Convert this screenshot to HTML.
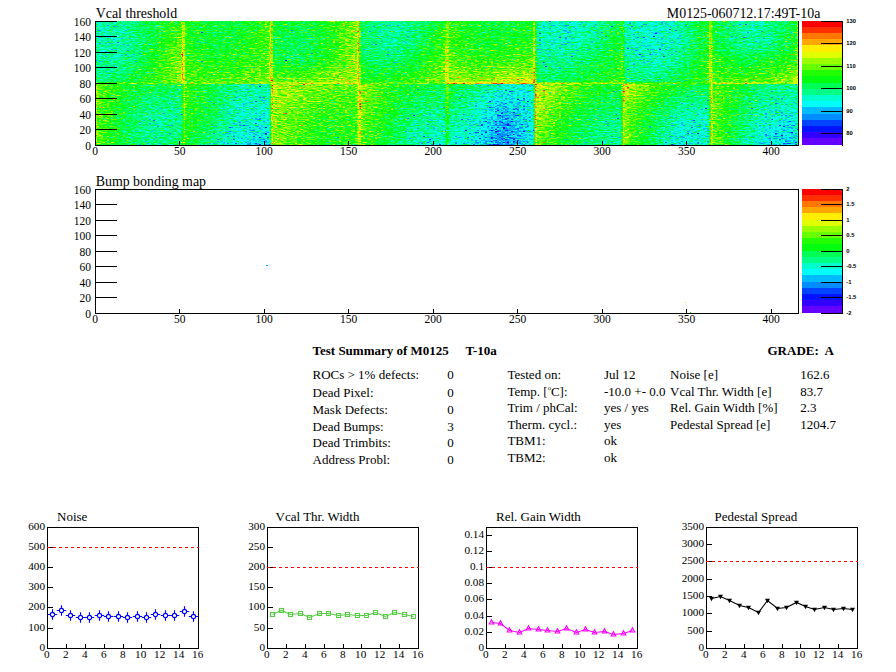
<!DOCTYPE html>
<html lang="en"><head><meta charset="utf-8"><title>M0125 Test Summary</title>
<style>html,body{margin:0;padding:0;background:#fff;overflow:hidden}svg{display:block}text{white-space:pre;font-family:"Liberation Serif","Times New Roman",serif;fill:#000}.t{font-size:13.9px}.u{font-size:13px}.l{font-size:11.5px}.m{font-size:11.2px}.z{font-family:"Liberation Sans",Arial,sans-serif;font-weight:bold;font-size:5.8px}.s{font-size:13px}.b{font-weight:bold}.ax{stroke:#000;stroke-width:1;fill:none;shape-rendering:crispEdges}</style></head><body>
<svg width="896" height="672" viewBox="0 0 896 672">
<defs><filter id="pal" x="95" y="21" width="704" height="125" filterUnits="userSpaceOnUse" primitiveUnits="userSpaceOnUse" color-interpolation-filters="sRGB">
<feTurbulence type="fractalNoise" baseFrequency="0.31 0.83" numOctaves="3" seed="5" result="n"/>
<feComponentTransfer in="n" result="n2"><feFuncR type="table" tableValues="0.0000 0.0493 0.0969 0.1407 0.1808 0.2175 0.2509 0.2813 0.3089 0.3339 0.3566 0.3771 0.3956 0.4124 0.4277 0.4418 0.4547 0.4668 0.4782 0.4892 0.5000 0.5108 0.5218 0.5332 0.5453 0.5582 0.5723 0.5876 0.6044 0.6229 0.6434 0.6661 0.6911 0.7187 0.7491 0.7825 0.8192 0.8593 0.9031 0.9507 1.0000"/></feComponentTransfer>
<feColorMatrix in="n2" type="matrix" values="1 0 0 0 0  1 0 0 0 0  1 0 0 0 0  0 0 0 0 1" result="ng"/>
<feFlood x="95" y="21" width="1" height="1" flood-color="#000" flood-opacity="1" result="dot"/>
<feComposite in="dot" in2="dot" operator="over" x="95" y="21" width="2" height="1" result="cell"/>
<feTile in="cell" result="grid"/>
<feComposite in="ng" in2="grid" operator="in" result="samp"/>
<feOffset in="samp" dx="1" dy="0" result="samp2"/>
<feMerge result="pix"><feMergeNode in="samp"/><feMergeNode in="samp2"/></feMerge>
<feComposite in="SourceGraphic" in2="pix" operator="arithmetic" k1="0" k2="1" k3="1" k4="-0.5"/>
<feComponentTransfer><feFuncR type="discrete" tableValues="0.387 0.200 0.000 0.000 0.000 0.000 0.000 0.000 0.000 0.000 0.000 0.133 0.413 0.600 0.880 1.000 1.000 1.000 1.000 1.000"/><feFuncG type="discrete" tableValues="0.000 0.000 0.080 0.267 0.547 0.733 1.000 1.000 1.000 1.000 1.000 1.000 1.000 1.000 1.000 0.933 0.653 0.467 0.187 0.000"/><feFuncB type="discrete" tableValues="1.000 1.000 1.000 1.000 1.000 1.000 0.987 0.800 0.520 0.333 0.053 0.000 0.000 0.000 0.000 0.000 0.000 0.000 0.000 0.000"/></feComponentTransfer>
</filter><clipPath id="hc"><rect x="96" y="21" width="702" height="124"/></clipPath></defs>
<rect width="896" height="672" fill="#fff"/>
<g clip-path="url(#hc)"><g filter="url(#pal)">
<rect x="90" y="16" width="714" height="134" fill="#868686"/>
<rect x="95.60" y="21.20" width="7.06" height="6.50" fill="#636363"/>
<rect x="102.36" y="21.20" width="7.06" height="6.50" fill="#656565"/>
<rect x="109.12" y="21.20" width="7.06" height="6.50" fill="#676767"/>
<rect x="115.88" y="21.20" width="7.06" height="6.50" fill="#696969"/>
<rect x="122.64" y="21.20" width="7.06" height="6.50" fill="#6b6b6b"/>
<rect x="129.40" y="21.20" width="7.06" height="6.50" fill="#6f6f6f"/>
<rect x="136.16" y="21.20" width="7.06" height="6.50" fill="#747474"/>
<rect x="142.92" y="21.20" width="7.06" height="6.50" fill="#787878"/>
<rect x="149.68" y="21.20" width="7.06" height="6.50" fill="#7d7d7d"/>
<rect x="156.44" y="21.20" width="7.06" height="6.50" fill="#828282"/>
<rect x="163.20" y="21.20" width="7.06" height="6.50" fill="#878787"/>
<rect x="169.96" y="21.20" width="7.06" height="6.50" fill="#8c8c8c"/>
<rect x="176.72" y="21.20" width="7.06" height="6.50" fill="#919191"/>
<rect x="95.60" y="27.40" width="7.06" height="6.50" fill="#626262"/>
<rect x="102.36" y="27.40" width="7.06" height="6.50" fill="#646464"/>
<rect x="109.12" y="27.40" width="7.06" height="6.50" fill="#666666"/>
<rect x="115.88" y="27.40" width="7.06" height="6.50" fill="#686868"/>
<rect x="122.64" y="27.40" width="7.06" height="6.50" fill="#6a6a6a"/>
<rect x="129.40" y="27.40" width="7.06" height="6.50" fill="#6e6e6e"/>
<rect x="136.16" y="27.40" width="7.06" height="6.50" fill="#737373"/>
<rect x="142.92" y="27.40" width="7.06" height="6.50" fill="#797979"/>
<rect x="149.68" y="27.40" width="7.06" height="6.50" fill="#7e7e7e"/>
<rect x="156.44" y="27.40" width="7.06" height="6.50" fill="#848484"/>
<rect x="163.20" y="27.40" width="7.06" height="6.50" fill="#898989"/>
<rect x="169.96" y="27.40" width="7.06" height="6.50" fill="#8f8f8f"/>
<rect x="176.72" y="27.40" width="7.06" height="6.50" fill="#959595"/>
<rect x="95.60" y="33.60" width="7.06" height="6.50" fill="#626262"/>
<rect x="102.36" y="33.60" width="7.06" height="6.50" fill="#646464"/>
<rect x="109.12" y="33.60" width="7.06" height="6.50" fill="#656565"/>
<rect x="115.88" y="33.60" width="7.06" height="6.50" fill="#676767"/>
<rect x="122.64" y="33.60" width="7.06" height="6.50" fill="#696969"/>
<rect x="129.40" y="33.60" width="7.06" height="6.50" fill="#6d6d6d"/>
<rect x="136.16" y="33.60" width="7.06" height="6.50" fill="#737373"/>
<rect x="142.92" y="33.60" width="7.06" height="6.50" fill="#797979"/>
<rect x="149.68" y="33.60" width="7.06" height="6.50" fill="#7f7f7f"/>
<rect x="156.44" y="33.60" width="7.06" height="6.50" fill="#858585"/>
<rect x="163.20" y="33.60" width="7.06" height="6.50" fill="#8b8b8b"/>
<rect x="169.96" y="33.60" width="7.06" height="6.50" fill="#919191"/>
<rect x="176.72" y="33.60" width="7.06" height="6.50" fill="#989898"/>
<rect x="95.60" y="39.80" width="7.06" height="6.50" fill="#626262"/>
<rect x="102.36" y="39.80" width="7.06" height="6.50" fill="#636363"/>
<rect x="109.12" y="39.80" width="7.06" height="6.50" fill="#656565"/>
<rect x="115.88" y="39.80" width="7.06" height="6.50" fill="#666666"/>
<rect x="122.64" y="39.80" width="7.06" height="6.50" fill="#676767"/>
<rect x="129.40" y="39.80" width="7.06" height="6.50" fill="#6c6c6c"/>
<rect x="136.16" y="39.80" width="7.06" height="6.50" fill="#727272"/>
<rect x="142.92" y="39.80" width="7.06" height="6.50" fill="#797979"/>
<rect x="149.68" y="39.80" width="7.06" height="6.50" fill="#7f7f7f"/>
<rect x="156.44" y="39.80" width="7.06" height="6.50" fill="#868686"/>
<rect x="163.20" y="39.80" width="7.06" height="6.50" fill="#8d8d8d"/>
<rect x="169.96" y="39.80" width="7.06" height="6.50" fill="#949494"/>
<rect x="176.72" y="39.80" width="7.06" height="6.50" fill="#9b9b9b"/>
<rect x="95.60" y="46.00" width="7.06" height="6.50" fill="#636363"/>
<rect x="102.36" y="46.00" width="7.06" height="6.50" fill="#646464"/>
<rect x="109.12" y="46.00" width="7.06" height="6.50" fill="#666666"/>
<rect x="115.88" y="46.00" width="7.06" height="6.50" fill="#676767"/>
<rect x="122.64" y="46.00" width="7.06" height="6.50" fill="#686868"/>
<rect x="129.40" y="46.00" width="7.06" height="6.50" fill="#6d6d6d"/>
<rect x="136.16" y="46.00" width="7.06" height="6.50" fill="#747474"/>
<rect x="142.92" y="46.00" width="7.06" height="6.50" fill="#7a7a7a"/>
<rect x="149.68" y="46.00" width="7.06" height="6.50" fill="#818181"/>
<rect x="156.44" y="46.00" width="7.06" height="6.50" fill="#898989"/>
<rect x="163.20" y="46.00" width="7.06" height="6.50" fill="#909090"/>
<rect x="169.96" y="46.00" width="7.06" height="6.50" fill="#979797"/>
<rect x="176.72" y="46.00" width="7.06" height="6.50" fill="#9e9e9e"/>
<rect x="95.60" y="52.20" width="7.06" height="6.50" fill="#646464"/>
<rect x="102.36" y="52.20" width="7.06" height="6.50" fill="#666666"/>
<rect x="109.12" y="52.20" width="7.06" height="6.50" fill="#676767"/>
<rect x="115.88" y="52.20" width="7.06" height="6.50" fill="#696969"/>
<rect x="122.64" y="52.20" width="7.06" height="6.50" fill="#6a6a6a"/>
<rect x="129.40" y="52.20" width="7.06" height="6.50" fill="#6f6f6f"/>
<rect x="136.16" y="52.20" width="7.06" height="6.50" fill="#767676"/>
<rect x="142.92" y="52.20" width="7.06" height="6.50" fill="#7c7c7c"/>
<rect x="149.68" y="52.20" width="7.06" height="6.50" fill="#838383"/>
<rect x="156.44" y="52.20" width="7.06" height="6.50" fill="#8b8b8b"/>
<rect x="163.20" y="52.20" width="7.06" height="6.50" fill="#939393"/>
<rect x="169.96" y="52.20" width="7.06" height="6.50" fill="#9a9a9a"/>
<rect x="176.72" y="52.20" width="7.06" height="6.50" fill="#a2a2a2"/>
<rect x="95.60" y="58.40" width="7.06" height="6.50" fill="#666666"/>
<rect x="102.36" y="58.40" width="7.06" height="6.50" fill="#686868"/>
<rect x="109.12" y="58.40" width="7.06" height="6.50" fill="#696969"/>
<rect x="115.88" y="58.40" width="7.06" height="6.50" fill="#6b6b6b"/>
<rect x="122.64" y="58.40" width="7.06" height="6.50" fill="#6d6d6d"/>
<rect x="129.40" y="58.40" width="7.06" height="6.50" fill="#727272"/>
<rect x="136.16" y="58.40" width="7.06" height="6.50" fill="#787878"/>
<rect x="142.92" y="58.40" width="7.06" height="6.50" fill="#7f7f7f"/>
<rect x="149.68" y="58.40" width="7.06" height="6.50" fill="#868686"/>
<rect x="156.44" y="58.40" width="7.06" height="6.50" fill="#8e8e8e"/>
<rect x="163.20" y="58.40" width="7.06" height="6.50" fill="#959595"/>
<rect x="169.96" y="58.40" width="7.06" height="6.50" fill="#9d9d9d"/>
<rect x="176.72" y="58.40" width="7.06" height="6.50" fill="#a5a5a5"/>
<rect x="95.60" y="64.60" width="7.06" height="6.50" fill="#696969"/>
<rect x="102.36" y="64.60" width="7.06" height="6.50" fill="#6b6b6b"/>
<rect x="109.12" y="64.60" width="7.06" height="6.50" fill="#6d6d6d"/>
<rect x="115.88" y="64.60" width="7.06" height="6.50" fill="#6f6f6f"/>
<rect x="122.64" y="64.60" width="7.06" height="6.50" fill="#717171"/>
<rect x="129.40" y="64.60" width="7.06" height="6.50" fill="#767676"/>
<rect x="136.16" y="64.60" width="7.06" height="6.50" fill="#7c7c7c"/>
<rect x="142.92" y="64.60" width="7.06" height="6.50" fill="#828282"/>
<rect x="149.68" y="64.60" width="7.06" height="6.50" fill="#898989"/>
<rect x="156.44" y="64.60" width="7.06" height="6.50" fill="#909090"/>
<rect x="163.20" y="64.60" width="7.06" height="6.50" fill="#979797"/>
<rect x="169.96" y="64.60" width="7.06" height="6.50" fill="#9e9e9e"/>
<rect x="176.72" y="64.60" width="7.06" height="6.50" fill="#a5a5a5"/>
<rect x="95.60" y="70.80" width="7.06" height="6.50" fill="#6c6c6c"/>
<rect x="102.36" y="70.80" width="7.06" height="6.50" fill="#6e6e6e"/>
<rect x="109.12" y="70.80" width="7.06" height="6.50" fill="#707070"/>
<rect x="115.88" y="70.80" width="7.06" height="6.50" fill="#727272"/>
<rect x="122.64" y="70.80" width="7.06" height="6.50" fill="#757575"/>
<rect x="129.40" y="70.80" width="7.06" height="6.50" fill="#7a7a7a"/>
<rect x="136.16" y="70.80" width="7.06" height="6.50" fill="#808080"/>
<rect x="142.92" y="70.80" width="7.06" height="6.50" fill="#868686"/>
<rect x="149.68" y="70.80" width="7.06" height="6.50" fill="#8c8c8c"/>
<rect x="156.44" y="70.80" width="7.06" height="6.50" fill="#939393"/>
<rect x="163.20" y="70.80" width="7.06" height="6.50" fill="#999999"/>
<rect x="169.96" y="70.80" width="7.06" height="6.50" fill="#a0a0a0"/>
<rect x="176.72" y="70.80" width="7.06" height="6.50" fill="#a6a6a6"/>
<rect x="95.60" y="77.00" width="7.06" height="6.50" fill="#6e6e6e"/>
<rect x="102.36" y="77.00" width="7.06" height="6.50" fill="#717171"/>
<rect x="109.12" y="77.00" width="7.06" height="6.50" fill="#737373"/>
<rect x="115.88" y="77.00" width="7.06" height="6.50" fill="#767676"/>
<rect x="122.64" y="77.00" width="7.06" height="6.50" fill="#797979"/>
<rect x="129.40" y="77.00" width="7.06" height="6.50" fill="#7d7d7d"/>
<rect x="136.16" y="77.00" width="7.06" height="6.50" fill="#848484"/>
<rect x="142.92" y="77.00" width="7.06" height="6.50" fill="#8a8a8a"/>
<rect x="149.68" y="77.00" width="7.06" height="6.50" fill="#909090"/>
<rect x="156.44" y="77.00" width="7.06" height="6.50" fill="#969696"/>
<rect x="163.20" y="77.00" width="7.06" height="6.50" fill="#9b9b9b"/>
<rect x="169.96" y="77.00" width="7.06" height="6.50" fill="#a1a1a1"/>
<rect x="176.72" y="77.00" width="7.06" height="6.50" fill="#a7a7a7"/>
<rect x="95.60" y="83.20" width="7.06" height="6.50" fill="#9d9d9d"/>
<rect x="102.36" y="83.20" width="7.06" height="6.50" fill="#979797"/>
<rect x="109.12" y="83.20" width="7.06" height="6.50" fill="#919191"/>
<rect x="115.88" y="83.20" width="7.06" height="6.50" fill="#8c8c8c"/>
<rect x="122.64" y="83.20" width="7.06" height="6.50" fill="#868686"/>
<rect x="129.40" y="83.20" width="7.06" height="6.50" fill="#838383"/>
<rect x="136.16" y="83.20" width="7.06" height="6.50" fill="#808080"/>
<rect x="142.92" y="83.20" width="7.06" height="6.50" fill="#7d7d7d"/>
<rect x="149.68" y="83.20" width="7.06" height="6.50" fill="#7b7b7b"/>
<rect x="156.44" y="83.20" width="7.06" height="6.50" fill="#7b7b7b"/>
<rect x="163.20" y="83.20" width="7.06" height="6.50" fill="#7b7b7b"/>
<rect x="169.96" y="83.20" width="7.06" height="6.50" fill="#7b7b7b"/>
<rect x="176.72" y="83.20" width="7.06" height="6.50" fill="#7b7b7b"/>
<rect x="95.60" y="89.40" width="7.06" height="6.50" fill="#9c9c9c"/>
<rect x="102.36" y="89.40" width="7.06" height="6.50" fill="#969696"/>
<rect x="109.12" y="89.40" width="7.06" height="6.50" fill="#909090"/>
<rect x="115.88" y="89.40" width="7.06" height="6.50" fill="#8a8a8a"/>
<rect x="122.64" y="89.40" width="7.06" height="6.50" fill="#848484"/>
<rect x="129.40" y="89.40" width="7.06" height="6.50" fill="#7f7f7f"/>
<rect x="136.16" y="89.40" width="7.06" height="6.50" fill="#7c7c7c"/>
<rect x="142.92" y="89.40" width="7.06" height="6.50" fill="#797979"/>
<rect x="149.68" y="89.40" width="7.06" height="6.50" fill="#777777"/>
<rect x="156.44" y="89.40" width="7.06" height="6.50" fill="#777777"/>
<rect x="163.20" y="89.40" width="7.06" height="6.50" fill="#777777"/>
<rect x="169.96" y="89.40" width="7.06" height="6.50" fill="#777777"/>
<rect x="176.72" y="89.40" width="7.06" height="6.50" fill="#777777"/>
<rect x="95.60" y="95.60" width="7.06" height="6.50" fill="#9b9b9b"/>
<rect x="102.36" y="95.60" width="7.06" height="6.50" fill="#949494"/>
<rect x="109.12" y="95.60" width="7.06" height="6.50" fill="#8e8e8e"/>
<rect x="115.88" y="95.60" width="7.06" height="6.50" fill="#878787"/>
<rect x="122.64" y="95.60" width="7.06" height="6.50" fill="#818181"/>
<rect x="129.40" y="95.60" width="7.06" height="6.50" fill="#7c7c7c"/>
<rect x="136.16" y="95.60" width="7.06" height="6.50" fill="#787878"/>
<rect x="142.92" y="95.60" width="7.06" height="6.50" fill="#747474"/>
<rect x="149.68" y="95.60" width="7.06" height="6.50" fill="#727272"/>
<rect x="156.44" y="95.60" width="7.06" height="6.50" fill="#727272"/>
<rect x="163.20" y="95.60" width="7.06" height="6.50" fill="#737373"/>
<rect x="169.96" y="95.60" width="7.06" height="6.50" fill="#737373"/>
<rect x="176.72" y="95.60" width="7.06" height="6.50" fill="#737373"/>
<rect x="95.60" y="101.80" width="7.06" height="6.50" fill="#9a9a9a"/>
<rect x="102.36" y="101.80" width="7.06" height="6.50" fill="#939393"/>
<rect x="109.12" y="101.80" width="7.06" height="6.50" fill="#8c8c8c"/>
<rect x="115.88" y="101.80" width="7.06" height="6.50" fill="#858585"/>
<rect x="122.64" y="101.80" width="7.06" height="6.50" fill="#7e7e7e"/>
<rect x="129.40" y="101.80" width="7.06" height="6.50" fill="#797979"/>
<rect x="136.16" y="101.80" width="7.06" height="6.50" fill="#747474"/>
<rect x="142.92" y="101.80" width="7.06" height="6.50" fill="#707070"/>
<rect x="149.68" y="101.80" width="7.06" height="6.50" fill="#6e6e6e"/>
<rect x="156.44" y="101.80" width="7.06" height="6.50" fill="#6e6e6e"/>
<rect x="163.20" y="101.80" width="7.06" height="6.50" fill="#6e6e6e"/>
<rect x="169.96" y="101.80" width="7.06" height="6.50" fill="#6f6f6f"/>
<rect x="176.72" y="101.80" width="7.06" height="6.50" fill="#6f6f6f"/>
<rect x="95.60" y="108.00" width="7.06" height="6.50" fill="#999999"/>
<rect x="102.36" y="108.00" width="7.06" height="6.50" fill="#929292"/>
<rect x="109.12" y="108.00" width="7.06" height="6.50" fill="#8b8b8b"/>
<rect x="115.88" y="108.00" width="7.06" height="6.50" fill="#848484"/>
<rect x="122.64" y="108.00" width="7.06" height="6.50" fill="#7c7c7c"/>
<rect x="129.40" y="108.00" width="7.06" height="6.50" fill="#777777"/>
<rect x="136.16" y="108.00" width="7.06" height="6.50" fill="#727272"/>
<rect x="142.92" y="108.00" width="7.06" height="6.50" fill="#6e6e6e"/>
<rect x="149.68" y="108.00" width="7.06" height="6.50" fill="#6b6b6b"/>
<rect x="156.44" y="108.00" width="7.06" height="6.50" fill="#6b6b6b"/>
<rect x="163.20" y="108.00" width="7.06" height="6.50" fill="#6b6b6b"/>
<rect x="169.96" y="108.00" width="7.06" height="6.50" fill="#6c6c6c"/>
<rect x="176.72" y="108.00" width="7.06" height="6.50" fill="#6c6c6c"/>
<rect x="95.60" y="114.20" width="7.06" height="6.50" fill="#999999"/>
<rect x="102.36" y="114.20" width="7.06" height="6.50" fill="#919191"/>
<rect x="109.12" y="114.20" width="7.06" height="6.50" fill="#8a8a8a"/>
<rect x="115.88" y="114.20" width="7.06" height="6.50" fill="#838383"/>
<rect x="122.64" y="114.20" width="7.06" height="6.50" fill="#7b7b7b"/>
<rect x="129.40" y="114.20" width="7.06" height="6.50" fill="#767676"/>
<rect x="136.16" y="114.20" width="7.06" height="6.50" fill="#717171"/>
<rect x="142.92" y="114.20" width="7.06" height="6.50" fill="#6c6c6c"/>
<rect x="149.68" y="114.20" width="7.06" height="6.50" fill="#696969"/>
<rect x="156.44" y="114.20" width="7.06" height="6.50" fill="#696969"/>
<rect x="163.20" y="114.20" width="7.06" height="6.50" fill="#696969"/>
<rect x="169.96" y="114.20" width="7.06" height="6.50" fill="#696969"/>
<rect x="176.72" y="114.20" width="7.06" height="6.50" fill="#696969"/>
<rect x="95.60" y="120.40" width="7.06" height="6.50" fill="#989898"/>
<rect x="102.36" y="120.40" width="7.06" height="6.50" fill="#919191"/>
<rect x="109.12" y="120.40" width="7.06" height="6.50" fill="#8a8a8a"/>
<rect x="115.88" y="120.40" width="7.06" height="6.50" fill="#828282"/>
<rect x="122.64" y="120.40" width="7.06" height="6.50" fill="#7b7b7b"/>
<rect x="129.40" y="120.40" width="7.06" height="6.50" fill="#757575"/>
<rect x="136.16" y="120.40" width="7.06" height="6.50" fill="#707070"/>
<rect x="142.92" y="120.40" width="7.06" height="6.50" fill="#6b6b6b"/>
<rect x="149.68" y="120.40" width="7.06" height="6.50" fill="#686868"/>
<rect x="156.44" y="120.40" width="7.06" height="6.50" fill="#686868"/>
<rect x="163.20" y="120.40" width="7.06" height="6.50" fill="#686868"/>
<rect x="169.96" y="120.40" width="7.06" height="6.50" fill="#686868"/>
<rect x="176.72" y="120.40" width="7.06" height="6.50" fill="#686868"/>
<rect x="95.60" y="126.60" width="7.06" height="6.50" fill="#989898"/>
<rect x="102.36" y="126.60" width="7.06" height="6.50" fill="#919191"/>
<rect x="109.12" y="126.60" width="7.06" height="6.50" fill="#8a8a8a"/>
<rect x="115.88" y="126.60" width="7.06" height="6.50" fill="#828282"/>
<rect x="122.64" y="126.60" width="7.06" height="6.50" fill="#7b7b7b"/>
<rect x="129.40" y="126.60" width="7.06" height="6.50" fill="#757575"/>
<rect x="136.16" y="126.60" width="7.06" height="6.50" fill="#717171"/>
<rect x="142.92" y="126.60" width="7.06" height="6.50" fill="#6c6c6c"/>
<rect x="149.68" y="126.60" width="7.06" height="6.50" fill="#696969"/>
<rect x="156.44" y="126.60" width="7.06" height="6.50" fill="#6a6a6a"/>
<rect x="163.20" y="126.60" width="7.06" height="6.50" fill="#6b6b6b"/>
<rect x="169.96" y="126.60" width="7.06" height="6.50" fill="#6c6c6c"/>
<rect x="176.72" y="126.60" width="7.06" height="6.50" fill="#6d6d6d"/>
<rect x="95.60" y="132.80" width="7.06" height="6.50" fill="#989898"/>
<rect x="102.36" y="132.80" width="7.06" height="6.50" fill="#919191"/>
<rect x="109.12" y="132.80" width="7.06" height="6.50" fill="#8a8a8a"/>
<rect x="115.88" y="132.80" width="7.06" height="6.50" fill="#828282"/>
<rect x="122.64" y="132.80" width="7.06" height="6.50" fill="#7b7b7b"/>
<rect x="129.40" y="132.80" width="7.06" height="6.50" fill="#757575"/>
<rect x="136.16" y="132.80" width="7.06" height="6.50" fill="#717171"/>
<rect x="142.92" y="132.80" width="7.06" height="6.50" fill="#6d6d6d"/>
<rect x="149.68" y="132.80" width="7.06" height="6.50" fill="#6b6b6b"/>
<rect x="156.44" y="132.80" width="7.06" height="6.50" fill="#6d6d6d"/>
<rect x="163.20" y="132.80" width="7.06" height="6.50" fill="#6e6e6e"/>
<rect x="169.96" y="132.80" width="7.06" height="6.50" fill="#6f6f6f"/>
<rect x="176.72" y="132.80" width="7.06" height="6.50" fill="#717171"/>
<rect x="95.60" y="139.00" width="7.06" height="6.50" fill="#989898"/>
<rect x="102.36" y="139.00" width="7.06" height="6.50" fill="#919191"/>
<rect x="109.12" y="139.00" width="7.06" height="6.50" fill="#8a8a8a"/>
<rect x="115.88" y="139.00" width="7.06" height="6.50" fill="#828282"/>
<rect x="122.64" y="139.00" width="7.06" height="6.50" fill="#7b7b7b"/>
<rect x="129.40" y="139.00" width="7.06" height="6.50" fill="#767676"/>
<rect x="136.16" y="139.00" width="7.06" height="6.50" fill="#727272"/>
<rect x="142.92" y="139.00" width="7.06" height="6.50" fill="#6e6e6e"/>
<rect x="149.68" y="139.00" width="7.06" height="6.50" fill="#6d6d6d"/>
<rect x="156.44" y="139.00" width="7.06" height="6.50" fill="#6f6f6f"/>
<rect x="163.20" y="139.00" width="7.06" height="6.50" fill="#717171"/>
<rect x="169.96" y="139.00" width="7.06" height="6.50" fill="#737373"/>
<rect x="176.72" y="139.00" width="7.06" height="6.50" fill="#757575"/>
<rect x="183.47" y="21.20" width="7.06" height="6.50" fill="#898989"/>
<rect x="190.23" y="21.20" width="7.06" height="6.50" fill="#868686"/>
<rect x="196.99" y="21.20" width="7.06" height="6.50" fill="#838383"/>
<rect x="203.75" y="21.20" width="7.06" height="6.50" fill="#808080"/>
<rect x="210.51" y="21.20" width="7.06" height="6.50" fill="#7e7e7e"/>
<rect x="217.27" y="21.20" width="7.06" height="6.50" fill="#7d7d7d"/>
<rect x="224.03" y="21.20" width="7.06" height="6.50" fill="#7e7e7e"/>
<rect x="230.79" y="21.20" width="7.06" height="6.50" fill="#7f7f7f"/>
<rect x="237.55" y="21.20" width="7.06" height="6.50" fill="#818181"/>
<rect x="244.31" y="21.20" width="7.06" height="6.50" fill="#868686"/>
<rect x="251.07" y="21.20" width="7.06" height="6.50" fill="#8b8b8b"/>
<rect x="257.83" y="21.20" width="7.06" height="6.50" fill="#909090"/>
<rect x="264.59" y="21.20" width="7.06" height="6.50" fill="#959595"/>
<rect x="183.47" y="27.40" width="7.06" height="6.50" fill="#898989"/>
<rect x="190.23" y="27.40" width="7.06" height="6.50" fill="#868686"/>
<rect x="196.99" y="27.40" width="7.06" height="6.50" fill="#848484"/>
<rect x="203.75" y="27.40" width="7.06" height="6.50" fill="#818181"/>
<rect x="210.51" y="27.40" width="7.06" height="6.50" fill="#7e7e7e"/>
<rect x="217.27" y="27.40" width="7.06" height="6.50" fill="#7e7e7e"/>
<rect x="224.03" y="27.40" width="7.06" height="6.50" fill="#7f7f7f"/>
<rect x="230.79" y="27.40" width="7.06" height="6.50" fill="#808080"/>
<rect x="237.55" y="27.40" width="7.06" height="6.50" fill="#838383"/>
<rect x="244.31" y="27.40" width="7.06" height="6.50" fill="#888888"/>
<rect x="251.07" y="27.40" width="7.06" height="6.50" fill="#8c8c8c"/>
<rect x="257.83" y="27.40" width="7.06" height="6.50" fill="#919191"/>
<rect x="264.59" y="27.40" width="7.06" height="6.50" fill="#959595"/>
<rect x="183.47" y="33.60" width="7.06" height="6.50" fill="#8a8a8a"/>
<rect x="190.23" y="33.60" width="7.06" height="6.50" fill="#878787"/>
<rect x="196.99" y="33.60" width="7.06" height="6.50" fill="#848484"/>
<rect x="203.75" y="33.60" width="7.06" height="6.50" fill="#818181"/>
<rect x="210.51" y="33.60" width="7.06" height="6.50" fill="#7f7f7f"/>
<rect x="217.27" y="33.60" width="7.06" height="6.50" fill="#7f7f7f"/>
<rect x="224.03" y="33.60" width="7.06" height="6.50" fill="#808080"/>
<rect x="230.79" y="33.60" width="7.06" height="6.50" fill="#828282"/>
<rect x="237.55" y="33.60" width="7.06" height="6.50" fill="#858585"/>
<rect x="244.31" y="33.60" width="7.06" height="6.50" fill="#898989"/>
<rect x="251.07" y="33.60" width="7.06" height="6.50" fill="#8d8d8d"/>
<rect x="257.83" y="33.60" width="7.06" height="6.50" fill="#919191"/>
<rect x="264.59" y="33.60" width="7.06" height="6.50" fill="#959595"/>
<rect x="183.47" y="39.80" width="7.06" height="6.50" fill="#8a8a8a"/>
<rect x="190.23" y="39.80" width="7.06" height="6.50" fill="#878787"/>
<rect x="196.99" y="39.80" width="7.06" height="6.50" fill="#858585"/>
<rect x="203.75" y="39.80" width="7.06" height="6.50" fill="#828282"/>
<rect x="210.51" y="39.80" width="7.06" height="6.50" fill="#7f7f7f"/>
<rect x="217.27" y="39.80" width="7.06" height="6.50" fill="#7f7f7f"/>
<rect x="224.03" y="39.80" width="7.06" height="6.50" fill="#828282"/>
<rect x="230.79" y="39.80" width="7.06" height="6.50" fill="#848484"/>
<rect x="237.55" y="39.80" width="7.06" height="6.50" fill="#878787"/>
<rect x="244.31" y="39.80" width="7.06" height="6.50" fill="#8a8a8a"/>
<rect x="251.07" y="39.80" width="7.06" height="6.50" fill="#8e8e8e"/>
<rect x="257.83" y="39.80" width="7.06" height="6.50" fill="#929292"/>
<rect x="264.59" y="39.80" width="7.06" height="6.50" fill="#959595"/>
<rect x="183.47" y="46.00" width="7.06" height="6.50" fill="#8d8d8d"/>
<rect x="190.23" y="46.00" width="7.06" height="6.50" fill="#8a8a8a"/>
<rect x="196.99" y="46.00" width="7.06" height="6.50" fill="#878787"/>
<rect x="203.75" y="46.00" width="7.06" height="6.50" fill="#858585"/>
<rect x="210.51" y="46.00" width="7.06" height="6.50" fill="#828282"/>
<rect x="217.27" y="46.00" width="7.06" height="6.50" fill="#828282"/>
<rect x="224.03" y="46.00" width="7.06" height="6.50" fill="#848484"/>
<rect x="230.79" y="46.00" width="7.06" height="6.50" fill="#868686"/>
<rect x="237.55" y="46.00" width="7.06" height="6.50" fill="#898989"/>
<rect x="244.31" y="46.00" width="7.06" height="6.50" fill="#8c8c8c"/>
<rect x="251.07" y="46.00" width="7.06" height="6.50" fill="#909090"/>
<rect x="257.83" y="46.00" width="7.06" height="6.50" fill="#939393"/>
<rect x="264.59" y="46.00" width="7.06" height="6.50" fill="#979797"/>
<rect x="183.47" y="52.20" width="7.06" height="6.50" fill="#909090"/>
<rect x="190.23" y="52.20" width="7.06" height="6.50" fill="#8e8e8e"/>
<rect x="196.99" y="52.20" width="7.06" height="6.50" fill="#8b8b8b"/>
<rect x="203.75" y="52.20" width="7.06" height="6.50" fill="#888888"/>
<rect x="210.51" y="52.20" width="7.06" height="6.50" fill="#868686"/>
<rect x="217.27" y="52.20" width="7.06" height="6.50" fill="#868686"/>
<rect x="224.03" y="52.20" width="7.06" height="6.50" fill="#878787"/>
<rect x="230.79" y="52.20" width="7.06" height="6.50" fill="#898989"/>
<rect x="237.55" y="52.20" width="7.06" height="6.50" fill="#8c8c8c"/>
<rect x="244.31" y="52.20" width="7.06" height="6.50" fill="#8f8f8f"/>
<rect x="251.07" y="52.20" width="7.06" height="6.50" fill="#929292"/>
<rect x="257.83" y="52.20" width="7.06" height="6.50" fill="#959595"/>
<rect x="264.59" y="52.20" width="7.06" height="6.50" fill="#999999"/>
<rect x="183.47" y="58.40" width="7.06" height="6.50" fill="#939393"/>
<rect x="190.23" y="58.40" width="7.06" height="6.50" fill="#919191"/>
<rect x="196.99" y="58.40" width="7.06" height="6.50" fill="#8e8e8e"/>
<rect x="203.75" y="58.40" width="7.06" height="6.50" fill="#8c8c8c"/>
<rect x="210.51" y="58.40" width="7.06" height="6.50" fill="#898989"/>
<rect x="217.27" y="58.40" width="7.06" height="6.50" fill="#898989"/>
<rect x="224.03" y="58.40" width="7.06" height="6.50" fill="#8b8b8b"/>
<rect x="230.79" y="58.40" width="7.06" height="6.50" fill="#8c8c8c"/>
<rect x="237.55" y="58.40" width="7.06" height="6.50" fill="#8e8e8e"/>
<rect x="244.31" y="58.40" width="7.06" height="6.50" fill="#919191"/>
<rect x="251.07" y="58.40" width="7.06" height="6.50" fill="#949494"/>
<rect x="257.83" y="58.40" width="7.06" height="6.50" fill="#979797"/>
<rect x="264.59" y="58.40" width="7.06" height="6.50" fill="#9a9a9a"/>
<rect x="183.47" y="64.60" width="7.06" height="6.50" fill="#959595"/>
<rect x="190.23" y="64.60" width="7.06" height="6.50" fill="#939393"/>
<rect x="196.99" y="64.60" width="7.06" height="6.50" fill="#919191"/>
<rect x="203.75" y="64.60" width="7.06" height="6.50" fill="#8f8f8f"/>
<rect x="210.51" y="64.60" width="7.06" height="6.50" fill="#8d8d8d"/>
<rect x="217.27" y="64.60" width="7.06" height="6.50" fill="#8d8d8d"/>
<rect x="224.03" y="64.60" width="7.06" height="6.50" fill="#8f8f8f"/>
<rect x="230.79" y="64.60" width="7.06" height="6.50" fill="#909090"/>
<rect x="237.55" y="64.60" width="7.06" height="6.50" fill="#929292"/>
<rect x="244.31" y="64.60" width="7.06" height="6.50" fill="#959595"/>
<rect x="251.07" y="64.60" width="7.06" height="6.50" fill="#979797"/>
<rect x="257.83" y="64.60" width="7.06" height="6.50" fill="#9a9a9a"/>
<rect x="264.59" y="64.60" width="7.06" height="6.50" fill="#9d9d9d"/>
<rect x="183.47" y="70.80" width="7.06" height="6.50" fill="#969696"/>
<rect x="190.23" y="70.80" width="7.06" height="6.50" fill="#959595"/>
<rect x="196.99" y="70.80" width="7.06" height="6.50" fill="#939393"/>
<rect x="203.75" y="70.80" width="7.06" height="6.50" fill="#929292"/>
<rect x="210.51" y="70.80" width="7.06" height="6.50" fill="#919191"/>
<rect x="217.27" y="70.80" width="7.06" height="6.50" fill="#919191"/>
<rect x="224.03" y="70.80" width="7.06" height="6.50" fill="#939393"/>
<rect x="230.79" y="70.80" width="7.06" height="6.50" fill="#949494"/>
<rect x="237.55" y="70.80" width="7.06" height="6.50" fill="#969696"/>
<rect x="244.31" y="70.80" width="7.06" height="6.50" fill="#989898"/>
<rect x="251.07" y="70.80" width="7.06" height="6.50" fill="#9a9a9a"/>
<rect x="257.83" y="70.80" width="7.06" height="6.50" fill="#9c9c9c"/>
<rect x="264.59" y="70.80" width="7.06" height="6.50" fill="#9f9f9f"/>
<rect x="183.47" y="77.00" width="7.06" height="6.50" fill="#979797"/>
<rect x="190.23" y="77.00" width="7.06" height="6.50" fill="#979797"/>
<rect x="196.99" y="77.00" width="7.06" height="6.50" fill="#969696"/>
<rect x="203.75" y="77.00" width="7.06" height="6.50" fill="#959595"/>
<rect x="210.51" y="77.00" width="7.06" height="6.50" fill="#959595"/>
<rect x="217.27" y="77.00" width="7.06" height="6.50" fill="#959595"/>
<rect x="224.03" y="77.00" width="7.06" height="6.50" fill="#979797"/>
<rect x="230.79" y="77.00" width="7.06" height="6.50" fill="#999999"/>
<rect x="237.55" y="77.00" width="7.06" height="6.50" fill="#9a9a9a"/>
<rect x="244.31" y="77.00" width="7.06" height="6.50" fill="#9c9c9c"/>
<rect x="251.07" y="77.00" width="7.06" height="6.50" fill="#9d9d9d"/>
<rect x="257.83" y="77.00" width="7.06" height="6.50" fill="#9f9f9f"/>
<rect x="264.59" y="77.00" width="7.06" height="6.50" fill="#a1a1a1"/>
<rect x="183.47" y="83.20" width="7.06" height="6.50" fill="#919191"/>
<rect x="190.23" y="83.20" width="7.06" height="6.50" fill="#8c8c8c"/>
<rect x="196.99" y="83.20" width="7.06" height="6.50" fill="#868686"/>
<rect x="203.75" y="83.20" width="7.06" height="6.50" fill="#818181"/>
<rect x="210.51" y="83.20" width="7.06" height="6.50" fill="#7c7c7c"/>
<rect x="217.27" y="83.20" width="7.06" height="6.50" fill="#767676"/>
<rect x="224.03" y="83.20" width="7.06" height="6.50" fill="#717171"/>
<rect x="230.79" y="83.20" width="7.06" height="6.50" fill="#6b6b6b"/>
<rect x="237.55" y="83.20" width="7.06" height="6.50" fill="#676767"/>
<rect x="244.31" y="83.20" width="7.06" height="6.50" fill="#676767"/>
<rect x="251.07" y="83.20" width="7.06" height="6.50" fill="#676767"/>
<rect x="257.83" y="83.20" width="7.06" height="6.50" fill="#666666"/>
<rect x="264.59" y="83.20" width="7.06" height="6.50" fill="#666666"/>
<rect x="183.47" y="89.40" width="7.06" height="6.50" fill="#919191"/>
<rect x="190.23" y="89.40" width="7.06" height="6.50" fill="#8c8c8c"/>
<rect x="196.99" y="89.40" width="7.06" height="6.50" fill="#868686"/>
<rect x="203.75" y="89.40" width="7.06" height="6.50" fill="#818181"/>
<rect x="210.51" y="89.40" width="7.06" height="6.50" fill="#7b7b7b"/>
<rect x="217.27" y="89.40" width="7.06" height="6.50" fill="#757575"/>
<rect x="224.03" y="89.40" width="7.06" height="6.50" fill="#6f6f6f"/>
<rect x="230.79" y="89.40" width="7.06" height="6.50" fill="#696969"/>
<rect x="237.55" y="89.40" width="7.06" height="6.50" fill="#656565"/>
<rect x="244.31" y="89.40" width="7.06" height="6.50" fill="#656565"/>
<rect x="251.07" y="89.40" width="7.06" height="6.50" fill="#656565"/>
<rect x="257.83" y="89.40" width="7.06" height="6.50" fill="#646464"/>
<rect x="264.59" y="89.40" width="7.06" height="6.50" fill="#646464"/>
<rect x="183.47" y="95.60" width="7.06" height="6.50" fill="#919191"/>
<rect x="190.23" y="95.60" width="7.06" height="6.50" fill="#8c8c8c"/>
<rect x="196.99" y="95.60" width="7.06" height="6.50" fill="#868686"/>
<rect x="203.75" y="95.60" width="7.06" height="6.50" fill="#808080"/>
<rect x="210.51" y="95.60" width="7.06" height="6.50" fill="#7b7b7b"/>
<rect x="217.27" y="95.60" width="7.06" height="6.50" fill="#747474"/>
<rect x="224.03" y="95.60" width="7.06" height="6.50" fill="#6e6e6e"/>
<rect x="230.79" y="95.60" width="7.06" height="6.50" fill="#676767"/>
<rect x="237.55" y="95.60" width="7.06" height="6.50" fill="#636363"/>
<rect x="244.31" y="95.60" width="7.06" height="6.50" fill="#636363"/>
<rect x="251.07" y="95.60" width="7.06" height="6.50" fill="#636363"/>
<rect x="257.83" y="95.60" width="7.06" height="6.50" fill="#626262"/>
<rect x="264.59" y="95.60" width="7.06" height="6.50" fill="#626262"/>
<rect x="183.47" y="101.80" width="7.06" height="6.50" fill="#929292"/>
<rect x="190.23" y="101.80" width="7.06" height="6.50" fill="#8c8c8c"/>
<rect x="196.99" y="101.80" width="7.06" height="6.50" fill="#868686"/>
<rect x="203.75" y="101.80" width="7.06" height="6.50" fill="#808080"/>
<rect x="210.51" y="101.80" width="7.06" height="6.50" fill="#7a7a7a"/>
<rect x="217.27" y="101.80" width="7.06" height="6.50" fill="#747474"/>
<rect x="224.03" y="101.80" width="7.06" height="6.50" fill="#6d6d6d"/>
<rect x="230.79" y="101.80" width="7.06" height="6.50" fill="#666666"/>
<rect x="237.55" y="101.80" width="7.06" height="6.50" fill="#616161"/>
<rect x="244.31" y="101.80" width="7.06" height="6.50" fill="#616161"/>
<rect x="251.07" y="101.80" width="7.06" height="6.50" fill="#606060"/>
<rect x="257.83" y="101.80" width="7.06" height="6.50" fill="#606060"/>
<rect x="264.59" y="101.80" width="7.06" height="6.50" fill="#606060"/>
<rect x="183.47" y="108.00" width="7.06" height="6.50" fill="#909090"/>
<rect x="190.23" y="108.00" width="7.06" height="6.50" fill="#8a8a8a"/>
<rect x="196.99" y="108.00" width="7.06" height="6.50" fill="#848484"/>
<rect x="203.75" y="108.00" width="7.06" height="6.50" fill="#7e7e7e"/>
<rect x="210.51" y="108.00" width="7.06" height="6.50" fill="#787878"/>
<rect x="217.27" y="108.00" width="7.06" height="6.50" fill="#727272"/>
<rect x="224.03" y="108.00" width="7.06" height="6.50" fill="#6b6b6b"/>
<rect x="230.79" y="108.00" width="7.06" height="6.50" fill="#646464"/>
<rect x="237.55" y="108.00" width="7.06" height="6.50" fill="#5f5f5f"/>
<rect x="244.31" y="108.00" width="7.06" height="6.50" fill="#5f5f5f"/>
<rect x="251.07" y="108.00" width="7.06" height="6.50" fill="#5e5e5e"/>
<rect x="257.83" y="108.00" width="7.06" height="6.50" fill="#5d5d5d"/>
<rect x="264.59" y="108.00" width="7.06" height="6.50" fill="#5c5c5c"/>
<rect x="183.47" y="114.20" width="7.06" height="6.50" fill="#8d8d8d"/>
<rect x="190.23" y="114.20" width="7.06" height="6.50" fill="#878787"/>
<rect x="196.99" y="114.20" width="7.06" height="6.50" fill="#828282"/>
<rect x="203.75" y="114.20" width="7.06" height="6.50" fill="#7c7c7c"/>
<rect x="210.51" y="114.20" width="7.06" height="6.50" fill="#767676"/>
<rect x="217.27" y="114.20" width="7.06" height="6.50" fill="#707070"/>
<rect x="224.03" y="114.20" width="7.06" height="6.50" fill="#696969"/>
<rect x="230.79" y="114.20" width="7.06" height="6.50" fill="#626262"/>
<rect x="237.55" y="114.20" width="7.06" height="6.50" fill="#5e5e5e"/>
<rect x="244.31" y="114.20" width="7.06" height="6.50" fill="#5d5d5d"/>
<rect x="251.07" y="114.20" width="7.06" height="6.50" fill="#5b5b5b"/>
<rect x="257.83" y="114.20" width="7.06" height="6.50" fill="#5a5a5a"/>
<rect x="264.59" y="114.20" width="7.06" height="6.50" fill="#595959"/>
<rect x="183.47" y="120.40" width="7.06" height="6.50" fill="#8a8a8a"/>
<rect x="190.23" y="120.40" width="7.06" height="6.50" fill="#858585"/>
<rect x="196.99" y="120.40" width="7.06" height="6.50" fill="#7f7f7f"/>
<rect x="203.75" y="120.40" width="7.06" height="6.50" fill="#7a7a7a"/>
<rect x="210.51" y="120.40" width="7.06" height="6.50" fill="#747474"/>
<rect x="217.27" y="120.40" width="7.06" height="6.50" fill="#6e6e6e"/>
<rect x="224.03" y="120.40" width="7.06" height="6.50" fill="#676767"/>
<rect x="230.79" y="120.40" width="7.06" height="6.50" fill="#616161"/>
<rect x="237.55" y="120.40" width="7.06" height="6.50" fill="#5c5c5c"/>
<rect x="244.31" y="120.40" width="7.06" height="6.50" fill="#5a5a5a"/>
<rect x="251.07" y="120.40" width="7.06" height="6.50" fill="#595959"/>
<rect x="257.83" y="120.40" width="7.06" height="6.50" fill="#575757"/>
<rect x="264.59" y="120.40" width="7.06" height="6.50" fill="#565656"/>
<rect x="183.47" y="126.60" width="7.06" height="6.50" fill="#898989"/>
<rect x="190.23" y="126.60" width="7.06" height="6.50" fill="#838383"/>
<rect x="196.99" y="126.60" width="7.06" height="6.50" fill="#7d7d7d"/>
<rect x="203.75" y="126.60" width="7.06" height="6.50" fill="#777777"/>
<rect x="210.51" y="126.60" width="7.06" height="6.50" fill="#717171"/>
<rect x="217.27" y="126.60" width="7.06" height="6.50" fill="#6a6a6a"/>
<rect x="224.03" y="126.60" width="7.06" height="6.50" fill="#646464"/>
<rect x="230.79" y="126.60" width="7.06" height="6.50" fill="#5e5e5e"/>
<rect x="237.55" y="126.60" width="7.06" height="6.50" fill="#5a5a5a"/>
<rect x="244.31" y="126.60" width="7.06" height="6.50" fill="#585858"/>
<rect x="251.07" y="126.60" width="7.06" height="6.50" fill="#575757"/>
<rect x="257.83" y="126.60" width="7.06" height="6.50" fill="#555555"/>
<rect x="264.59" y="126.60" width="7.06" height="6.50" fill="#545454"/>
<rect x="183.47" y="132.80" width="7.06" height="6.50" fill="#878787"/>
<rect x="190.23" y="132.80" width="7.06" height="6.50" fill="#818181"/>
<rect x="196.99" y="132.80" width="7.06" height="6.50" fill="#7a7a7a"/>
<rect x="203.75" y="132.80" width="7.06" height="6.50" fill="#747474"/>
<rect x="210.51" y="132.80" width="7.06" height="6.50" fill="#6d6d6d"/>
<rect x="217.27" y="132.80" width="7.06" height="6.50" fill="#676767"/>
<rect x="224.03" y="132.80" width="7.06" height="6.50" fill="#626262"/>
<rect x="230.79" y="132.80" width="7.06" height="6.50" fill="#5c5c5c"/>
<rect x="237.55" y="132.80" width="7.06" height="6.50" fill="#585858"/>
<rect x="244.31" y="132.80" width="7.06" height="6.50" fill="#565656"/>
<rect x="251.07" y="132.80" width="7.06" height="6.50" fill="#555555"/>
<rect x="257.83" y="132.80" width="7.06" height="6.50" fill="#535353"/>
<rect x="264.59" y="132.80" width="7.06" height="6.50" fill="#525252"/>
<rect x="183.47" y="139.00" width="7.06" height="6.50" fill="#868686"/>
<rect x="190.23" y="139.00" width="7.06" height="6.50" fill="#7f7f7f"/>
<rect x="196.99" y="139.00" width="7.06" height="6.50" fill="#787878"/>
<rect x="203.75" y="139.00" width="7.06" height="6.50" fill="#717171"/>
<rect x="210.51" y="139.00" width="7.06" height="6.50" fill="#6a6a6a"/>
<rect x="217.27" y="139.00" width="7.06" height="6.50" fill="#646464"/>
<rect x="224.03" y="139.00" width="7.06" height="6.50" fill="#5f5f5f"/>
<rect x="230.79" y="139.00" width="7.06" height="6.50" fill="#5a5a5a"/>
<rect x="237.55" y="139.00" width="7.06" height="6.50" fill="#565656"/>
<rect x="244.31" y="139.00" width="7.06" height="6.50" fill="#545454"/>
<rect x="251.07" y="139.00" width="7.06" height="6.50" fill="#535353"/>
<rect x="257.83" y="139.00" width="7.06" height="6.50" fill="#515151"/>
<rect x="264.59" y="139.00" width="7.06" height="6.50" fill="#505050"/>
<rect x="271.35" y="21.20" width="7.06" height="6.50" fill="#848484"/>
<rect x="278.11" y="21.20" width="7.06" height="6.50" fill="#838383"/>
<rect x="284.87" y="21.20" width="7.06" height="6.50" fill="#818181"/>
<rect x="291.63" y="21.20" width="7.06" height="6.50" fill="#7f7f7f"/>
<rect x="298.39" y="21.20" width="7.06" height="6.50" fill="#7d7d7d"/>
<rect x="305.15" y="21.20" width="7.06" height="6.50" fill="#808080"/>
<rect x="311.91" y="21.20" width="7.06" height="6.50" fill="#848484"/>
<rect x="318.67" y="21.20" width="7.06" height="6.50" fill="#888888"/>
<rect x="325.43" y="21.20" width="7.06" height="6.50" fill="#8d8d8d"/>
<rect x="332.19" y="21.20" width="7.06" height="6.50" fill="#929292"/>
<rect x="338.95" y="21.20" width="7.06" height="6.50" fill="#989898"/>
<rect x="345.71" y="21.20" width="7.06" height="6.50" fill="#9d9d9d"/>
<rect x="352.47" y="21.20" width="7.06" height="6.50" fill="#a3a3a3"/>
<rect x="271.35" y="27.40" width="7.06" height="6.50" fill="#828282"/>
<rect x="278.11" y="27.40" width="7.06" height="6.50" fill="#808080"/>
<rect x="284.87" y="27.40" width="7.06" height="6.50" fill="#7f7f7f"/>
<rect x="291.63" y="27.40" width="7.06" height="6.50" fill="#7d7d7d"/>
<rect x="298.39" y="27.40" width="7.06" height="6.50" fill="#7c7c7c"/>
<rect x="305.15" y="27.40" width="7.06" height="6.50" fill="#7e7e7e"/>
<rect x="311.91" y="27.40" width="7.06" height="6.50" fill="#828282"/>
<rect x="318.67" y="27.40" width="7.06" height="6.50" fill="#878787"/>
<rect x="325.43" y="27.40" width="7.06" height="6.50" fill="#8c8c8c"/>
<rect x="332.19" y="27.40" width="7.06" height="6.50" fill="#929292"/>
<rect x="338.95" y="27.40" width="7.06" height="6.50" fill="#989898"/>
<rect x="345.71" y="27.40" width="7.06" height="6.50" fill="#9e9e9e"/>
<rect x="352.47" y="27.40" width="7.06" height="6.50" fill="#a4a4a4"/>
<rect x="271.35" y="33.60" width="7.06" height="6.50" fill="#808080"/>
<rect x="278.11" y="33.60" width="7.06" height="6.50" fill="#7e7e7e"/>
<rect x="284.87" y="33.60" width="7.06" height="6.50" fill="#7d7d7d"/>
<rect x="291.63" y="33.60" width="7.06" height="6.50" fill="#7c7c7c"/>
<rect x="298.39" y="33.60" width="7.06" height="6.50" fill="#7a7a7a"/>
<rect x="305.15" y="33.60" width="7.06" height="6.50" fill="#7c7c7c"/>
<rect x="311.91" y="33.60" width="7.06" height="6.50" fill="#818181"/>
<rect x="318.67" y="33.60" width="7.06" height="6.50" fill="#858585"/>
<rect x="325.43" y="33.60" width="7.06" height="6.50" fill="#8a8a8a"/>
<rect x="332.19" y="33.60" width="7.06" height="6.50" fill="#919191"/>
<rect x="338.95" y="33.60" width="7.06" height="6.50" fill="#989898"/>
<rect x="345.71" y="33.60" width="7.06" height="6.50" fill="#9e9e9e"/>
<rect x="352.47" y="33.60" width="7.06" height="6.50" fill="#a5a5a5"/>
<rect x="271.35" y="39.80" width="7.06" height="6.50" fill="#7e7e7e"/>
<rect x="278.11" y="39.80" width="7.06" height="6.50" fill="#7c7c7c"/>
<rect x="284.87" y="39.80" width="7.06" height="6.50" fill="#7b7b7b"/>
<rect x="291.63" y="39.80" width="7.06" height="6.50" fill="#7a7a7a"/>
<rect x="298.39" y="39.80" width="7.06" height="6.50" fill="#797979"/>
<rect x="305.15" y="39.80" width="7.06" height="6.50" fill="#7b7b7b"/>
<rect x="311.91" y="39.80" width="7.06" height="6.50" fill="#7f7f7f"/>
<rect x="318.67" y="39.80" width="7.06" height="6.50" fill="#848484"/>
<rect x="325.43" y="39.80" width="7.06" height="6.50" fill="#898989"/>
<rect x="332.19" y="39.80" width="7.06" height="6.50" fill="#909090"/>
<rect x="338.95" y="39.80" width="7.06" height="6.50" fill="#989898"/>
<rect x="345.71" y="39.80" width="7.06" height="6.50" fill="#9f9f9f"/>
<rect x="352.47" y="39.80" width="7.06" height="6.50" fill="#a6a6a6"/>
<rect x="271.35" y="46.00" width="7.06" height="6.50" fill="#7d7d7d"/>
<rect x="278.11" y="46.00" width="7.06" height="6.50" fill="#7c7c7c"/>
<rect x="284.87" y="46.00" width="7.06" height="6.50" fill="#7b7b7b"/>
<rect x="291.63" y="46.00" width="7.06" height="6.50" fill="#7a7a7a"/>
<rect x="298.39" y="46.00" width="7.06" height="6.50" fill="#797979"/>
<rect x="305.15" y="46.00" width="7.06" height="6.50" fill="#7c7c7c"/>
<rect x="311.91" y="46.00" width="7.06" height="6.50" fill="#808080"/>
<rect x="318.67" y="46.00" width="7.06" height="6.50" fill="#858585"/>
<rect x="325.43" y="46.00" width="7.06" height="6.50" fill="#8a8a8a"/>
<rect x="332.19" y="46.00" width="7.06" height="6.50" fill="#919191"/>
<rect x="338.95" y="46.00" width="7.06" height="6.50" fill="#989898"/>
<rect x="345.71" y="46.00" width="7.06" height="6.50" fill="#9f9f9f"/>
<rect x="352.47" y="46.00" width="7.06" height="6.50" fill="#a6a6a6"/>
<rect x="271.35" y="52.20" width="7.06" height="6.50" fill="#7e7e7e"/>
<rect x="278.11" y="52.20" width="7.06" height="6.50" fill="#7d7d7d"/>
<rect x="284.87" y="52.20" width="7.06" height="6.50" fill="#7c7c7c"/>
<rect x="291.63" y="52.20" width="7.06" height="6.50" fill="#7b7b7b"/>
<rect x="298.39" y="52.20" width="7.06" height="6.50" fill="#7a7a7a"/>
<rect x="305.15" y="52.20" width="7.06" height="6.50" fill="#7d7d7d"/>
<rect x="311.91" y="52.20" width="7.06" height="6.50" fill="#828282"/>
<rect x="318.67" y="52.20" width="7.06" height="6.50" fill="#878787"/>
<rect x="325.43" y="52.20" width="7.06" height="6.50" fill="#8d8d8d"/>
<rect x="332.19" y="52.20" width="7.06" height="6.50" fill="#939393"/>
<rect x="338.95" y="52.20" width="7.06" height="6.50" fill="#999999"/>
<rect x="345.71" y="52.20" width="7.06" height="6.50" fill="#a0a0a0"/>
<rect x="352.47" y="52.20" width="7.06" height="6.50" fill="#a6a6a6"/>
<rect x="271.35" y="58.40" width="7.06" height="6.50" fill="#808080"/>
<rect x="278.11" y="58.40" width="7.06" height="6.50" fill="#7f7f7f"/>
<rect x="284.87" y="58.40" width="7.06" height="6.50" fill="#7f7f7f"/>
<rect x="291.63" y="58.40" width="7.06" height="6.50" fill="#7e7e7e"/>
<rect x="298.39" y="58.40" width="7.06" height="6.50" fill="#7d7d7d"/>
<rect x="305.15" y="58.40" width="7.06" height="6.50" fill="#808080"/>
<rect x="311.91" y="58.40" width="7.06" height="6.50" fill="#868686"/>
<rect x="318.67" y="58.40" width="7.06" height="6.50" fill="#8b8b8b"/>
<rect x="325.43" y="58.40" width="7.06" height="6.50" fill="#909090"/>
<rect x="332.19" y="58.40" width="7.06" height="6.50" fill="#969696"/>
<rect x="338.95" y="58.40" width="7.06" height="6.50" fill="#9b9b9b"/>
<rect x="345.71" y="58.40" width="7.06" height="6.50" fill="#a1a1a1"/>
<rect x="352.47" y="58.40" width="7.06" height="6.50" fill="#a7a7a7"/>
<rect x="271.35" y="64.60" width="7.06" height="6.50" fill="#898989"/>
<rect x="278.11" y="64.60" width="7.06" height="6.50" fill="#898989"/>
<rect x="284.87" y="64.60" width="7.06" height="6.50" fill="#898989"/>
<rect x="291.63" y="64.60" width="7.06" height="6.50" fill="#898989"/>
<rect x="298.39" y="64.60" width="7.06" height="6.50" fill="#888888"/>
<rect x="305.15" y="64.60" width="7.06" height="6.50" fill="#8b8b8b"/>
<rect x="311.91" y="64.60" width="7.06" height="6.50" fill="#8f8f8f"/>
<rect x="318.67" y="64.60" width="7.06" height="6.50" fill="#939393"/>
<rect x="325.43" y="64.60" width="7.06" height="6.50" fill="#989898"/>
<rect x="332.19" y="64.60" width="7.06" height="6.50" fill="#9c9c9c"/>
<rect x="338.95" y="64.60" width="7.06" height="6.50" fill="#a1a1a1"/>
<rect x="345.71" y="64.60" width="7.06" height="6.50" fill="#a5a5a5"/>
<rect x="352.47" y="64.60" width="7.06" height="6.50" fill="#aaaaaa"/>
<rect x="271.35" y="70.80" width="7.06" height="6.50" fill="#929292"/>
<rect x="278.11" y="70.80" width="7.06" height="6.50" fill="#939393"/>
<rect x="284.87" y="70.80" width="7.06" height="6.50" fill="#939393"/>
<rect x="291.63" y="70.80" width="7.06" height="6.50" fill="#939393"/>
<rect x="298.39" y="70.80" width="7.06" height="6.50" fill="#949494"/>
<rect x="305.15" y="70.80" width="7.06" height="6.50" fill="#969696"/>
<rect x="311.91" y="70.80" width="7.06" height="6.50" fill="#999999"/>
<rect x="318.67" y="70.80" width="7.06" height="6.50" fill="#9c9c9c"/>
<rect x="325.43" y="70.80" width="7.06" height="6.50" fill="#9f9f9f"/>
<rect x="332.19" y="70.80" width="7.06" height="6.50" fill="#a2a2a2"/>
<rect x="338.95" y="70.80" width="7.06" height="6.50" fill="#a6a6a6"/>
<rect x="345.71" y="70.80" width="7.06" height="6.50" fill="#a9a9a9"/>
<rect x="352.47" y="70.80" width="7.06" height="6.50" fill="#acacac"/>
<rect x="271.35" y="77.00" width="7.06" height="6.50" fill="#9c9c9c"/>
<rect x="278.11" y="77.00" width="7.06" height="6.50" fill="#9c9c9c"/>
<rect x="284.87" y="77.00" width="7.06" height="6.50" fill="#9d9d9d"/>
<rect x="291.63" y="77.00" width="7.06" height="6.50" fill="#9e9e9e"/>
<rect x="298.39" y="77.00" width="7.06" height="6.50" fill="#9f9f9f"/>
<rect x="305.15" y="77.00" width="7.06" height="6.50" fill="#a0a0a0"/>
<rect x="311.91" y="77.00" width="7.06" height="6.50" fill="#a2a2a2"/>
<rect x="318.67" y="77.00" width="7.06" height="6.50" fill="#a4a4a4"/>
<rect x="325.43" y="77.00" width="7.06" height="6.50" fill="#a6a6a6"/>
<rect x="332.19" y="77.00" width="7.06" height="6.50" fill="#a8a8a8"/>
<rect x="338.95" y="77.00" width="7.06" height="6.50" fill="#ababab"/>
<rect x="345.71" y="77.00" width="7.06" height="6.50" fill="#adadad"/>
<rect x="352.47" y="77.00" width="7.06" height="6.50" fill="#afafaf"/>
<rect x="271.35" y="83.20" width="7.06" height="6.50" fill="#aeaeae"/>
<rect x="278.11" y="83.20" width="7.06" height="6.50" fill="#acacac"/>
<rect x="284.87" y="83.20" width="7.06" height="6.50" fill="#ababab"/>
<rect x="291.63" y="83.20" width="7.06" height="6.50" fill="#a9a9a9"/>
<rect x="298.39" y="83.20" width="7.06" height="6.50" fill="#a7a7a7"/>
<rect x="305.15" y="83.20" width="7.06" height="6.50" fill="#a6a6a6"/>
<rect x="311.91" y="83.20" width="7.06" height="6.50" fill="#a4a4a4"/>
<rect x="318.67" y="83.20" width="7.06" height="6.50" fill="#a2a2a2"/>
<rect x="325.43" y="83.20" width="7.06" height="6.50" fill="#a1a1a1"/>
<rect x="332.19" y="83.20" width="7.06" height="6.50" fill="#a0a0a0"/>
<rect x="338.95" y="83.20" width="7.06" height="6.50" fill="#9e9e9e"/>
<rect x="345.71" y="83.20" width="7.06" height="6.50" fill="#9d9d9d"/>
<rect x="352.47" y="83.20" width="7.06" height="6.50" fill="#9c9c9c"/>
<rect x="271.35" y="89.40" width="7.06" height="6.50" fill="#adadad"/>
<rect x="278.11" y="89.40" width="7.06" height="6.50" fill="#ababab"/>
<rect x="284.87" y="89.40" width="7.06" height="6.50" fill="#a9a9a9"/>
<rect x="291.63" y="89.40" width="7.06" height="6.50" fill="#a7a7a7"/>
<rect x="298.39" y="89.40" width="7.06" height="6.50" fill="#a4a4a4"/>
<rect x="305.15" y="89.40" width="7.06" height="6.50" fill="#a2a2a2"/>
<rect x="311.91" y="89.40" width="7.06" height="6.50" fill="#a0a0a0"/>
<rect x="318.67" y="89.40" width="7.06" height="6.50" fill="#9e9e9e"/>
<rect x="325.43" y="89.40" width="7.06" height="6.50" fill="#9d9d9d"/>
<rect x="332.19" y="89.40" width="7.06" height="6.50" fill="#9c9c9c"/>
<rect x="338.95" y="89.40" width="7.06" height="6.50" fill="#9b9b9b"/>
<rect x="345.71" y="89.40" width="7.06" height="6.50" fill="#9b9b9b"/>
<rect x="352.47" y="89.40" width="7.06" height="6.50" fill="#9a9a9a"/>
<rect x="271.35" y="95.60" width="7.06" height="6.50" fill="#acacac"/>
<rect x="278.11" y="95.60" width="7.06" height="6.50" fill="#a9a9a9"/>
<rect x="284.87" y="95.60" width="7.06" height="6.50" fill="#a7a7a7"/>
<rect x="291.63" y="95.60" width="7.06" height="6.50" fill="#a4a4a4"/>
<rect x="298.39" y="95.60" width="7.06" height="6.50" fill="#a2a2a2"/>
<rect x="305.15" y="95.60" width="7.06" height="6.50" fill="#9f9f9f"/>
<rect x="311.91" y="95.60" width="7.06" height="6.50" fill="#9d9d9d"/>
<rect x="318.67" y="95.60" width="7.06" height="6.50" fill="#9a9a9a"/>
<rect x="325.43" y="95.60" width="7.06" height="6.50" fill="#999999"/>
<rect x="332.19" y="95.60" width="7.06" height="6.50" fill="#999999"/>
<rect x="338.95" y="95.60" width="7.06" height="6.50" fill="#999999"/>
<rect x="345.71" y="95.60" width="7.06" height="6.50" fill="#989898"/>
<rect x="352.47" y="95.60" width="7.06" height="6.50" fill="#989898"/>
<rect x="271.35" y="101.80" width="7.06" height="6.50" fill="#ababab"/>
<rect x="278.11" y="101.80" width="7.06" height="6.50" fill="#a8a8a8"/>
<rect x="284.87" y="101.80" width="7.06" height="6.50" fill="#a5a5a5"/>
<rect x="291.63" y="101.80" width="7.06" height="6.50" fill="#a2a2a2"/>
<rect x="298.39" y="101.80" width="7.06" height="6.50" fill="#9f9f9f"/>
<rect x="305.15" y="101.80" width="7.06" height="6.50" fill="#9c9c9c"/>
<rect x="311.91" y="101.80" width="7.06" height="6.50" fill="#999999"/>
<rect x="318.67" y="101.80" width="7.06" height="6.50" fill="#979797"/>
<rect x="325.43" y="101.80" width="7.06" height="6.50" fill="#959595"/>
<rect x="332.19" y="101.80" width="7.06" height="6.50" fill="#959595"/>
<rect x="338.95" y="101.80" width="7.06" height="6.50" fill="#969696"/>
<rect x="345.71" y="101.80" width="7.06" height="6.50" fill="#969696"/>
<rect x="352.47" y="101.80" width="7.06" height="6.50" fill="#969696"/>
<rect x="271.35" y="108.00" width="7.06" height="6.50" fill="#a9a9a9"/>
<rect x="278.11" y="108.00" width="7.06" height="6.50" fill="#a6a6a6"/>
<rect x="284.87" y="108.00" width="7.06" height="6.50" fill="#a3a3a3"/>
<rect x="291.63" y="108.00" width="7.06" height="6.50" fill="#9f9f9f"/>
<rect x="298.39" y="108.00" width="7.06" height="6.50" fill="#9c9c9c"/>
<rect x="305.15" y="108.00" width="7.06" height="6.50" fill="#999999"/>
<rect x="311.91" y="108.00" width="7.06" height="6.50" fill="#969696"/>
<rect x="318.67" y="108.00" width="7.06" height="6.50" fill="#939393"/>
<rect x="325.43" y="108.00" width="7.06" height="6.50" fill="#929292"/>
<rect x="332.19" y="108.00" width="7.06" height="6.50" fill="#929292"/>
<rect x="338.95" y="108.00" width="7.06" height="6.50" fill="#939393"/>
<rect x="345.71" y="108.00" width="7.06" height="6.50" fill="#949494"/>
<rect x="352.47" y="108.00" width="7.06" height="6.50" fill="#949494"/>
<rect x="271.35" y="114.20" width="7.06" height="6.50" fill="#a7a7a7"/>
<rect x="278.11" y="114.20" width="7.06" height="6.50" fill="#a4a4a4"/>
<rect x="284.87" y="114.20" width="7.06" height="6.50" fill="#a0a0a0"/>
<rect x="291.63" y="114.20" width="7.06" height="6.50" fill="#9d9d9d"/>
<rect x="298.39" y="114.20" width="7.06" height="6.50" fill="#9a9a9a"/>
<rect x="305.15" y="114.20" width="7.06" height="6.50" fill="#969696"/>
<rect x="311.91" y="114.20" width="7.06" height="6.50" fill="#939393"/>
<rect x="318.67" y="114.20" width="7.06" height="6.50" fill="#909090"/>
<rect x="325.43" y="114.20" width="7.06" height="6.50" fill="#8f8f8f"/>
<rect x="332.19" y="114.20" width="7.06" height="6.50" fill="#909090"/>
<rect x="338.95" y="114.20" width="7.06" height="6.50" fill="#919191"/>
<rect x="345.71" y="114.20" width="7.06" height="6.50" fill="#929292"/>
<rect x="352.47" y="114.20" width="7.06" height="6.50" fill="#939393"/>
<rect x="271.35" y="120.40" width="7.06" height="6.50" fill="#a6a6a6"/>
<rect x="278.11" y="120.40" width="7.06" height="6.50" fill="#a2a2a2"/>
<rect x="284.87" y="120.40" width="7.06" height="6.50" fill="#9f9f9f"/>
<rect x="291.63" y="120.40" width="7.06" height="6.50" fill="#9b9b9b"/>
<rect x="298.39" y="120.40" width="7.06" height="6.50" fill="#989898"/>
<rect x="305.15" y="120.40" width="7.06" height="6.50" fill="#949494"/>
<rect x="311.91" y="120.40" width="7.06" height="6.50" fill="#919191"/>
<rect x="318.67" y="120.40" width="7.06" height="6.50" fill="#8e8e8e"/>
<rect x="325.43" y="120.40" width="7.06" height="6.50" fill="#8c8c8c"/>
<rect x="332.19" y="120.40" width="7.06" height="6.50" fill="#8d8d8d"/>
<rect x="338.95" y="120.40" width="7.06" height="6.50" fill="#8f8f8f"/>
<rect x="345.71" y="120.40" width="7.06" height="6.50" fill="#909090"/>
<rect x="352.47" y="120.40" width="7.06" height="6.50" fill="#919191"/>
<rect x="271.35" y="126.60" width="7.06" height="6.50" fill="#a5a5a5"/>
<rect x="278.11" y="126.60" width="7.06" height="6.50" fill="#a1a1a1"/>
<rect x="284.87" y="126.60" width="7.06" height="6.50" fill="#9e9e9e"/>
<rect x="291.63" y="126.60" width="7.06" height="6.50" fill="#9a9a9a"/>
<rect x="298.39" y="126.60" width="7.06" height="6.50" fill="#969696"/>
<rect x="305.15" y="126.60" width="7.06" height="6.50" fill="#939393"/>
<rect x="311.91" y="126.60" width="7.06" height="6.50" fill="#8f8f8f"/>
<rect x="318.67" y="126.60" width="7.06" height="6.50" fill="#8c8c8c"/>
<rect x="325.43" y="126.60" width="7.06" height="6.50" fill="#8a8a8a"/>
<rect x="332.19" y="126.60" width="7.06" height="6.50" fill="#8c8c8c"/>
<rect x="338.95" y="126.60" width="7.06" height="6.50" fill="#8d8d8d"/>
<rect x="345.71" y="126.60" width="7.06" height="6.50" fill="#8f8f8f"/>
<rect x="352.47" y="126.60" width="7.06" height="6.50" fill="#919191"/>
<rect x="271.35" y="132.80" width="7.06" height="6.50" fill="#a4a4a4"/>
<rect x="278.11" y="132.80" width="7.06" height="6.50" fill="#a0a0a0"/>
<rect x="284.87" y="132.80" width="7.06" height="6.50" fill="#9d9d9d"/>
<rect x="291.63" y="132.80" width="7.06" height="6.50" fill="#999999"/>
<rect x="298.39" y="132.80" width="7.06" height="6.50" fill="#959595"/>
<rect x="305.15" y="132.80" width="7.06" height="6.50" fill="#929292"/>
<rect x="311.91" y="132.80" width="7.06" height="6.50" fill="#8e8e8e"/>
<rect x="318.67" y="132.80" width="7.06" height="6.50" fill="#8a8a8a"/>
<rect x="325.43" y="132.80" width="7.06" height="6.50" fill="#888888"/>
<rect x="332.19" y="132.80" width="7.06" height="6.50" fill="#8a8a8a"/>
<rect x="338.95" y="132.80" width="7.06" height="6.50" fill="#8c8c8c"/>
<rect x="345.71" y="132.80" width="7.06" height="6.50" fill="#8e8e8e"/>
<rect x="352.47" y="132.80" width="7.06" height="6.50" fill="#909090"/>
<rect x="271.35" y="139.00" width="7.06" height="6.50" fill="#a3a3a3"/>
<rect x="278.11" y="139.00" width="7.06" height="6.50" fill="#9f9f9f"/>
<rect x="284.87" y="139.00" width="7.06" height="6.50" fill="#9c9c9c"/>
<rect x="291.63" y="139.00" width="7.06" height="6.50" fill="#989898"/>
<rect x="298.39" y="139.00" width="7.06" height="6.50" fill="#949494"/>
<rect x="305.15" y="139.00" width="7.06" height="6.50" fill="#919191"/>
<rect x="311.91" y="139.00" width="7.06" height="6.50" fill="#8c8c8c"/>
<rect x="318.67" y="139.00" width="7.06" height="6.50" fill="#888888"/>
<rect x="325.43" y="139.00" width="7.06" height="6.50" fill="#868686"/>
<rect x="332.19" y="139.00" width="7.06" height="6.50" fill="#898989"/>
<rect x="338.95" y="139.00" width="7.06" height="6.50" fill="#8b8b8b"/>
<rect x="345.71" y="139.00" width="7.06" height="6.50" fill="#8d8d8d"/>
<rect x="352.47" y="139.00" width="7.06" height="6.50" fill="#8f8f8f"/>
<rect x="359.23" y="21.20" width="7.06" height="6.50" fill="#737373"/>
<rect x="365.98" y="21.20" width="7.06" height="6.50" fill="#717171"/>
<rect x="372.74" y="21.20" width="7.06" height="6.50" fill="#6e6e6e"/>
<rect x="379.50" y="21.20" width="7.06" height="6.50" fill="#6b6b6b"/>
<rect x="386.26" y="21.20" width="7.06" height="6.50" fill="#686868"/>
<rect x="393.02" y="21.20" width="7.06" height="6.50" fill="#686868"/>
<rect x="399.78" y="21.20" width="7.06" height="6.50" fill="#6a6a6a"/>
<rect x="406.54" y="21.20" width="7.06" height="6.50" fill="#6c6c6c"/>
<rect x="413.30" y="21.20" width="7.06" height="6.50" fill="#707070"/>
<rect x="420.06" y="21.20" width="7.06" height="6.50" fill="#767676"/>
<rect x="426.82" y="21.20" width="7.06" height="6.50" fill="#7c7c7c"/>
<rect x="433.58" y="21.20" width="7.06" height="6.50" fill="#828282"/>
<rect x="440.34" y="21.20" width="7.06" height="6.50" fill="#888888"/>
<rect x="359.23" y="27.40" width="7.06" height="6.50" fill="#737373"/>
<rect x="365.98" y="27.40" width="7.06" height="6.50" fill="#717171"/>
<rect x="372.74" y="27.40" width="7.06" height="6.50" fill="#6e6e6e"/>
<rect x="379.50" y="27.40" width="7.06" height="6.50" fill="#6b6b6b"/>
<rect x="386.26" y="27.40" width="7.06" height="6.50" fill="#686868"/>
<rect x="393.02" y="27.40" width="7.06" height="6.50" fill="#696969"/>
<rect x="399.78" y="27.40" width="7.06" height="6.50" fill="#6b6b6b"/>
<rect x="406.54" y="27.40" width="7.06" height="6.50" fill="#6e6e6e"/>
<rect x="413.30" y="27.40" width="7.06" height="6.50" fill="#727272"/>
<rect x="420.06" y="27.40" width="7.06" height="6.50" fill="#787878"/>
<rect x="426.82" y="27.40" width="7.06" height="6.50" fill="#7f7f7f"/>
<rect x="433.58" y="27.40" width="7.06" height="6.50" fill="#858585"/>
<rect x="440.34" y="27.40" width="7.06" height="6.50" fill="#8b8b8b"/>
<rect x="359.23" y="33.60" width="7.06" height="6.50" fill="#737373"/>
<rect x="365.98" y="33.60" width="7.06" height="6.50" fill="#717171"/>
<rect x="372.74" y="33.60" width="7.06" height="6.50" fill="#6e6e6e"/>
<rect x="379.50" y="33.60" width="7.06" height="6.50" fill="#6b6b6b"/>
<rect x="386.26" y="33.60" width="7.06" height="6.50" fill="#686868"/>
<rect x="393.02" y="33.60" width="7.06" height="6.50" fill="#696969"/>
<rect x="399.78" y="33.60" width="7.06" height="6.50" fill="#6c6c6c"/>
<rect x="406.54" y="33.60" width="7.06" height="6.50" fill="#707070"/>
<rect x="413.30" y="33.60" width="7.06" height="6.50" fill="#747474"/>
<rect x="420.06" y="33.60" width="7.06" height="6.50" fill="#7b7b7b"/>
<rect x="426.82" y="33.60" width="7.06" height="6.50" fill="#818181"/>
<rect x="433.58" y="33.60" width="7.06" height="6.50" fill="#888888"/>
<rect x="440.34" y="33.60" width="7.06" height="6.50" fill="#8f8f8f"/>
<rect x="359.23" y="39.80" width="7.06" height="6.50" fill="#737373"/>
<rect x="365.98" y="39.80" width="7.06" height="6.50" fill="#717171"/>
<rect x="372.74" y="39.80" width="7.06" height="6.50" fill="#6e6e6e"/>
<rect x="379.50" y="39.80" width="7.06" height="6.50" fill="#6b6b6b"/>
<rect x="386.26" y="39.80" width="7.06" height="6.50" fill="#686868"/>
<rect x="393.02" y="39.80" width="7.06" height="6.50" fill="#6a6a6a"/>
<rect x="399.78" y="39.80" width="7.06" height="6.50" fill="#6d6d6d"/>
<rect x="406.54" y="39.80" width="7.06" height="6.50" fill="#717171"/>
<rect x="413.30" y="39.80" width="7.06" height="6.50" fill="#767676"/>
<rect x="420.06" y="39.80" width="7.06" height="6.50" fill="#7d7d7d"/>
<rect x="426.82" y="39.80" width="7.06" height="6.50" fill="#848484"/>
<rect x="433.58" y="39.80" width="7.06" height="6.50" fill="#8b8b8b"/>
<rect x="440.34" y="39.80" width="7.06" height="6.50" fill="#929292"/>
<rect x="359.23" y="46.00" width="7.06" height="6.50" fill="#757575"/>
<rect x="365.98" y="46.00" width="7.06" height="6.50" fill="#727272"/>
<rect x="372.74" y="46.00" width="7.06" height="6.50" fill="#707070"/>
<rect x="379.50" y="46.00" width="7.06" height="6.50" fill="#6e6e6e"/>
<rect x="386.26" y="46.00" width="7.06" height="6.50" fill="#6b6b6b"/>
<rect x="393.02" y="46.00" width="7.06" height="6.50" fill="#6d6d6d"/>
<rect x="399.78" y="46.00" width="7.06" height="6.50" fill="#717171"/>
<rect x="406.54" y="46.00" width="7.06" height="6.50" fill="#757575"/>
<rect x="413.30" y="46.00" width="7.06" height="6.50" fill="#7a7a7a"/>
<rect x="420.06" y="46.00" width="7.06" height="6.50" fill="#818181"/>
<rect x="426.82" y="46.00" width="7.06" height="6.50" fill="#878787"/>
<rect x="433.58" y="46.00" width="7.06" height="6.50" fill="#8e8e8e"/>
<rect x="440.34" y="46.00" width="7.06" height="6.50" fill="#959595"/>
<rect x="359.23" y="52.20" width="7.06" height="6.50" fill="#777777"/>
<rect x="365.98" y="52.20" width="7.06" height="6.50" fill="#757575"/>
<rect x="372.74" y="52.20" width="7.06" height="6.50" fill="#737373"/>
<rect x="379.50" y="52.20" width="7.06" height="6.50" fill="#717171"/>
<rect x="386.26" y="52.20" width="7.06" height="6.50" fill="#6f6f6f"/>
<rect x="393.02" y="52.20" width="7.06" height="6.50" fill="#717171"/>
<rect x="399.78" y="52.20" width="7.06" height="6.50" fill="#757575"/>
<rect x="406.54" y="52.20" width="7.06" height="6.50" fill="#797979"/>
<rect x="413.30" y="52.20" width="7.06" height="6.50" fill="#7e7e7e"/>
<rect x="420.06" y="52.20" width="7.06" height="6.50" fill="#858585"/>
<rect x="426.82" y="52.20" width="7.06" height="6.50" fill="#8b8b8b"/>
<rect x="433.58" y="52.20" width="7.06" height="6.50" fill="#919191"/>
<rect x="440.34" y="52.20" width="7.06" height="6.50" fill="#979797"/>
<rect x="359.23" y="58.40" width="7.06" height="6.50" fill="#7a7a7a"/>
<rect x="365.98" y="58.40" width="7.06" height="6.50" fill="#787878"/>
<rect x="372.74" y="58.40" width="7.06" height="6.50" fill="#777777"/>
<rect x="379.50" y="58.40" width="7.06" height="6.50" fill="#757575"/>
<rect x="386.26" y="58.40" width="7.06" height="6.50" fill="#747474"/>
<rect x="393.02" y="58.40" width="7.06" height="6.50" fill="#767676"/>
<rect x="399.78" y="58.40" width="7.06" height="6.50" fill="#7a7a7a"/>
<rect x="406.54" y="58.40" width="7.06" height="6.50" fill="#7e7e7e"/>
<rect x="413.30" y="58.40" width="7.06" height="6.50" fill="#838383"/>
<rect x="420.06" y="58.40" width="7.06" height="6.50" fill="#898989"/>
<rect x="426.82" y="58.40" width="7.06" height="6.50" fill="#8f8f8f"/>
<rect x="433.58" y="58.40" width="7.06" height="6.50" fill="#949494"/>
<rect x="440.34" y="58.40" width="7.06" height="6.50" fill="#9a9a9a"/>
<rect x="359.23" y="64.60" width="7.06" height="6.50" fill="#808080"/>
<rect x="365.98" y="64.60" width="7.06" height="6.50" fill="#7e7e7e"/>
<rect x="372.74" y="64.60" width="7.06" height="6.50" fill="#7d7d7d"/>
<rect x="379.50" y="64.60" width="7.06" height="6.50" fill="#7c7c7c"/>
<rect x="386.26" y="64.60" width="7.06" height="6.50" fill="#7b7b7b"/>
<rect x="393.02" y="64.60" width="7.06" height="6.50" fill="#7d7d7d"/>
<rect x="399.78" y="64.60" width="7.06" height="6.50" fill="#808080"/>
<rect x="406.54" y="64.60" width="7.06" height="6.50" fill="#848484"/>
<rect x="413.30" y="64.60" width="7.06" height="6.50" fill="#888888"/>
<rect x="420.06" y="64.60" width="7.06" height="6.50" fill="#8e8e8e"/>
<rect x="426.82" y="64.60" width="7.06" height="6.50" fill="#939393"/>
<rect x="433.58" y="64.60" width="7.06" height="6.50" fill="#989898"/>
<rect x="440.34" y="64.60" width="7.06" height="6.50" fill="#9e9e9e"/>
<rect x="359.23" y="70.80" width="7.06" height="6.50" fill="#858585"/>
<rect x="365.98" y="70.80" width="7.06" height="6.50" fill="#848484"/>
<rect x="372.74" y="70.80" width="7.06" height="6.50" fill="#848484"/>
<rect x="379.50" y="70.80" width="7.06" height="6.50" fill="#838383"/>
<rect x="386.26" y="70.80" width="7.06" height="6.50" fill="#828282"/>
<rect x="393.02" y="70.80" width="7.06" height="6.50" fill="#848484"/>
<rect x="399.78" y="70.80" width="7.06" height="6.50" fill="#878787"/>
<rect x="406.54" y="70.80" width="7.06" height="6.50" fill="#8a8a8a"/>
<rect x="413.30" y="70.80" width="7.06" height="6.50" fill="#8e8e8e"/>
<rect x="420.06" y="70.80" width="7.06" height="6.50" fill="#939393"/>
<rect x="426.82" y="70.80" width="7.06" height="6.50" fill="#989898"/>
<rect x="433.58" y="70.80" width="7.06" height="6.50" fill="#9c9c9c"/>
<rect x="440.34" y="70.80" width="7.06" height="6.50" fill="#a1a1a1"/>
<rect x="359.23" y="77.00" width="7.06" height="6.50" fill="#8b8b8b"/>
<rect x="365.98" y="77.00" width="7.06" height="6.50" fill="#8b8b8b"/>
<rect x="372.74" y="77.00" width="7.06" height="6.50" fill="#8a8a8a"/>
<rect x="379.50" y="77.00" width="7.06" height="6.50" fill="#898989"/>
<rect x="386.26" y="77.00" width="7.06" height="6.50" fill="#898989"/>
<rect x="393.02" y="77.00" width="7.06" height="6.50" fill="#8a8a8a"/>
<rect x="399.78" y="77.00" width="7.06" height="6.50" fill="#8d8d8d"/>
<rect x="406.54" y="77.00" width="7.06" height="6.50" fill="#909090"/>
<rect x="413.30" y="77.00" width="7.06" height="6.50" fill="#939393"/>
<rect x="420.06" y="77.00" width="7.06" height="6.50" fill="#989898"/>
<rect x="426.82" y="77.00" width="7.06" height="6.50" fill="#9c9c9c"/>
<rect x="433.58" y="77.00" width="7.06" height="6.50" fill="#a0a0a0"/>
<rect x="440.34" y="77.00" width="7.06" height="6.50" fill="#a5a5a5"/>
<rect x="359.23" y="83.20" width="7.06" height="6.50" fill="#aaaaaa"/>
<rect x="365.98" y="83.20" width="7.06" height="6.50" fill="#a3a3a3"/>
<rect x="372.74" y="83.20" width="7.06" height="6.50" fill="#9d9d9d"/>
<rect x="379.50" y="83.20" width="7.06" height="6.50" fill="#969696"/>
<rect x="386.26" y="83.20" width="7.06" height="6.50" fill="#8f8f8f"/>
<rect x="393.02" y="83.20" width="7.06" height="6.50" fill="#8a8a8a"/>
<rect x="399.78" y="83.20" width="7.06" height="6.50" fill="#868686"/>
<rect x="406.54" y="83.20" width="7.06" height="6.50" fill="#828282"/>
<rect x="413.30" y="83.20" width="7.06" height="6.50" fill="#7f7f7f"/>
<rect x="420.06" y="83.20" width="7.06" height="6.50" fill="#7d7d7d"/>
<rect x="426.82" y="83.20" width="7.06" height="6.50" fill="#7c7c7c"/>
<rect x="433.58" y="83.20" width="7.06" height="6.50" fill="#7a7a7a"/>
<rect x="440.34" y="83.20" width="7.06" height="6.50" fill="#787878"/>
<rect x="359.23" y="89.40" width="7.06" height="6.50" fill="#a7a7a7"/>
<rect x="365.98" y="89.40" width="7.06" height="6.50" fill="#a1a1a1"/>
<rect x="372.74" y="89.40" width="7.06" height="6.50" fill="#9a9a9a"/>
<rect x="379.50" y="89.40" width="7.06" height="6.50" fill="#949494"/>
<rect x="386.26" y="89.40" width="7.06" height="6.50" fill="#8d8d8d"/>
<rect x="393.02" y="89.40" width="7.06" height="6.50" fill="#888888"/>
<rect x="399.78" y="89.40" width="7.06" height="6.50" fill="#838383"/>
<rect x="406.54" y="89.40" width="7.06" height="6.50" fill="#7f7f7f"/>
<rect x="413.30" y="89.40" width="7.06" height="6.50" fill="#7c7c7c"/>
<rect x="420.06" y="89.40" width="7.06" height="6.50" fill="#7a7a7a"/>
<rect x="426.82" y="89.40" width="7.06" height="6.50" fill="#787878"/>
<rect x="433.58" y="89.40" width="7.06" height="6.50" fill="#777777"/>
<rect x="440.34" y="89.40" width="7.06" height="6.50" fill="#757575"/>
<rect x="359.23" y="95.60" width="7.06" height="6.50" fill="#a5a5a5"/>
<rect x="365.98" y="95.60" width="7.06" height="6.50" fill="#9e9e9e"/>
<rect x="372.74" y="95.60" width="7.06" height="6.50" fill="#989898"/>
<rect x="379.50" y="95.60" width="7.06" height="6.50" fill="#919191"/>
<rect x="386.26" y="95.60" width="7.06" height="6.50" fill="#8b8b8b"/>
<rect x="393.02" y="95.60" width="7.06" height="6.50" fill="#858585"/>
<rect x="399.78" y="95.60" width="7.06" height="6.50" fill="#818181"/>
<rect x="406.54" y="95.60" width="7.06" height="6.50" fill="#7c7c7c"/>
<rect x="413.30" y="95.60" width="7.06" height="6.50" fill="#797979"/>
<rect x="420.06" y="95.60" width="7.06" height="6.50" fill="#777777"/>
<rect x="426.82" y="95.60" width="7.06" height="6.50" fill="#757575"/>
<rect x="433.58" y="95.60" width="7.06" height="6.50" fill="#747474"/>
<rect x="440.34" y="95.60" width="7.06" height="6.50" fill="#727272"/>
<rect x="359.23" y="101.80" width="7.06" height="6.50" fill="#a2a2a2"/>
<rect x="365.98" y="101.80" width="7.06" height="6.50" fill="#9c9c9c"/>
<rect x="372.74" y="101.80" width="7.06" height="6.50" fill="#959595"/>
<rect x="379.50" y="101.80" width="7.06" height="6.50" fill="#8f8f8f"/>
<rect x="386.26" y="101.80" width="7.06" height="6.50" fill="#898989"/>
<rect x="393.02" y="101.80" width="7.06" height="6.50" fill="#838383"/>
<rect x="399.78" y="101.80" width="7.06" height="6.50" fill="#7e7e7e"/>
<rect x="406.54" y="101.80" width="7.06" height="6.50" fill="#797979"/>
<rect x="413.30" y="101.80" width="7.06" height="6.50" fill="#757575"/>
<rect x="420.06" y="101.80" width="7.06" height="6.50" fill="#747474"/>
<rect x="426.82" y="101.80" width="7.06" height="6.50" fill="#727272"/>
<rect x="433.58" y="101.80" width="7.06" height="6.50" fill="#717171"/>
<rect x="440.34" y="101.80" width="7.06" height="6.50" fill="#6f6f6f"/>
<rect x="359.23" y="108.00" width="7.06" height="6.50" fill="#a0a0a0"/>
<rect x="365.98" y="108.00" width="7.06" height="6.50" fill="#9a9a9a"/>
<rect x="372.74" y="108.00" width="7.06" height="6.50" fill="#939393"/>
<rect x="379.50" y="108.00" width="7.06" height="6.50" fill="#8d8d8d"/>
<rect x="386.26" y="108.00" width="7.06" height="6.50" fill="#878787"/>
<rect x="393.02" y="108.00" width="7.06" height="6.50" fill="#818181"/>
<rect x="399.78" y="108.00" width="7.06" height="6.50" fill="#7b7b7b"/>
<rect x="406.54" y="108.00" width="7.06" height="6.50" fill="#767676"/>
<rect x="413.30" y="108.00" width="7.06" height="6.50" fill="#727272"/>
<rect x="420.06" y="108.00" width="7.06" height="6.50" fill="#707070"/>
<rect x="426.82" y="108.00" width="7.06" height="6.50" fill="#6f6f6f"/>
<rect x="433.58" y="108.00" width="7.06" height="6.50" fill="#6d6d6d"/>
<rect x="440.34" y="108.00" width="7.06" height="6.50" fill="#6c6c6c"/>
<rect x="359.23" y="114.20" width="7.06" height="6.50" fill="#9e9e9e"/>
<rect x="365.98" y="114.20" width="7.06" height="6.50" fill="#979797"/>
<rect x="372.74" y="114.20" width="7.06" height="6.50" fill="#919191"/>
<rect x="379.50" y="114.20" width="7.06" height="6.50" fill="#8b8b8b"/>
<rect x="386.26" y="114.20" width="7.06" height="6.50" fill="#858585"/>
<rect x="393.02" y="114.20" width="7.06" height="6.50" fill="#7f7f7f"/>
<rect x="399.78" y="114.20" width="7.06" height="6.50" fill="#797979"/>
<rect x="406.54" y="114.20" width="7.06" height="6.50" fill="#737373"/>
<rect x="413.30" y="114.20" width="7.06" height="6.50" fill="#6e6e6e"/>
<rect x="420.06" y="114.20" width="7.06" height="6.50" fill="#6d6d6d"/>
<rect x="426.82" y="114.20" width="7.06" height="6.50" fill="#6b6b6b"/>
<rect x="433.58" y="114.20" width="7.06" height="6.50" fill="#6a6a6a"/>
<rect x="440.34" y="114.20" width="7.06" height="6.50" fill="#686868"/>
<rect x="359.23" y="120.40" width="7.06" height="6.50" fill="#9c9c9c"/>
<rect x="365.98" y="120.40" width="7.06" height="6.50" fill="#959595"/>
<rect x="372.74" y="120.40" width="7.06" height="6.50" fill="#8f8f8f"/>
<rect x="379.50" y="120.40" width="7.06" height="6.50" fill="#898989"/>
<rect x="386.26" y="120.40" width="7.06" height="6.50" fill="#838383"/>
<rect x="393.02" y="120.40" width="7.06" height="6.50" fill="#7c7c7c"/>
<rect x="399.78" y="120.40" width="7.06" height="6.50" fill="#767676"/>
<rect x="406.54" y="120.40" width="7.06" height="6.50" fill="#707070"/>
<rect x="413.30" y="120.40" width="7.06" height="6.50" fill="#6b6b6b"/>
<rect x="420.06" y="120.40" width="7.06" height="6.50" fill="#6a6a6a"/>
<rect x="426.82" y="120.40" width="7.06" height="6.50" fill="#686868"/>
<rect x="433.58" y="120.40" width="7.06" height="6.50" fill="#666666"/>
<rect x="440.34" y="120.40" width="7.06" height="6.50" fill="#656565"/>
<rect x="359.23" y="126.60" width="7.06" height="6.50" fill="#9a9a9a"/>
<rect x="365.98" y="126.60" width="7.06" height="6.50" fill="#939393"/>
<rect x="372.74" y="126.60" width="7.06" height="6.50" fill="#8d8d8d"/>
<rect x="379.50" y="126.60" width="7.06" height="6.50" fill="#878787"/>
<rect x="386.26" y="126.60" width="7.06" height="6.50" fill="#818181"/>
<rect x="393.02" y="126.60" width="7.06" height="6.50" fill="#7a7a7a"/>
<rect x="399.78" y="126.60" width="7.06" height="6.50" fill="#747474"/>
<rect x="406.54" y="126.60" width="7.06" height="6.50" fill="#6d6d6d"/>
<rect x="413.30" y="126.60" width="7.06" height="6.50" fill="#696969"/>
<rect x="420.06" y="126.60" width="7.06" height="6.50" fill="#676767"/>
<rect x="426.82" y="126.60" width="7.06" height="6.50" fill="#656565"/>
<rect x="433.58" y="126.60" width="7.06" height="6.50" fill="#646464"/>
<rect x="440.34" y="126.60" width="7.06" height="6.50" fill="#626262"/>
<rect x="359.23" y="132.80" width="7.06" height="6.50" fill="#989898"/>
<rect x="365.98" y="132.80" width="7.06" height="6.50" fill="#919191"/>
<rect x="372.74" y="132.80" width="7.06" height="6.50" fill="#8b8b8b"/>
<rect x="379.50" y="132.80" width="7.06" height="6.50" fill="#858585"/>
<rect x="386.26" y="132.80" width="7.06" height="6.50" fill="#7f7f7f"/>
<rect x="393.02" y="132.80" width="7.06" height="6.50" fill="#787878"/>
<rect x="399.78" y="132.80" width="7.06" height="6.50" fill="#717171"/>
<rect x="406.54" y="132.80" width="7.06" height="6.50" fill="#6b6b6b"/>
<rect x="413.30" y="132.80" width="7.06" height="6.50" fill="#666666"/>
<rect x="420.06" y="132.80" width="7.06" height="6.50" fill="#646464"/>
<rect x="426.82" y="132.80" width="7.06" height="6.50" fill="#636363"/>
<rect x="433.58" y="132.80" width="7.06" height="6.50" fill="#616161"/>
<rect x="440.34" y="132.80" width="7.06" height="6.50" fill="#606060"/>
<rect x="359.23" y="139.00" width="7.06" height="6.50" fill="#969696"/>
<rect x="365.98" y="139.00" width="7.06" height="6.50" fill="#8f8f8f"/>
<rect x="372.74" y="139.00" width="7.06" height="6.50" fill="#898989"/>
<rect x="379.50" y="139.00" width="7.06" height="6.50" fill="#838383"/>
<rect x="386.26" y="139.00" width="7.06" height="6.50" fill="#7c7c7c"/>
<rect x="393.02" y="139.00" width="7.06" height="6.50" fill="#767676"/>
<rect x="399.78" y="139.00" width="7.06" height="6.50" fill="#6f6f6f"/>
<rect x="406.54" y="139.00" width="7.06" height="6.50" fill="#686868"/>
<rect x="413.30" y="139.00" width="7.06" height="6.50" fill="#636363"/>
<rect x="420.06" y="139.00" width="7.06" height="6.50" fill="#626262"/>
<rect x="426.82" y="139.00" width="7.06" height="6.50" fill="#606060"/>
<rect x="433.58" y="139.00" width="7.06" height="6.50" fill="#5f5f5f"/>
<rect x="440.34" y="139.00" width="7.06" height="6.50" fill="#5d5d5d"/>
<rect x="447.10" y="21.20" width="7.06" height="6.50" fill="#939393"/>
<rect x="453.86" y="21.20" width="7.06" height="6.50" fill="#8f8f8f"/>
<rect x="460.62" y="21.20" width="7.06" height="6.50" fill="#8b8b8b"/>
<rect x="467.38" y="21.20" width="7.06" height="6.50" fill="#878787"/>
<rect x="474.14" y="21.20" width="7.06" height="6.50" fill="#838383"/>
<rect x="480.90" y="21.20" width="7.06" height="6.50" fill="#828282"/>
<rect x="487.66" y="21.20" width="7.06" height="6.50" fill="#818181"/>
<rect x="494.42" y="21.20" width="7.06" height="6.50" fill="#818181"/>
<rect x="501.18" y="21.20" width="7.06" height="6.50" fill="#818181"/>
<rect x="507.94" y="21.20" width="7.06" height="6.50" fill="#838383"/>
<rect x="514.70" y="21.20" width="7.06" height="6.50" fill="#848484"/>
<rect x="521.46" y="21.20" width="7.06" height="6.50" fill="#868686"/>
<rect x="528.22" y="21.20" width="7.06" height="6.50" fill="#878787"/>
<rect x="447.10" y="27.40" width="7.06" height="6.50" fill="#939393"/>
<rect x="453.86" y="27.40" width="7.06" height="6.50" fill="#8f8f8f"/>
<rect x="460.62" y="27.40" width="7.06" height="6.50" fill="#8b8b8b"/>
<rect x="467.38" y="27.40" width="7.06" height="6.50" fill="#888888"/>
<rect x="474.14" y="27.40" width="7.06" height="6.50" fill="#848484"/>
<rect x="480.90" y="27.40" width="7.06" height="6.50" fill="#828282"/>
<rect x="487.66" y="27.40" width="7.06" height="6.50" fill="#828282"/>
<rect x="494.42" y="27.40" width="7.06" height="6.50" fill="#828282"/>
<rect x="501.18" y="27.40" width="7.06" height="6.50" fill="#838383"/>
<rect x="507.94" y="27.40" width="7.06" height="6.50" fill="#858585"/>
<rect x="514.70" y="27.40" width="7.06" height="6.50" fill="#868686"/>
<rect x="521.46" y="27.40" width="7.06" height="6.50" fill="#888888"/>
<rect x="528.22" y="27.40" width="7.06" height="6.50" fill="#898989"/>
<rect x="447.10" y="33.60" width="7.06" height="6.50" fill="#949494"/>
<rect x="453.86" y="33.60" width="7.06" height="6.50" fill="#909090"/>
<rect x="460.62" y="33.60" width="7.06" height="6.50" fill="#8c8c8c"/>
<rect x="467.38" y="33.60" width="7.06" height="6.50" fill="#888888"/>
<rect x="474.14" y="33.60" width="7.06" height="6.50" fill="#848484"/>
<rect x="480.90" y="33.60" width="7.06" height="6.50" fill="#838383"/>
<rect x="487.66" y="33.60" width="7.06" height="6.50" fill="#838383"/>
<rect x="494.42" y="33.60" width="7.06" height="6.50" fill="#848484"/>
<rect x="501.18" y="33.60" width="7.06" height="6.50" fill="#858585"/>
<rect x="507.94" y="33.60" width="7.06" height="6.50" fill="#868686"/>
<rect x="514.70" y="33.60" width="7.06" height="6.50" fill="#888888"/>
<rect x="521.46" y="33.60" width="7.06" height="6.50" fill="#8a8a8a"/>
<rect x="528.22" y="33.60" width="7.06" height="6.50" fill="#8c8c8c"/>
<rect x="447.10" y="39.80" width="7.06" height="6.50" fill="#949494"/>
<rect x="453.86" y="39.80" width="7.06" height="6.50" fill="#909090"/>
<rect x="460.62" y="39.80" width="7.06" height="6.50" fill="#8d8d8d"/>
<rect x="467.38" y="39.80" width="7.06" height="6.50" fill="#898989"/>
<rect x="474.14" y="39.80" width="7.06" height="6.50" fill="#858585"/>
<rect x="480.90" y="39.80" width="7.06" height="6.50" fill="#848484"/>
<rect x="487.66" y="39.80" width="7.06" height="6.50" fill="#848484"/>
<rect x="494.42" y="39.80" width="7.06" height="6.50" fill="#858585"/>
<rect x="501.18" y="39.80" width="7.06" height="6.50" fill="#868686"/>
<rect x="507.94" y="39.80" width="7.06" height="6.50" fill="#888888"/>
<rect x="514.70" y="39.80" width="7.06" height="6.50" fill="#8a8a8a"/>
<rect x="521.46" y="39.80" width="7.06" height="6.50" fill="#8c8c8c"/>
<rect x="528.22" y="39.80" width="7.06" height="6.50" fill="#8e8e8e"/>
<rect x="447.10" y="46.00" width="7.06" height="6.50" fill="#969696"/>
<rect x="453.86" y="46.00" width="7.06" height="6.50" fill="#929292"/>
<rect x="460.62" y="46.00" width="7.06" height="6.50" fill="#8f8f8f"/>
<rect x="467.38" y="46.00" width="7.06" height="6.50" fill="#8b8b8b"/>
<rect x="474.14" y="46.00" width="7.06" height="6.50" fill="#888888"/>
<rect x="480.90" y="46.00" width="7.06" height="6.50" fill="#878787"/>
<rect x="487.66" y="46.00" width="7.06" height="6.50" fill="#888888"/>
<rect x="494.42" y="46.00" width="7.06" height="6.50" fill="#898989"/>
<rect x="501.18" y="46.00" width="7.06" height="6.50" fill="#8a8a8a"/>
<rect x="507.94" y="46.00" width="7.06" height="6.50" fill="#8c8c8c"/>
<rect x="514.70" y="46.00" width="7.06" height="6.50" fill="#8e8e8e"/>
<rect x="521.46" y="46.00" width="7.06" height="6.50" fill="#909090"/>
<rect x="528.22" y="46.00" width="7.06" height="6.50" fill="#919191"/>
<rect x="447.10" y="52.20" width="7.06" height="6.50" fill="#989898"/>
<rect x="453.86" y="52.20" width="7.06" height="6.50" fill="#959595"/>
<rect x="460.62" y="52.20" width="7.06" height="6.50" fill="#929292"/>
<rect x="467.38" y="52.20" width="7.06" height="6.50" fill="#8f8f8f"/>
<rect x="474.14" y="52.20" width="7.06" height="6.50" fill="#8c8c8c"/>
<rect x="480.90" y="52.20" width="7.06" height="6.50" fill="#8b8b8b"/>
<rect x="487.66" y="52.20" width="7.06" height="6.50" fill="#8c8c8c"/>
<rect x="494.42" y="52.20" width="7.06" height="6.50" fill="#8d8d8d"/>
<rect x="501.18" y="52.20" width="7.06" height="6.50" fill="#8f8f8f"/>
<rect x="507.94" y="52.20" width="7.06" height="6.50" fill="#909090"/>
<rect x="514.70" y="52.20" width="7.06" height="6.50" fill="#929292"/>
<rect x="521.46" y="52.20" width="7.06" height="6.50" fill="#949494"/>
<rect x="528.22" y="52.20" width="7.06" height="6.50" fill="#959595"/>
<rect x="447.10" y="58.40" width="7.06" height="6.50" fill="#9b9b9b"/>
<rect x="453.86" y="58.40" width="7.06" height="6.50" fill="#989898"/>
<rect x="460.62" y="58.40" width="7.06" height="6.50" fill="#969696"/>
<rect x="467.38" y="58.40" width="7.06" height="6.50" fill="#939393"/>
<rect x="474.14" y="58.40" width="7.06" height="6.50" fill="#909090"/>
<rect x="480.90" y="58.40" width="7.06" height="6.50" fill="#909090"/>
<rect x="487.66" y="58.40" width="7.06" height="6.50" fill="#929292"/>
<rect x="494.42" y="58.40" width="7.06" height="6.50" fill="#939393"/>
<rect x="501.18" y="58.40" width="7.06" height="6.50" fill="#949494"/>
<rect x="507.94" y="58.40" width="7.06" height="6.50" fill="#969696"/>
<rect x="514.70" y="58.40" width="7.06" height="6.50" fill="#979797"/>
<rect x="521.46" y="58.40" width="7.06" height="6.50" fill="#999999"/>
<rect x="528.22" y="58.40" width="7.06" height="6.50" fill="#9b9b9b"/>
<rect x="447.10" y="64.60" width="7.06" height="6.50" fill="#a1a1a1"/>
<rect x="453.86" y="64.60" width="7.06" height="6.50" fill="#9e9e9e"/>
<rect x="460.62" y="64.60" width="7.06" height="6.50" fill="#9c9c9c"/>
<rect x="467.38" y="64.60" width="7.06" height="6.50" fill="#9a9a9a"/>
<rect x="474.14" y="64.60" width="7.06" height="6.50" fill="#989898"/>
<rect x="480.90" y="64.60" width="7.06" height="6.50" fill="#989898"/>
<rect x="487.66" y="64.60" width="7.06" height="6.50" fill="#9a9a9a"/>
<rect x="494.42" y="64.60" width="7.06" height="6.50" fill="#9c9c9c"/>
<rect x="501.18" y="64.60" width="7.06" height="6.50" fill="#9e9e9e"/>
<rect x="507.94" y="64.60" width="7.06" height="6.50" fill="#a0a0a0"/>
<rect x="514.70" y="64.60" width="7.06" height="6.50" fill="#a1a1a1"/>
<rect x="521.46" y="64.60" width="7.06" height="6.50" fill="#a3a3a3"/>
<rect x="528.22" y="64.60" width="7.06" height="6.50" fill="#a4a4a4"/>
<rect x="447.10" y="70.80" width="7.06" height="6.50" fill="#a6a6a6"/>
<rect x="453.86" y="70.80" width="7.06" height="6.50" fill="#a4a4a4"/>
<rect x="460.62" y="70.80" width="7.06" height="6.50" fill="#a3a3a3"/>
<rect x="467.38" y="70.80" width="7.06" height="6.50" fill="#a1a1a1"/>
<rect x="474.14" y="70.80" width="7.06" height="6.50" fill="#9f9f9f"/>
<rect x="480.90" y="70.80" width="7.06" height="6.50" fill="#a0a0a0"/>
<rect x="487.66" y="70.80" width="7.06" height="6.50" fill="#a3a3a3"/>
<rect x="494.42" y="70.80" width="7.06" height="6.50" fill="#a6a6a6"/>
<rect x="501.18" y="70.80" width="7.06" height="6.50" fill="#a8a8a8"/>
<rect x="507.94" y="70.80" width="7.06" height="6.50" fill="#a9a9a9"/>
<rect x="514.70" y="70.80" width="7.06" height="6.50" fill="#ababab"/>
<rect x="521.46" y="70.80" width="7.06" height="6.50" fill="#acacac"/>
<rect x="528.22" y="70.80" width="7.06" height="6.50" fill="#aeaeae"/>
<rect x="447.10" y="77.00" width="7.06" height="6.50" fill="#acacac"/>
<rect x="453.86" y="77.00" width="7.06" height="6.50" fill="#aaaaaa"/>
<rect x="460.62" y="77.00" width="7.06" height="6.50" fill="#a9a9a9"/>
<rect x="467.38" y="77.00" width="7.06" height="6.50" fill="#a8a8a8"/>
<rect x="474.14" y="77.00" width="7.06" height="6.50" fill="#a7a7a7"/>
<rect x="480.90" y="77.00" width="7.06" height="6.50" fill="#a8a8a8"/>
<rect x="487.66" y="77.00" width="7.06" height="6.50" fill="#acacac"/>
<rect x="494.42" y="77.00" width="7.06" height="6.50" fill="#afafaf"/>
<rect x="501.18" y="77.00" width="7.06" height="6.50" fill="#b1b1b1"/>
<rect x="507.94" y="77.00" width="7.06" height="6.50" fill="#b3b3b3"/>
<rect x="514.70" y="77.00" width="7.06" height="6.50" fill="#b5b5b5"/>
<rect x="521.46" y="77.00" width="7.06" height="6.50" fill="#b6b6b6"/>
<rect x="528.22" y="77.00" width="7.06" height="6.50" fill="#b8b8b8"/>
<rect x="447.10" y="83.20" width="7.06" height="6.50" fill="#818181"/>
<rect x="453.86" y="83.20" width="7.06" height="6.50" fill="#7d7d7d"/>
<rect x="460.62" y="83.20" width="7.06" height="6.50" fill="#787878"/>
<rect x="467.38" y="83.20" width="7.06" height="6.50" fill="#747474"/>
<rect x="474.14" y="83.20" width="7.06" height="6.50" fill="#6f6f6f"/>
<rect x="480.90" y="83.20" width="7.06" height="6.50" fill="#6a6a6a"/>
<rect x="487.66" y="83.20" width="7.06" height="6.50" fill="#656565"/>
<rect x="494.42" y="83.20" width="7.06" height="6.50" fill="#606060"/>
<rect x="501.18" y="83.20" width="7.06" height="6.50" fill="#5c5c5c"/>
<rect x="507.94" y="83.20" width="7.06" height="6.50" fill="#5b5b5b"/>
<rect x="514.70" y="83.20" width="7.06" height="6.50" fill="#5a5a5a"/>
<rect x="521.46" y="83.20" width="7.06" height="6.50" fill="#595959"/>
<rect x="528.22" y="83.20" width="7.06" height="6.50" fill="#585858"/>
<rect x="447.10" y="89.40" width="7.06" height="6.50" fill="#7d7d7d"/>
<rect x="453.86" y="89.40" width="7.06" height="6.50" fill="#797979"/>
<rect x="460.62" y="89.40" width="7.06" height="6.50" fill="#747474"/>
<rect x="467.38" y="89.40" width="7.06" height="6.50" fill="#6f6f6f"/>
<rect x="474.14" y="89.40" width="7.06" height="6.50" fill="#6a6a6a"/>
<rect x="480.90" y="89.40" width="7.06" height="6.50" fill="#656565"/>
<rect x="487.66" y="89.40" width="7.06" height="6.50" fill="#606060"/>
<rect x="494.42" y="89.40" width="7.06" height="6.50" fill="#5a5a5a"/>
<rect x="501.18" y="89.40" width="7.06" height="6.50" fill="#575757"/>
<rect x="507.94" y="89.40" width="7.06" height="6.50" fill="#575757"/>
<rect x="514.70" y="89.40" width="7.06" height="6.50" fill="#575757"/>
<rect x="521.46" y="89.40" width="7.06" height="6.50" fill="#585858"/>
<rect x="528.22" y="89.40" width="7.06" height="6.50" fill="#585858"/>
<rect x="447.10" y="95.60" width="7.06" height="6.50" fill="#7a7a7a"/>
<rect x="453.86" y="95.60" width="7.06" height="6.50" fill="#757575"/>
<rect x="460.62" y="95.60" width="7.06" height="6.50" fill="#707070"/>
<rect x="467.38" y="95.60" width="7.06" height="6.50" fill="#6b6b6b"/>
<rect x="474.14" y="95.60" width="7.06" height="6.50" fill="#666666"/>
<rect x="480.90" y="95.60" width="7.06" height="6.50" fill="#606060"/>
<rect x="487.66" y="95.60" width="7.06" height="6.50" fill="#5a5a5a"/>
<rect x="494.42" y="95.60" width="7.06" height="6.50" fill="#545454"/>
<rect x="501.18" y="95.60" width="7.06" height="6.50" fill="#515151"/>
<rect x="507.94" y="95.60" width="7.06" height="6.50" fill="#525252"/>
<rect x="514.70" y="95.60" width="7.06" height="6.50" fill="#545454"/>
<rect x="521.46" y="95.60" width="7.06" height="6.50" fill="#565656"/>
<rect x="528.22" y="95.60" width="7.06" height="6.50" fill="#575757"/>
<rect x="447.10" y="101.80" width="7.06" height="6.50" fill="#767676"/>
<rect x="453.86" y="101.80" width="7.06" height="6.50" fill="#717171"/>
<rect x="460.62" y="101.80" width="7.06" height="6.50" fill="#6c6c6c"/>
<rect x="467.38" y="101.80" width="7.06" height="6.50" fill="#666666"/>
<rect x="474.14" y="101.80" width="7.06" height="6.50" fill="#616161"/>
<rect x="480.90" y="101.80" width="7.06" height="6.50" fill="#5b5b5b"/>
<rect x="487.66" y="101.80" width="7.06" height="6.50" fill="#555555"/>
<rect x="494.42" y="101.80" width="7.06" height="6.50" fill="#4e4e4e"/>
<rect x="501.18" y="101.80" width="7.06" height="6.50" fill="#4b4b4b"/>
<rect x="507.94" y="101.80" width="7.06" height="6.50" fill="#4e4e4e"/>
<rect x="514.70" y="101.80" width="7.06" height="6.50" fill="#515151"/>
<rect x="521.46" y="101.80" width="7.06" height="6.50" fill="#545454"/>
<rect x="528.22" y="101.80" width="7.06" height="6.50" fill="#575757"/>
<rect x="447.10" y="108.00" width="7.06" height="6.50" fill="#717171"/>
<rect x="453.86" y="108.00" width="7.06" height="6.50" fill="#6c6c6c"/>
<rect x="460.62" y="108.00" width="7.06" height="6.50" fill="#686868"/>
<rect x="467.38" y="108.00" width="7.06" height="6.50" fill="#636363"/>
<rect x="474.14" y="108.00" width="7.06" height="6.50" fill="#5e5e5e"/>
<rect x="480.90" y="108.00" width="7.06" height="6.50" fill="#585858"/>
<rect x="487.66" y="108.00" width="7.06" height="6.50" fill="#515151"/>
<rect x="494.42" y="108.00" width="7.06" height="6.50" fill="#4a4a4a"/>
<rect x="501.18" y="108.00" width="7.06" height="6.50" fill="#474747"/>
<rect x="507.94" y="108.00" width="7.06" height="6.50" fill="#4b4b4b"/>
<rect x="514.70" y="108.00" width="7.06" height="6.50" fill="#4e4e4e"/>
<rect x="521.46" y="108.00" width="7.06" height="6.50" fill="#525252"/>
<rect x="528.22" y="108.00" width="7.06" height="6.50" fill="#555555"/>
<rect x="447.10" y="114.20" width="7.06" height="6.50" fill="#6d6d6d"/>
<rect x="453.86" y="114.20" width="7.06" height="6.50" fill="#686868"/>
<rect x="460.62" y="114.20" width="7.06" height="6.50" fill="#646464"/>
<rect x="467.38" y="114.20" width="7.06" height="6.50" fill="#5f5f5f"/>
<rect x="474.14" y="114.20" width="7.06" height="6.50" fill="#5b5b5b"/>
<rect x="480.90" y="114.20" width="7.06" height="6.50" fill="#545454"/>
<rect x="487.66" y="114.20" width="7.06" height="6.50" fill="#4d4d4d"/>
<rect x="494.42" y="114.20" width="7.06" height="6.50" fill="#464646"/>
<rect x="501.18" y="114.20" width="7.06" height="6.50" fill="#434343"/>
<rect x="507.94" y="114.20" width="7.06" height="6.50" fill="#474747"/>
<rect x="514.70" y="114.20" width="7.06" height="6.50" fill="#4c4c4c"/>
<rect x="521.46" y="114.20" width="7.06" height="6.50" fill="#505050"/>
<rect x="528.22" y="114.20" width="7.06" height="6.50" fill="#545454"/>
<rect x="447.10" y="120.40" width="7.06" height="6.50" fill="#696969"/>
<rect x="453.86" y="120.40" width="7.06" height="6.50" fill="#656565"/>
<rect x="460.62" y="120.40" width="7.06" height="6.50" fill="#606060"/>
<rect x="467.38" y="120.40" width="7.06" height="6.50" fill="#5c5c5c"/>
<rect x="474.14" y="120.40" width="7.06" height="6.50" fill="#585858"/>
<rect x="480.90" y="120.40" width="7.06" height="6.50" fill="#525252"/>
<rect x="487.66" y="120.40" width="7.06" height="6.50" fill="#4a4a4a"/>
<rect x="494.42" y="120.40" width="7.06" height="6.50" fill="#434343"/>
<rect x="501.18" y="120.40" width="7.06" height="6.50" fill="#404040"/>
<rect x="507.94" y="120.40" width="7.06" height="6.50" fill="#454545"/>
<rect x="514.70" y="120.40" width="7.06" height="6.50" fill="#494949"/>
<rect x="521.46" y="120.40" width="7.06" height="6.50" fill="#4e4e4e"/>
<rect x="528.22" y="120.40" width="7.06" height="6.50" fill="#535353"/>
<rect x="447.10" y="126.60" width="7.06" height="6.50" fill="#666666"/>
<rect x="453.86" y="126.60" width="7.06" height="6.50" fill="#626262"/>
<rect x="460.62" y="126.60" width="7.06" height="6.50" fill="#5e5e5e"/>
<rect x="467.38" y="126.60" width="7.06" height="6.50" fill="#5a5a5a"/>
<rect x="474.14" y="126.60" width="7.06" height="6.50" fill="#565656"/>
<rect x="480.90" y="126.60" width="7.06" height="6.50" fill="#4f4f4f"/>
<rect x="487.66" y="126.60" width="7.06" height="6.50" fill="#484848"/>
<rect x="494.42" y="126.60" width="7.06" height="6.50" fill="#414141"/>
<rect x="501.18" y="126.60" width="7.06" height="6.50" fill="#3e3e3e"/>
<rect x="507.94" y="126.60" width="7.06" height="6.50" fill="#434343"/>
<rect x="514.70" y="126.60" width="7.06" height="6.50" fill="#484848"/>
<rect x="521.46" y="126.60" width="7.06" height="6.50" fill="#4d4d4d"/>
<rect x="528.22" y="126.60" width="7.06" height="6.50" fill="#525252"/>
<rect x="447.10" y="132.80" width="7.06" height="6.50" fill="#636363"/>
<rect x="453.86" y="132.80" width="7.06" height="6.50" fill="#5f5f5f"/>
<rect x="460.62" y="132.80" width="7.06" height="6.50" fill="#5c5c5c"/>
<rect x="467.38" y="132.80" width="7.06" height="6.50" fill="#585858"/>
<rect x="474.14" y="132.80" width="7.06" height="6.50" fill="#545454"/>
<rect x="480.90" y="132.80" width="7.06" height="6.50" fill="#4d4d4d"/>
<rect x="487.66" y="132.80" width="7.06" height="6.50" fill="#464646"/>
<rect x="494.42" y="132.80" width="7.06" height="6.50" fill="#3f3f3f"/>
<rect x="501.18" y="132.80" width="7.06" height="6.50" fill="#3c3c3c"/>
<rect x="507.94" y="132.80" width="7.06" height="6.50" fill="#414141"/>
<rect x="514.70" y="132.80" width="7.06" height="6.50" fill="#474747"/>
<rect x="521.46" y="132.80" width="7.06" height="6.50" fill="#4c4c4c"/>
<rect x="528.22" y="132.80" width="7.06" height="6.50" fill="#525252"/>
<rect x="447.10" y="139.00" width="7.06" height="6.50" fill="#616161"/>
<rect x="453.86" y="139.00" width="7.06" height="6.50" fill="#5d5d5d"/>
<rect x="460.62" y="139.00" width="7.06" height="6.50" fill="#595959"/>
<rect x="467.38" y="139.00" width="7.06" height="6.50" fill="#555555"/>
<rect x="474.14" y="139.00" width="7.06" height="6.50" fill="#515151"/>
<rect x="480.90" y="139.00" width="7.06" height="6.50" fill="#4b4b4b"/>
<rect x="487.66" y="139.00" width="7.06" height="6.50" fill="#444444"/>
<rect x="494.42" y="139.00" width="7.06" height="6.50" fill="#3d3d3d"/>
<rect x="501.18" y="139.00" width="7.06" height="6.50" fill="#3a3a3a"/>
<rect x="507.94" y="139.00" width="7.06" height="6.50" fill="#404040"/>
<rect x="514.70" y="139.00" width="7.06" height="6.50" fill="#454545"/>
<rect x="521.46" y="139.00" width="7.06" height="6.50" fill="#4b4b4b"/>
<rect x="528.22" y="139.00" width="7.06" height="6.50" fill="#515151"/>
<rect x="534.98" y="21.20" width="7.06" height="6.50" fill="#646464"/>
<rect x="541.73" y="21.20" width="7.06" height="6.50" fill="#626262"/>
<rect x="548.49" y="21.20" width="7.06" height="6.50" fill="#606060"/>
<rect x="555.25" y="21.20" width="7.06" height="6.50" fill="#5f5f5f"/>
<rect x="562.01" y="21.20" width="7.06" height="6.50" fill="#5d5d5d"/>
<rect x="568.77" y="21.20" width="7.06" height="6.50" fill="#5d5d5d"/>
<rect x="575.53" y="21.20" width="7.06" height="6.50" fill="#5e5e5e"/>
<rect x="582.29" y="21.20" width="7.06" height="6.50" fill="#5f5f5f"/>
<rect x="589.05" y="21.20" width="7.06" height="6.50" fill="#626262"/>
<rect x="595.81" y="21.20" width="7.06" height="6.50" fill="#696969"/>
<rect x="602.57" y="21.20" width="7.06" height="6.50" fill="#6f6f6f"/>
<rect x="609.33" y="21.20" width="7.06" height="6.50" fill="#757575"/>
<rect x="616.09" y="21.20" width="7.06" height="6.50" fill="#7c7c7c"/>
<rect x="534.98" y="27.40" width="7.06" height="6.50" fill="#646464"/>
<rect x="541.73" y="27.40" width="7.06" height="6.50" fill="#626262"/>
<rect x="548.49" y="27.40" width="7.06" height="6.50" fill="#616161"/>
<rect x="555.25" y="27.40" width="7.06" height="6.50" fill="#5f5f5f"/>
<rect x="562.01" y="27.40" width="7.06" height="6.50" fill="#5e5e5e"/>
<rect x="568.77" y="27.40" width="7.06" height="6.50" fill="#5e5e5e"/>
<rect x="575.53" y="27.40" width="7.06" height="6.50" fill="#606060"/>
<rect x="582.29" y="27.40" width="7.06" height="6.50" fill="#626262"/>
<rect x="589.05" y="27.40" width="7.06" height="6.50" fill="#656565"/>
<rect x="595.81" y="27.40" width="7.06" height="6.50" fill="#6c6c6c"/>
<rect x="602.57" y="27.40" width="7.06" height="6.50" fill="#727272"/>
<rect x="609.33" y="27.40" width="7.06" height="6.50" fill="#787878"/>
<rect x="616.09" y="27.40" width="7.06" height="6.50" fill="#7e7e7e"/>
<rect x="534.98" y="33.60" width="7.06" height="6.50" fill="#646464"/>
<rect x="541.73" y="33.60" width="7.06" height="6.50" fill="#636363"/>
<rect x="548.49" y="33.60" width="7.06" height="6.50" fill="#626262"/>
<rect x="555.25" y="33.60" width="7.06" height="6.50" fill="#606060"/>
<rect x="562.01" y="33.60" width="7.06" height="6.50" fill="#5f5f5f"/>
<rect x="568.77" y="33.60" width="7.06" height="6.50" fill="#606060"/>
<rect x="575.53" y="33.60" width="7.06" height="6.50" fill="#626262"/>
<rect x="582.29" y="33.60" width="7.06" height="6.50" fill="#656565"/>
<rect x="589.05" y="33.60" width="7.06" height="6.50" fill="#686868"/>
<rect x="595.81" y="33.60" width="7.06" height="6.50" fill="#6e6e6e"/>
<rect x="602.57" y="33.60" width="7.06" height="6.50" fill="#747474"/>
<rect x="609.33" y="33.60" width="7.06" height="6.50" fill="#7b7b7b"/>
<rect x="616.09" y="33.60" width="7.06" height="6.50" fill="#818181"/>
<rect x="534.98" y="39.80" width="7.06" height="6.50" fill="#656565"/>
<rect x="541.73" y="39.80" width="7.06" height="6.50" fill="#636363"/>
<rect x="548.49" y="39.80" width="7.06" height="6.50" fill="#626262"/>
<rect x="555.25" y="39.80" width="7.06" height="6.50" fill="#616161"/>
<rect x="562.01" y="39.80" width="7.06" height="6.50" fill="#606060"/>
<rect x="568.77" y="39.80" width="7.06" height="6.50" fill="#616161"/>
<rect x="575.53" y="39.80" width="7.06" height="6.50" fill="#646464"/>
<rect x="582.29" y="39.80" width="7.06" height="6.50" fill="#676767"/>
<rect x="589.05" y="39.80" width="7.06" height="6.50" fill="#6b6b6b"/>
<rect x="595.81" y="39.80" width="7.06" height="6.50" fill="#717171"/>
<rect x="602.57" y="39.80" width="7.06" height="6.50" fill="#777777"/>
<rect x="609.33" y="39.80" width="7.06" height="6.50" fill="#7d7d7d"/>
<rect x="616.09" y="39.80" width="7.06" height="6.50" fill="#838383"/>
<rect x="534.98" y="46.00" width="7.06" height="6.50" fill="#666666"/>
<rect x="541.73" y="46.00" width="7.06" height="6.50" fill="#656565"/>
<rect x="548.49" y="46.00" width="7.06" height="6.50" fill="#656565"/>
<rect x="555.25" y="46.00" width="7.06" height="6.50" fill="#646464"/>
<rect x="562.01" y="46.00" width="7.06" height="6.50" fill="#636363"/>
<rect x="568.77" y="46.00" width="7.06" height="6.50" fill="#656565"/>
<rect x="575.53" y="46.00" width="7.06" height="6.50" fill="#686868"/>
<rect x="582.29" y="46.00" width="7.06" height="6.50" fill="#6c6c6c"/>
<rect x="589.05" y="46.00" width="7.06" height="6.50" fill="#707070"/>
<rect x="595.81" y="46.00" width="7.06" height="6.50" fill="#757575"/>
<rect x="602.57" y="46.00" width="7.06" height="6.50" fill="#7a7a7a"/>
<rect x="609.33" y="46.00" width="7.06" height="6.50" fill="#808080"/>
<rect x="616.09" y="46.00" width="7.06" height="6.50" fill="#858585"/>
<rect x="534.98" y="52.20" width="7.06" height="6.50" fill="#686868"/>
<rect x="541.73" y="52.20" width="7.06" height="6.50" fill="#686868"/>
<rect x="548.49" y="52.20" width="7.06" height="6.50" fill="#686868"/>
<rect x="555.25" y="52.20" width="7.06" height="6.50" fill="#676767"/>
<rect x="562.01" y="52.20" width="7.06" height="6.50" fill="#676767"/>
<rect x="568.77" y="52.20" width="7.06" height="6.50" fill="#696969"/>
<rect x="575.53" y="52.20" width="7.06" height="6.50" fill="#6d6d6d"/>
<rect x="582.29" y="52.20" width="7.06" height="6.50" fill="#707070"/>
<rect x="589.05" y="52.20" width="7.06" height="6.50" fill="#747474"/>
<rect x="595.81" y="52.20" width="7.06" height="6.50" fill="#797979"/>
<rect x="602.57" y="52.20" width="7.06" height="6.50" fill="#7d7d7d"/>
<rect x="609.33" y="52.20" width="7.06" height="6.50" fill="#828282"/>
<rect x="616.09" y="52.20" width="7.06" height="6.50" fill="#868686"/>
<rect x="534.98" y="58.40" width="7.06" height="6.50" fill="#6b6b6b"/>
<rect x="541.73" y="58.40" width="7.06" height="6.50" fill="#6b6b6b"/>
<rect x="548.49" y="58.40" width="7.06" height="6.50" fill="#6b6b6b"/>
<rect x="555.25" y="58.40" width="7.06" height="6.50" fill="#6b6b6b"/>
<rect x="562.01" y="58.40" width="7.06" height="6.50" fill="#6b6b6b"/>
<rect x="568.77" y="58.40" width="7.06" height="6.50" fill="#6e6e6e"/>
<rect x="575.53" y="58.40" width="7.06" height="6.50" fill="#717171"/>
<rect x="582.29" y="58.40" width="7.06" height="6.50" fill="#757575"/>
<rect x="589.05" y="58.40" width="7.06" height="6.50" fill="#797979"/>
<rect x="595.81" y="58.40" width="7.06" height="6.50" fill="#7d7d7d"/>
<rect x="602.57" y="58.40" width="7.06" height="6.50" fill="#818181"/>
<rect x="609.33" y="58.40" width="7.06" height="6.50" fill="#848484"/>
<rect x="616.09" y="58.40" width="7.06" height="6.50" fill="#888888"/>
<rect x="534.98" y="64.60" width="7.06" height="6.50" fill="#6e6e6e"/>
<rect x="541.73" y="64.60" width="7.06" height="6.50" fill="#6e6e6e"/>
<rect x="548.49" y="64.60" width="7.06" height="6.50" fill="#6f6f6f"/>
<rect x="555.25" y="64.60" width="7.06" height="6.50" fill="#6f6f6f"/>
<rect x="562.01" y="64.60" width="7.06" height="6.50" fill="#707070"/>
<rect x="568.77" y="64.60" width="7.06" height="6.50" fill="#727272"/>
<rect x="575.53" y="64.60" width="7.06" height="6.50" fill="#767676"/>
<rect x="582.29" y="64.60" width="7.06" height="6.50" fill="#797979"/>
<rect x="589.05" y="64.60" width="7.06" height="6.50" fill="#7d7d7d"/>
<rect x="595.81" y="64.60" width="7.06" height="6.50" fill="#808080"/>
<rect x="602.57" y="64.60" width="7.06" height="6.50" fill="#838383"/>
<rect x="609.33" y="64.60" width="7.06" height="6.50" fill="#868686"/>
<rect x="616.09" y="64.60" width="7.06" height="6.50" fill="#898989"/>
<rect x="534.98" y="70.80" width="7.06" height="6.50" fill="#717171"/>
<rect x="541.73" y="70.80" width="7.06" height="6.50" fill="#727272"/>
<rect x="548.49" y="70.80" width="7.06" height="6.50" fill="#737373"/>
<rect x="555.25" y="70.80" width="7.06" height="6.50" fill="#747474"/>
<rect x="562.01" y="70.80" width="7.06" height="6.50" fill="#757575"/>
<rect x="568.77" y="70.80" width="7.06" height="6.50" fill="#777777"/>
<rect x="575.53" y="70.80" width="7.06" height="6.50" fill="#7b7b7b"/>
<rect x="582.29" y="70.80" width="7.06" height="6.50" fill="#7e7e7e"/>
<rect x="589.05" y="70.80" width="7.06" height="6.50" fill="#818181"/>
<rect x="595.81" y="70.80" width="7.06" height="6.50" fill="#838383"/>
<rect x="602.57" y="70.80" width="7.06" height="6.50" fill="#868686"/>
<rect x="609.33" y="70.80" width="7.06" height="6.50" fill="#888888"/>
<rect x="616.09" y="70.80" width="7.06" height="6.50" fill="#8b8b8b"/>
<rect x="534.98" y="77.00" width="7.06" height="6.50" fill="#747474"/>
<rect x="541.73" y="77.00" width="7.06" height="6.50" fill="#757575"/>
<rect x="548.49" y="77.00" width="7.06" height="6.50" fill="#777777"/>
<rect x="555.25" y="77.00" width="7.06" height="6.50" fill="#787878"/>
<rect x="562.01" y="77.00" width="7.06" height="6.50" fill="#7a7a7a"/>
<rect x="568.77" y="77.00" width="7.06" height="6.50" fill="#7c7c7c"/>
<rect x="575.53" y="77.00" width="7.06" height="6.50" fill="#7f7f7f"/>
<rect x="582.29" y="77.00" width="7.06" height="6.50" fill="#828282"/>
<rect x="589.05" y="77.00" width="7.06" height="6.50" fill="#858585"/>
<rect x="595.81" y="77.00" width="7.06" height="6.50" fill="#868686"/>
<rect x="602.57" y="77.00" width="7.06" height="6.50" fill="#888888"/>
<rect x="609.33" y="77.00" width="7.06" height="6.50" fill="#8a8a8a"/>
<rect x="616.09" y="77.00" width="7.06" height="6.50" fill="#8c8c8c"/>
<rect x="534.98" y="83.20" width="7.06" height="6.50" fill="#b5b5b5"/>
<rect x="541.73" y="83.20" width="7.06" height="6.50" fill="#b0b0b0"/>
<rect x="548.49" y="83.20" width="7.06" height="6.50" fill="#ababab"/>
<rect x="555.25" y="83.20" width="7.06" height="6.50" fill="#a6a6a6"/>
<rect x="562.01" y="83.20" width="7.06" height="6.50" fill="#a1a1a1"/>
<rect x="568.77" y="83.20" width="7.06" height="6.50" fill="#9c9c9c"/>
<rect x="575.53" y="83.20" width="7.06" height="6.50" fill="#979797"/>
<rect x="582.29" y="83.20" width="7.06" height="6.50" fill="#929292"/>
<rect x="589.05" y="83.20" width="7.06" height="6.50" fill="#8d8d8d"/>
<rect x="595.81" y="83.20" width="7.06" height="6.50" fill="#8a8a8a"/>
<rect x="602.57" y="83.20" width="7.06" height="6.50" fill="#868686"/>
<rect x="609.33" y="83.20" width="7.06" height="6.50" fill="#828282"/>
<rect x="616.09" y="83.20" width="7.06" height="6.50" fill="#7e7e7e"/>
<rect x="534.98" y="89.40" width="7.06" height="6.50" fill="#b3b3b3"/>
<rect x="541.73" y="89.40" width="7.06" height="6.50" fill="#adadad"/>
<rect x="548.49" y="89.40" width="7.06" height="6.50" fill="#a8a8a8"/>
<rect x="555.25" y="89.40" width="7.06" height="6.50" fill="#a2a2a2"/>
<rect x="562.01" y="89.40" width="7.06" height="6.50" fill="#9d9d9d"/>
<rect x="568.77" y="89.40" width="7.06" height="6.50" fill="#979797"/>
<rect x="575.53" y="89.40" width="7.06" height="6.50" fill="#929292"/>
<rect x="582.29" y="89.40" width="7.06" height="6.50" fill="#8d8d8d"/>
<rect x="589.05" y="89.40" width="7.06" height="6.50" fill="#888888"/>
<rect x="595.81" y="89.40" width="7.06" height="6.50" fill="#858585"/>
<rect x="602.57" y="89.40" width="7.06" height="6.50" fill="#828282"/>
<rect x="609.33" y="89.40" width="7.06" height="6.50" fill="#7e7e7e"/>
<rect x="616.09" y="89.40" width="7.06" height="6.50" fill="#7b7b7b"/>
<rect x="534.98" y="95.60" width="7.06" height="6.50" fill="#b1b1b1"/>
<rect x="541.73" y="95.60" width="7.06" height="6.50" fill="#ababab"/>
<rect x="548.49" y="95.60" width="7.06" height="6.50" fill="#a5a5a5"/>
<rect x="555.25" y="95.60" width="7.06" height="6.50" fill="#9e9e9e"/>
<rect x="562.01" y="95.60" width="7.06" height="6.50" fill="#989898"/>
<rect x="568.77" y="95.60" width="7.06" height="6.50" fill="#939393"/>
<rect x="575.53" y="95.60" width="7.06" height="6.50" fill="#8d8d8d"/>
<rect x="582.29" y="95.60" width="7.06" height="6.50" fill="#888888"/>
<rect x="589.05" y="95.60" width="7.06" height="6.50" fill="#838383"/>
<rect x="595.81" y="95.60" width="7.06" height="6.50" fill="#808080"/>
<rect x="602.57" y="95.60" width="7.06" height="6.50" fill="#7d7d7d"/>
<rect x="609.33" y="95.60" width="7.06" height="6.50" fill="#7a7a7a"/>
<rect x="616.09" y="95.60" width="7.06" height="6.50" fill="#777777"/>
<rect x="534.98" y="101.80" width="7.06" height="6.50" fill="#afafaf"/>
<rect x="541.73" y="101.80" width="7.06" height="6.50" fill="#a9a9a9"/>
<rect x="548.49" y="101.80" width="7.06" height="6.50" fill="#a2a2a2"/>
<rect x="555.25" y="101.80" width="7.06" height="6.50" fill="#9b9b9b"/>
<rect x="562.01" y="101.80" width="7.06" height="6.50" fill="#949494"/>
<rect x="568.77" y="101.80" width="7.06" height="6.50" fill="#8e8e8e"/>
<rect x="575.53" y="101.80" width="7.06" height="6.50" fill="#888888"/>
<rect x="582.29" y="101.80" width="7.06" height="6.50" fill="#838383"/>
<rect x="589.05" y="101.80" width="7.06" height="6.50" fill="#7e7e7e"/>
<rect x="595.81" y="101.80" width="7.06" height="6.50" fill="#7c7c7c"/>
<rect x="602.57" y="101.80" width="7.06" height="6.50" fill="#797979"/>
<rect x="609.33" y="101.80" width="7.06" height="6.50" fill="#767676"/>
<rect x="616.09" y="101.80" width="7.06" height="6.50" fill="#737373"/>
<rect x="534.98" y="108.00" width="7.06" height="6.50" fill="#adadad"/>
<rect x="541.73" y="108.00" width="7.06" height="6.50" fill="#a6a6a6"/>
<rect x="548.49" y="108.00" width="7.06" height="6.50" fill="#9e9e9e"/>
<rect x="555.25" y="108.00" width="7.06" height="6.50" fill="#979797"/>
<rect x="562.01" y="108.00" width="7.06" height="6.50" fill="#909090"/>
<rect x="568.77" y="108.00" width="7.06" height="6.50" fill="#8a8a8a"/>
<rect x="575.53" y="108.00" width="7.06" height="6.50" fill="#848484"/>
<rect x="582.29" y="108.00" width="7.06" height="6.50" fill="#7f7f7f"/>
<rect x="589.05" y="108.00" width="7.06" height="6.50" fill="#7a7a7a"/>
<rect x="595.81" y="108.00" width="7.06" height="6.50" fill="#787878"/>
<rect x="602.57" y="108.00" width="7.06" height="6.50" fill="#757575"/>
<rect x="609.33" y="108.00" width="7.06" height="6.50" fill="#727272"/>
<rect x="616.09" y="108.00" width="7.06" height="6.50" fill="#707070"/>
<rect x="534.98" y="114.20" width="7.06" height="6.50" fill="#aaaaaa"/>
<rect x="541.73" y="114.20" width="7.06" height="6.50" fill="#a3a3a3"/>
<rect x="548.49" y="114.20" width="7.06" height="6.50" fill="#9b9b9b"/>
<rect x="555.25" y="114.20" width="7.06" height="6.50" fill="#939393"/>
<rect x="562.01" y="114.20" width="7.06" height="6.50" fill="#8c8c8c"/>
<rect x="568.77" y="114.20" width="7.06" height="6.50" fill="#868686"/>
<rect x="575.53" y="114.20" width="7.06" height="6.50" fill="#808080"/>
<rect x="582.29" y="114.20" width="7.06" height="6.50" fill="#7b7b7b"/>
<rect x="589.05" y="114.20" width="7.06" height="6.50" fill="#767676"/>
<rect x="595.81" y="114.20" width="7.06" height="6.50" fill="#747474"/>
<rect x="602.57" y="114.20" width="7.06" height="6.50" fill="#717171"/>
<rect x="609.33" y="114.20" width="7.06" height="6.50" fill="#6f6f6f"/>
<rect x="616.09" y="114.20" width="7.06" height="6.50" fill="#6c6c6c"/>
<rect x="534.98" y="120.40" width="7.06" height="6.50" fill="#a7a7a7"/>
<rect x="541.73" y="120.40" width="7.06" height="6.50" fill="#a0a0a0"/>
<rect x="548.49" y="120.40" width="7.06" height="6.50" fill="#989898"/>
<rect x="555.25" y="120.40" width="7.06" height="6.50" fill="#909090"/>
<rect x="562.01" y="120.40" width="7.06" height="6.50" fill="#898989"/>
<rect x="568.77" y="120.40" width="7.06" height="6.50" fill="#828282"/>
<rect x="575.53" y="120.40" width="7.06" height="6.50" fill="#7d7d7d"/>
<rect x="582.29" y="120.40" width="7.06" height="6.50" fill="#777777"/>
<rect x="589.05" y="120.40" width="7.06" height="6.50" fill="#737373"/>
<rect x="595.81" y="120.40" width="7.06" height="6.50" fill="#717171"/>
<rect x="602.57" y="120.40" width="7.06" height="6.50" fill="#6e6e6e"/>
<rect x="609.33" y="120.40" width="7.06" height="6.50" fill="#6c6c6c"/>
<rect x="616.09" y="120.40" width="7.06" height="6.50" fill="#6a6a6a"/>
<rect x="534.98" y="126.60" width="7.06" height="6.50" fill="#a4a4a4"/>
<rect x="541.73" y="126.60" width="7.06" height="6.50" fill="#9d9d9d"/>
<rect x="548.49" y="126.60" width="7.06" height="6.50" fill="#969696"/>
<rect x="555.25" y="126.60" width="7.06" height="6.50" fill="#8f8f8f"/>
<rect x="562.01" y="126.60" width="7.06" height="6.50" fill="#878787"/>
<rect x="568.77" y="126.60" width="7.06" height="6.50" fill="#818181"/>
<rect x="575.53" y="126.60" width="7.06" height="6.50" fill="#7c7c7c"/>
<rect x="582.29" y="126.60" width="7.06" height="6.50" fill="#767676"/>
<rect x="589.05" y="126.60" width="7.06" height="6.50" fill="#727272"/>
<rect x="595.81" y="126.60" width="7.06" height="6.50" fill="#707070"/>
<rect x="602.57" y="126.60" width="7.06" height="6.50" fill="#6e6e6e"/>
<rect x="609.33" y="126.60" width="7.06" height="6.50" fill="#6c6c6c"/>
<rect x="616.09" y="126.60" width="7.06" height="6.50" fill="#6a6a6a"/>
<rect x="534.98" y="132.80" width="7.06" height="6.50" fill="#a1a1a1"/>
<rect x="541.73" y="132.80" width="7.06" height="6.50" fill="#9a9a9a"/>
<rect x="548.49" y="132.80" width="7.06" height="6.50" fill="#949494"/>
<rect x="555.25" y="132.80" width="7.06" height="6.50" fill="#8d8d8d"/>
<rect x="562.01" y="132.80" width="7.06" height="6.50" fill="#868686"/>
<rect x="568.77" y="132.80" width="7.06" height="6.50" fill="#808080"/>
<rect x="575.53" y="132.80" width="7.06" height="6.50" fill="#7b7b7b"/>
<rect x="582.29" y="132.80" width="7.06" height="6.50" fill="#757575"/>
<rect x="589.05" y="132.80" width="7.06" height="6.50" fill="#717171"/>
<rect x="595.81" y="132.80" width="7.06" height="6.50" fill="#6f6f6f"/>
<rect x="602.57" y="132.80" width="7.06" height="6.50" fill="#6e6e6e"/>
<rect x="609.33" y="132.80" width="7.06" height="6.50" fill="#6c6c6c"/>
<rect x="616.09" y="132.80" width="7.06" height="6.50" fill="#6b6b6b"/>
<rect x="534.98" y="139.00" width="7.06" height="6.50" fill="#9e9e9e"/>
<rect x="541.73" y="139.00" width="7.06" height="6.50" fill="#989898"/>
<rect x="548.49" y="139.00" width="7.06" height="6.50" fill="#929292"/>
<rect x="555.25" y="139.00" width="7.06" height="6.50" fill="#8b8b8b"/>
<rect x="562.01" y="139.00" width="7.06" height="6.50" fill="#858585"/>
<rect x="568.77" y="139.00" width="7.06" height="6.50" fill="#7f7f7f"/>
<rect x="575.53" y="139.00" width="7.06" height="6.50" fill="#7a7a7a"/>
<rect x="582.29" y="139.00" width="7.06" height="6.50" fill="#747474"/>
<rect x="589.05" y="139.00" width="7.06" height="6.50" fill="#707070"/>
<rect x="595.81" y="139.00" width="7.06" height="6.50" fill="#6f6f6f"/>
<rect x="602.57" y="139.00" width="7.06" height="6.50" fill="#6e6e6e"/>
<rect x="609.33" y="139.00" width="7.06" height="6.50" fill="#6c6c6c"/>
<rect x="616.09" y="139.00" width="7.06" height="6.50" fill="#6b6b6b"/>
<rect x="622.85" y="21.20" width="7.06" height="6.50" fill="#636363"/>
<rect x="629.61" y="21.20" width="7.06" height="6.50" fill="#616161"/>
<rect x="636.37" y="21.20" width="7.06" height="6.50" fill="#5f5f5f"/>
<rect x="643.13" y="21.20" width="7.06" height="6.50" fill="#5d5d5d"/>
<rect x="649.89" y="21.20" width="7.06" height="6.50" fill="#5c5c5c"/>
<rect x="656.65" y="21.20" width="7.06" height="6.50" fill="#5c5c5c"/>
<rect x="663.41" y="21.20" width="7.06" height="6.50" fill="#5e5e5e"/>
<rect x="670.17" y="21.20" width="7.06" height="6.50" fill="#606060"/>
<rect x="676.93" y="21.20" width="7.06" height="6.50" fill="#656565"/>
<rect x="683.69" y="21.20" width="7.06" height="6.50" fill="#6d6d6d"/>
<rect x="690.45" y="21.20" width="7.06" height="6.50" fill="#747474"/>
<rect x="697.21" y="21.20" width="7.06" height="6.50" fill="#7c7c7c"/>
<rect x="703.97" y="21.20" width="7.06" height="6.50" fill="#848484"/>
<rect x="622.85" y="27.40" width="7.06" height="6.50" fill="#636363"/>
<rect x="629.61" y="27.40" width="7.06" height="6.50" fill="#616161"/>
<rect x="636.37" y="27.40" width="7.06" height="6.50" fill="#5f5f5f"/>
<rect x="643.13" y="27.40" width="7.06" height="6.50" fill="#5d5d5d"/>
<rect x="649.89" y="27.40" width="7.06" height="6.50" fill="#5b5b5b"/>
<rect x="656.65" y="27.40" width="7.06" height="6.50" fill="#5c5c5c"/>
<rect x="663.41" y="27.40" width="7.06" height="6.50" fill="#5e5e5e"/>
<rect x="670.17" y="27.40" width="7.06" height="6.50" fill="#616161"/>
<rect x="676.93" y="27.40" width="7.06" height="6.50" fill="#656565"/>
<rect x="683.69" y="27.40" width="7.06" height="6.50" fill="#6d6d6d"/>
<rect x="690.45" y="27.40" width="7.06" height="6.50" fill="#757575"/>
<rect x="697.21" y="27.40" width="7.06" height="6.50" fill="#7d7d7d"/>
<rect x="703.97" y="27.40" width="7.06" height="6.50" fill="#858585"/>
<rect x="622.85" y="33.60" width="7.06" height="6.50" fill="#636363"/>
<rect x="629.61" y="33.60" width="7.06" height="6.50" fill="#616161"/>
<rect x="636.37" y="33.60" width="7.06" height="6.50" fill="#5f5f5f"/>
<rect x="643.13" y="33.60" width="7.06" height="6.50" fill="#5d5d5d"/>
<rect x="649.89" y="33.60" width="7.06" height="6.50" fill="#5b5b5b"/>
<rect x="656.65" y="33.60" width="7.06" height="6.50" fill="#5c5c5c"/>
<rect x="663.41" y="33.60" width="7.06" height="6.50" fill="#5e5e5e"/>
<rect x="670.17" y="33.60" width="7.06" height="6.50" fill="#616161"/>
<rect x="676.93" y="33.60" width="7.06" height="6.50" fill="#666666"/>
<rect x="683.69" y="33.60" width="7.06" height="6.50" fill="#6e6e6e"/>
<rect x="690.45" y="33.60" width="7.06" height="6.50" fill="#757575"/>
<rect x="697.21" y="33.60" width="7.06" height="6.50" fill="#7d7d7d"/>
<rect x="703.97" y="33.60" width="7.06" height="6.50" fill="#858585"/>
<rect x="622.85" y="39.80" width="7.06" height="6.50" fill="#646464"/>
<rect x="629.61" y="39.80" width="7.06" height="6.50" fill="#616161"/>
<rect x="636.37" y="39.80" width="7.06" height="6.50" fill="#5f5f5f"/>
<rect x="643.13" y="39.80" width="7.06" height="6.50" fill="#5d5d5d"/>
<rect x="649.89" y="39.80" width="7.06" height="6.50" fill="#5a5a5a"/>
<rect x="656.65" y="39.80" width="7.06" height="6.50" fill="#5b5b5b"/>
<rect x="663.41" y="39.80" width="7.06" height="6.50" fill="#5e5e5e"/>
<rect x="670.17" y="39.80" width="7.06" height="6.50" fill="#616161"/>
<rect x="676.93" y="39.80" width="7.06" height="6.50" fill="#666666"/>
<rect x="683.69" y="39.80" width="7.06" height="6.50" fill="#6e6e6e"/>
<rect x="690.45" y="39.80" width="7.06" height="6.50" fill="#767676"/>
<rect x="697.21" y="39.80" width="7.06" height="6.50" fill="#7e7e7e"/>
<rect x="703.97" y="39.80" width="7.06" height="6.50" fill="#868686"/>
<rect x="622.85" y="46.00" width="7.06" height="6.50" fill="#646464"/>
<rect x="629.61" y="46.00" width="7.06" height="6.50" fill="#626262"/>
<rect x="636.37" y="46.00" width="7.06" height="6.50" fill="#606060"/>
<rect x="643.13" y="46.00" width="7.06" height="6.50" fill="#5e5e5e"/>
<rect x="649.89" y="46.00" width="7.06" height="6.50" fill="#5c5c5c"/>
<rect x="656.65" y="46.00" width="7.06" height="6.50" fill="#5d5d5d"/>
<rect x="663.41" y="46.00" width="7.06" height="6.50" fill="#606060"/>
<rect x="670.17" y="46.00" width="7.06" height="6.50" fill="#646464"/>
<rect x="676.93" y="46.00" width="7.06" height="6.50" fill="#696969"/>
<rect x="683.69" y="46.00" width="7.06" height="6.50" fill="#707070"/>
<rect x="690.45" y="46.00" width="7.06" height="6.50" fill="#787878"/>
<rect x="697.21" y="46.00" width="7.06" height="6.50" fill="#7f7f7f"/>
<rect x="703.97" y="46.00" width="7.06" height="6.50" fill="#878787"/>
<rect x="622.85" y="52.20" width="7.06" height="6.50" fill="#656565"/>
<rect x="629.61" y="52.20" width="7.06" height="6.50" fill="#636363"/>
<rect x="636.37" y="52.20" width="7.06" height="6.50" fill="#616161"/>
<rect x="643.13" y="52.20" width="7.06" height="6.50" fill="#5f5f5f"/>
<rect x="649.89" y="52.20" width="7.06" height="6.50" fill="#5d5d5d"/>
<rect x="656.65" y="52.20" width="7.06" height="6.50" fill="#5f5f5f"/>
<rect x="663.41" y="52.20" width="7.06" height="6.50" fill="#636363"/>
<rect x="670.17" y="52.20" width="7.06" height="6.50" fill="#676767"/>
<rect x="676.93" y="52.20" width="7.06" height="6.50" fill="#6c6c6c"/>
<rect x="683.69" y="52.20" width="7.06" height="6.50" fill="#737373"/>
<rect x="690.45" y="52.20" width="7.06" height="6.50" fill="#7a7a7a"/>
<rect x="697.21" y="52.20" width="7.06" height="6.50" fill="#818181"/>
<rect x="703.97" y="52.20" width="7.06" height="6.50" fill="#898989"/>
<rect x="622.85" y="58.40" width="7.06" height="6.50" fill="#666666"/>
<rect x="629.61" y="58.40" width="7.06" height="6.50" fill="#656565"/>
<rect x="636.37" y="58.40" width="7.06" height="6.50" fill="#636363"/>
<rect x="643.13" y="58.40" width="7.06" height="6.50" fill="#626262"/>
<rect x="649.89" y="58.40" width="7.06" height="6.50" fill="#606060"/>
<rect x="656.65" y="58.40" width="7.06" height="6.50" fill="#626262"/>
<rect x="663.41" y="58.40" width="7.06" height="6.50" fill="#666666"/>
<rect x="670.17" y="58.40" width="7.06" height="6.50" fill="#6a6a6a"/>
<rect x="676.93" y="58.40" width="7.06" height="6.50" fill="#6f6f6f"/>
<rect x="683.69" y="58.40" width="7.06" height="6.50" fill="#767676"/>
<rect x="690.45" y="58.40" width="7.06" height="6.50" fill="#7d7d7d"/>
<rect x="697.21" y="58.40" width="7.06" height="6.50" fill="#848484"/>
<rect x="703.97" y="58.40" width="7.06" height="6.50" fill="#8b8b8b"/>
<rect x="622.85" y="64.60" width="7.06" height="6.50" fill="#6b6b6b"/>
<rect x="629.61" y="64.60" width="7.06" height="6.50" fill="#696969"/>
<rect x="636.37" y="64.60" width="7.06" height="6.50" fill="#686868"/>
<rect x="643.13" y="64.60" width="7.06" height="6.50" fill="#666666"/>
<rect x="649.89" y="64.60" width="7.06" height="6.50" fill="#656565"/>
<rect x="656.65" y="64.60" width="7.06" height="6.50" fill="#676767"/>
<rect x="663.41" y="64.60" width="7.06" height="6.50" fill="#6b6b6b"/>
<rect x="670.17" y="64.60" width="7.06" height="6.50" fill="#6f6f6f"/>
<rect x="676.93" y="64.60" width="7.06" height="6.50" fill="#747474"/>
<rect x="683.69" y="64.60" width="7.06" height="6.50" fill="#7a7a7a"/>
<rect x="690.45" y="64.60" width="7.06" height="6.50" fill="#808080"/>
<rect x="697.21" y="64.60" width="7.06" height="6.50" fill="#878787"/>
<rect x="703.97" y="64.60" width="7.06" height="6.50" fill="#8d8d8d"/>
<rect x="622.85" y="70.80" width="7.06" height="6.50" fill="#707070"/>
<rect x="629.61" y="70.80" width="7.06" height="6.50" fill="#6e6e6e"/>
<rect x="636.37" y="70.80" width="7.06" height="6.50" fill="#6c6c6c"/>
<rect x="643.13" y="70.80" width="7.06" height="6.50" fill="#6b6b6b"/>
<rect x="649.89" y="70.80" width="7.06" height="6.50" fill="#696969"/>
<rect x="656.65" y="70.80" width="7.06" height="6.50" fill="#6b6b6b"/>
<rect x="663.41" y="70.80" width="7.06" height="6.50" fill="#707070"/>
<rect x="670.17" y="70.80" width="7.06" height="6.50" fill="#747474"/>
<rect x="676.93" y="70.80" width="7.06" height="6.50" fill="#797979"/>
<rect x="683.69" y="70.80" width="7.06" height="6.50" fill="#7e7e7e"/>
<rect x="690.45" y="70.80" width="7.06" height="6.50" fill="#848484"/>
<rect x="697.21" y="70.80" width="7.06" height="6.50" fill="#8a8a8a"/>
<rect x="703.97" y="70.80" width="7.06" height="6.50" fill="#8f8f8f"/>
<rect x="622.85" y="77.00" width="7.06" height="6.50" fill="#747474"/>
<rect x="629.61" y="77.00" width="7.06" height="6.50" fill="#737373"/>
<rect x="636.37" y="77.00" width="7.06" height="6.50" fill="#717171"/>
<rect x="643.13" y="77.00" width="7.06" height="6.50" fill="#6f6f6f"/>
<rect x="649.89" y="77.00" width="7.06" height="6.50" fill="#6e6e6e"/>
<rect x="656.65" y="77.00" width="7.06" height="6.50" fill="#707070"/>
<rect x="663.41" y="77.00" width="7.06" height="6.50" fill="#747474"/>
<rect x="670.17" y="77.00" width="7.06" height="6.50" fill="#797979"/>
<rect x="676.93" y="77.00" width="7.06" height="6.50" fill="#7e7e7e"/>
<rect x="683.69" y="77.00" width="7.06" height="6.50" fill="#838383"/>
<rect x="690.45" y="77.00" width="7.06" height="6.50" fill="#888888"/>
<rect x="697.21" y="77.00" width="7.06" height="6.50" fill="#8d8d8d"/>
<rect x="703.97" y="77.00" width="7.06" height="6.50" fill="#929292"/>
<rect x="622.85" y="83.20" width="7.06" height="6.50" fill="#b9b9b9"/>
<rect x="629.61" y="83.20" width="7.06" height="6.50" fill="#b0b0b0"/>
<rect x="636.37" y="83.20" width="7.06" height="6.50" fill="#a8a8a8"/>
<rect x="643.13" y="83.20" width="7.06" height="6.50" fill="#a0a0a0"/>
<rect x="649.89" y="83.20" width="7.06" height="6.50" fill="#979797"/>
<rect x="656.65" y="83.20" width="7.06" height="6.50" fill="#909090"/>
<rect x="663.41" y="83.20" width="7.06" height="6.50" fill="#8a8a8a"/>
<rect x="670.17" y="83.20" width="7.06" height="6.50" fill="#848484"/>
<rect x="676.93" y="83.20" width="7.06" height="6.50" fill="#808080"/>
<rect x="683.69" y="83.20" width="7.06" height="6.50" fill="#7e7e7e"/>
<rect x="690.45" y="83.20" width="7.06" height="6.50" fill="#7d7d7d"/>
<rect x="697.21" y="83.20" width="7.06" height="6.50" fill="#7b7b7b"/>
<rect x="703.97" y="83.20" width="7.06" height="6.50" fill="#797979"/>
<rect x="622.85" y="89.40" width="7.06" height="6.50" fill="#b3b3b3"/>
<rect x="629.61" y="89.40" width="7.06" height="6.50" fill="#aaaaaa"/>
<rect x="636.37" y="89.40" width="7.06" height="6.50" fill="#a2a2a2"/>
<rect x="643.13" y="89.40" width="7.06" height="6.50" fill="#9a9a9a"/>
<rect x="649.89" y="89.40" width="7.06" height="6.50" fill="#929292"/>
<rect x="656.65" y="89.40" width="7.06" height="6.50" fill="#8b8b8b"/>
<rect x="663.41" y="89.40" width="7.06" height="6.50" fill="#848484"/>
<rect x="670.17" y="89.40" width="7.06" height="6.50" fill="#7e7e7e"/>
<rect x="676.93" y="89.40" width="7.06" height="6.50" fill="#7a7a7a"/>
<rect x="683.69" y="89.40" width="7.06" height="6.50" fill="#787878"/>
<rect x="690.45" y="89.40" width="7.06" height="6.50" fill="#767676"/>
<rect x="697.21" y="89.40" width="7.06" height="6.50" fill="#757575"/>
<rect x="703.97" y="89.40" width="7.06" height="6.50" fill="#737373"/>
<rect x="622.85" y="95.60" width="7.06" height="6.50" fill="#acacac"/>
<rect x="629.61" y="95.60" width="7.06" height="6.50" fill="#a4a4a4"/>
<rect x="636.37" y="95.60" width="7.06" height="6.50" fill="#9c9c9c"/>
<rect x="643.13" y="95.60" width="7.06" height="6.50" fill="#949494"/>
<rect x="649.89" y="95.60" width="7.06" height="6.50" fill="#8c8c8c"/>
<rect x="656.65" y="95.60" width="7.06" height="6.50" fill="#858585"/>
<rect x="663.41" y="95.60" width="7.06" height="6.50" fill="#7f7f7f"/>
<rect x="670.17" y="95.60" width="7.06" height="6.50" fill="#787878"/>
<rect x="676.93" y="95.60" width="7.06" height="6.50" fill="#737373"/>
<rect x="683.69" y="95.60" width="7.06" height="6.50" fill="#727272"/>
<rect x="690.45" y="95.60" width="7.06" height="6.50" fill="#707070"/>
<rect x="697.21" y="95.60" width="7.06" height="6.50" fill="#6f6f6f"/>
<rect x="703.97" y="95.60" width="7.06" height="6.50" fill="#6d6d6d"/>
<rect x="622.85" y="101.80" width="7.06" height="6.50" fill="#a6a6a6"/>
<rect x="629.61" y="101.80" width="7.06" height="6.50" fill="#9e9e9e"/>
<rect x="636.37" y="101.80" width="7.06" height="6.50" fill="#969696"/>
<rect x="643.13" y="101.80" width="7.06" height="6.50" fill="#8e8e8e"/>
<rect x="649.89" y="101.80" width="7.06" height="6.50" fill="#868686"/>
<rect x="656.65" y="101.80" width="7.06" height="6.50" fill="#7f7f7f"/>
<rect x="663.41" y="101.80" width="7.06" height="6.50" fill="#797979"/>
<rect x="670.17" y="101.80" width="7.06" height="6.50" fill="#727272"/>
<rect x="676.93" y="101.80" width="7.06" height="6.50" fill="#6d6d6d"/>
<rect x="683.69" y="101.80" width="7.06" height="6.50" fill="#6c6c6c"/>
<rect x="690.45" y="101.80" width="7.06" height="6.50" fill="#6a6a6a"/>
<rect x="697.21" y="101.80" width="7.06" height="6.50" fill="#696969"/>
<rect x="703.97" y="101.80" width="7.06" height="6.50" fill="#676767"/>
<rect x="622.85" y="108.00" width="7.06" height="6.50" fill="#a2a2a2"/>
<rect x="629.61" y="108.00" width="7.06" height="6.50" fill="#9a9a9a"/>
<rect x="636.37" y="108.00" width="7.06" height="6.50" fill="#929292"/>
<rect x="643.13" y="108.00" width="7.06" height="6.50" fill="#8a8a8a"/>
<rect x="649.89" y="108.00" width="7.06" height="6.50" fill="#828282"/>
<rect x="656.65" y="108.00" width="7.06" height="6.50" fill="#7a7a7a"/>
<rect x="663.41" y="108.00" width="7.06" height="6.50" fill="#737373"/>
<rect x="670.17" y="108.00" width="7.06" height="6.50" fill="#6c6c6c"/>
<rect x="676.93" y="108.00" width="7.06" height="6.50" fill="#686868"/>
<rect x="683.69" y="108.00" width="7.06" height="6.50" fill="#676767"/>
<rect x="690.45" y="108.00" width="7.06" height="6.50" fill="#666666"/>
<rect x="697.21" y="108.00" width="7.06" height="6.50" fill="#646464"/>
<rect x="703.97" y="108.00" width="7.06" height="6.50" fill="#636363"/>
<rect x="622.85" y="114.20" width="7.06" height="6.50" fill="#a0a0a0"/>
<rect x="629.61" y="114.20" width="7.06" height="6.50" fill="#979797"/>
<rect x="636.37" y="114.20" width="7.06" height="6.50" fill="#8f8f8f"/>
<rect x="643.13" y="114.20" width="7.06" height="6.50" fill="#868686"/>
<rect x="649.89" y="114.20" width="7.06" height="6.50" fill="#7d7d7d"/>
<rect x="656.65" y="114.20" width="7.06" height="6.50" fill="#767676"/>
<rect x="663.41" y="114.20" width="7.06" height="6.50" fill="#6e6e6e"/>
<rect x="670.17" y="114.20" width="7.06" height="6.50" fill="#676767"/>
<rect x="676.93" y="114.20" width="7.06" height="6.50" fill="#626262"/>
<rect x="683.69" y="114.20" width="7.06" height="6.50" fill="#626262"/>
<rect x="690.45" y="114.20" width="7.06" height="6.50" fill="#616161"/>
<rect x="697.21" y="114.20" width="7.06" height="6.50" fill="#616161"/>
<rect x="703.97" y="114.20" width="7.06" height="6.50" fill="#606060"/>
<rect x="622.85" y="120.40" width="7.06" height="6.50" fill="#9e9e9e"/>
<rect x="629.61" y="120.40" width="7.06" height="6.50" fill="#959595"/>
<rect x="636.37" y="120.40" width="7.06" height="6.50" fill="#8c8c8c"/>
<rect x="643.13" y="120.40" width="7.06" height="6.50" fill="#838383"/>
<rect x="649.89" y="120.40" width="7.06" height="6.50" fill="#7a7a7a"/>
<rect x="656.65" y="120.40" width="7.06" height="6.50" fill="#727272"/>
<rect x="663.41" y="120.40" width="7.06" height="6.50" fill="#6a6a6a"/>
<rect x="670.17" y="120.40" width="7.06" height="6.50" fill="#636363"/>
<rect x="676.93" y="120.40" width="7.06" height="6.50" fill="#5e5e5e"/>
<rect x="683.69" y="120.40" width="7.06" height="6.50" fill="#5e5e5e"/>
<rect x="690.45" y="120.40" width="7.06" height="6.50" fill="#5e5e5e"/>
<rect x="697.21" y="120.40" width="7.06" height="6.50" fill="#5e5e5e"/>
<rect x="703.97" y="120.40" width="7.06" height="6.50" fill="#5e5e5e"/>
<rect x="622.85" y="126.60" width="7.06" height="6.50" fill="#9e9e9e"/>
<rect x="629.61" y="126.60" width="7.06" height="6.50" fill="#949494"/>
<rect x="636.37" y="126.60" width="7.06" height="6.50" fill="#8b8b8b"/>
<rect x="643.13" y="126.60" width="7.06" height="6.50" fill="#828282"/>
<rect x="649.89" y="126.60" width="7.06" height="6.50" fill="#787878"/>
<rect x="656.65" y="126.60" width="7.06" height="6.50" fill="#707070"/>
<rect x="663.41" y="126.60" width="7.06" height="6.50" fill="#686868"/>
<rect x="670.17" y="126.60" width="7.06" height="6.50" fill="#616161"/>
<rect x="676.93" y="126.60" width="7.06" height="6.50" fill="#5c5c5c"/>
<rect x="683.69" y="126.60" width="7.06" height="6.50" fill="#5d5d5d"/>
<rect x="690.45" y="126.60" width="7.06" height="6.50" fill="#5d5d5d"/>
<rect x="697.21" y="126.60" width="7.06" height="6.50" fill="#5e5e5e"/>
<rect x="703.97" y="126.60" width="7.06" height="6.50" fill="#5e5e5e"/>
<rect x="622.85" y="132.80" width="7.06" height="6.50" fill="#9e9e9e"/>
<rect x="629.61" y="132.80" width="7.06" height="6.50" fill="#949494"/>
<rect x="636.37" y="132.80" width="7.06" height="6.50" fill="#8a8a8a"/>
<rect x="643.13" y="132.80" width="7.06" height="6.50" fill="#818181"/>
<rect x="649.89" y="132.80" width="7.06" height="6.50" fill="#777777"/>
<rect x="656.65" y="132.80" width="7.06" height="6.50" fill="#6e6e6e"/>
<rect x="663.41" y="132.80" width="7.06" height="6.50" fill="#666666"/>
<rect x="670.17" y="132.80" width="7.06" height="6.50" fill="#5f5f5f"/>
<rect x="676.93" y="132.80" width="7.06" height="6.50" fill="#5a5a5a"/>
<rect x="683.69" y="132.80" width="7.06" height="6.50" fill="#5b5b5b"/>
<rect x="690.45" y="132.80" width="7.06" height="6.50" fill="#5c5c5c"/>
<rect x="697.21" y="132.80" width="7.06" height="6.50" fill="#5d5d5d"/>
<rect x="703.97" y="132.80" width="7.06" height="6.50" fill="#5e5e5e"/>
<rect x="622.85" y="139.00" width="7.06" height="6.50" fill="#9e9e9e"/>
<rect x="629.61" y="139.00" width="7.06" height="6.50" fill="#939393"/>
<rect x="636.37" y="139.00" width="7.06" height="6.50" fill="#898989"/>
<rect x="643.13" y="139.00" width="7.06" height="6.50" fill="#7f7f7f"/>
<rect x="649.89" y="139.00" width="7.06" height="6.50" fill="#757575"/>
<rect x="656.65" y="139.00" width="7.06" height="6.50" fill="#6d6d6d"/>
<rect x="663.41" y="139.00" width="7.06" height="6.50" fill="#656565"/>
<rect x="670.17" y="139.00" width="7.06" height="6.50" fill="#5d5d5d"/>
<rect x="676.93" y="139.00" width="7.06" height="6.50" fill="#585858"/>
<rect x="683.69" y="139.00" width="7.06" height="6.50" fill="#5a5a5a"/>
<rect x="690.45" y="139.00" width="7.06" height="6.50" fill="#5b5b5b"/>
<rect x="697.21" y="139.00" width="7.06" height="6.50" fill="#5d5d5d"/>
<rect x="703.97" y="139.00" width="7.06" height="6.50" fill="#5e5e5e"/>
<rect x="710.73" y="21.20" width="7.06" height="6.50" fill="#7f7f7f"/>
<rect x="717.48" y="21.20" width="7.06" height="6.50" fill="#797979"/>
<rect x="724.24" y="21.20" width="7.06" height="6.50" fill="#747474"/>
<rect x="731.00" y="21.20" width="7.06" height="6.50" fill="#6e6e6e"/>
<rect x="737.76" y="21.20" width="7.06" height="6.50" fill="#686868"/>
<rect x="744.52" y="21.20" width="7.06" height="6.50" fill="#666666"/>
<rect x="751.28" y="21.20" width="7.06" height="6.50" fill="#666666"/>
<rect x="758.04" y="21.20" width="7.06" height="6.50" fill="#666666"/>
<rect x="764.80" y="21.20" width="7.06" height="6.50" fill="#696969"/>
<rect x="771.56" y="21.20" width="7.06" height="6.50" fill="#6f6f6f"/>
<rect x="778.32" y="21.20" width="7.06" height="6.50" fill="#757575"/>
<rect x="785.08" y="21.20" width="7.06" height="6.50" fill="#7c7c7c"/>
<rect x="791.84" y="21.20" width="7.06" height="6.50" fill="#828282"/>
<rect x="710.73" y="27.40" width="7.06" height="6.50" fill="#808080"/>
<rect x="717.48" y="27.40" width="7.06" height="6.50" fill="#7a7a7a"/>
<rect x="724.24" y="27.40" width="7.06" height="6.50" fill="#747474"/>
<rect x="731.00" y="27.40" width="7.06" height="6.50" fill="#6e6e6e"/>
<rect x="737.76" y="27.40" width="7.06" height="6.50" fill="#686868"/>
<rect x="744.52" y="27.40" width="7.06" height="6.50" fill="#666666"/>
<rect x="751.28" y="27.40" width="7.06" height="6.50" fill="#676767"/>
<rect x="758.04" y="27.40" width="7.06" height="6.50" fill="#676767"/>
<rect x="764.80" y="27.40" width="7.06" height="6.50" fill="#6a6a6a"/>
<rect x="771.56" y="27.40" width="7.06" height="6.50" fill="#707070"/>
<rect x="778.32" y="27.40" width="7.06" height="6.50" fill="#767676"/>
<rect x="785.08" y="27.40" width="7.06" height="6.50" fill="#7d7d7d"/>
<rect x="791.84" y="27.40" width="7.06" height="6.50" fill="#838383"/>
<rect x="710.73" y="33.60" width="7.06" height="6.50" fill="#808080"/>
<rect x="717.48" y="33.60" width="7.06" height="6.50" fill="#7a7a7a"/>
<rect x="724.24" y="33.60" width="7.06" height="6.50" fill="#757575"/>
<rect x="731.00" y="33.60" width="7.06" height="6.50" fill="#6f6f6f"/>
<rect x="737.76" y="33.60" width="7.06" height="6.50" fill="#696969"/>
<rect x="744.52" y="33.60" width="7.06" height="6.50" fill="#676767"/>
<rect x="751.28" y="33.60" width="7.06" height="6.50" fill="#686868"/>
<rect x="758.04" y="33.60" width="7.06" height="6.50" fill="#686868"/>
<rect x="764.80" y="33.60" width="7.06" height="6.50" fill="#6b6b6b"/>
<rect x="771.56" y="33.60" width="7.06" height="6.50" fill="#717171"/>
<rect x="778.32" y="33.60" width="7.06" height="6.50" fill="#777777"/>
<rect x="785.08" y="33.60" width="7.06" height="6.50" fill="#7e7e7e"/>
<rect x="791.84" y="33.60" width="7.06" height="6.50" fill="#848484"/>
<rect x="710.73" y="39.80" width="7.06" height="6.50" fill="#818181"/>
<rect x="717.48" y="39.80" width="7.06" height="6.50" fill="#7b7b7b"/>
<rect x="724.24" y="39.80" width="7.06" height="6.50" fill="#757575"/>
<rect x="731.00" y="39.80" width="7.06" height="6.50" fill="#6f6f6f"/>
<rect x="737.76" y="39.80" width="7.06" height="6.50" fill="#696969"/>
<rect x="744.52" y="39.80" width="7.06" height="6.50" fill="#686868"/>
<rect x="751.28" y="39.80" width="7.06" height="6.50" fill="#686868"/>
<rect x="758.04" y="39.80" width="7.06" height="6.50" fill="#696969"/>
<rect x="764.80" y="39.80" width="7.06" height="6.50" fill="#6c6c6c"/>
<rect x="771.56" y="39.80" width="7.06" height="6.50" fill="#727272"/>
<rect x="778.32" y="39.80" width="7.06" height="6.50" fill="#787878"/>
<rect x="785.08" y="39.80" width="7.06" height="6.50" fill="#7f7f7f"/>
<rect x="791.84" y="39.80" width="7.06" height="6.50" fill="#858585"/>
<rect x="710.73" y="46.00" width="7.06" height="6.50" fill="#848484"/>
<rect x="717.48" y="46.00" width="7.06" height="6.50" fill="#7f7f7f"/>
<rect x="724.24" y="46.00" width="7.06" height="6.50" fill="#7a7a7a"/>
<rect x="731.00" y="46.00" width="7.06" height="6.50" fill="#757575"/>
<rect x="737.76" y="46.00" width="7.06" height="6.50" fill="#707070"/>
<rect x="744.52" y="46.00" width="7.06" height="6.50" fill="#6e6e6e"/>
<rect x="751.28" y="46.00" width="7.06" height="6.50" fill="#6f6f6f"/>
<rect x="758.04" y="46.00" width="7.06" height="6.50" fill="#707070"/>
<rect x="764.80" y="46.00" width="7.06" height="6.50" fill="#737373"/>
<rect x="771.56" y="46.00" width="7.06" height="6.50" fill="#787878"/>
<rect x="778.32" y="46.00" width="7.06" height="6.50" fill="#7d7d7d"/>
<rect x="785.08" y="46.00" width="7.06" height="6.50" fill="#838383"/>
<rect x="791.84" y="46.00" width="7.06" height="6.50" fill="#888888"/>
<rect x="710.73" y="52.20" width="7.06" height="6.50" fill="#898989"/>
<rect x="717.48" y="52.20" width="7.06" height="6.50" fill="#858585"/>
<rect x="724.24" y="52.20" width="7.06" height="6.50" fill="#818181"/>
<rect x="731.00" y="52.20" width="7.06" height="6.50" fill="#7c7c7c"/>
<rect x="737.76" y="52.20" width="7.06" height="6.50" fill="#787878"/>
<rect x="744.52" y="52.20" width="7.06" height="6.50" fill="#777777"/>
<rect x="751.28" y="52.20" width="7.06" height="6.50" fill="#797979"/>
<rect x="758.04" y="52.20" width="7.06" height="6.50" fill="#7a7a7a"/>
<rect x="764.80" y="52.20" width="7.06" height="6.50" fill="#7c7c7c"/>
<rect x="771.56" y="52.20" width="7.06" height="6.50" fill="#808080"/>
<rect x="778.32" y="52.20" width="7.06" height="6.50" fill="#848484"/>
<rect x="785.08" y="52.20" width="7.06" height="6.50" fill="#888888"/>
<rect x="791.84" y="52.20" width="7.06" height="6.50" fill="#8b8b8b"/>
<rect x="710.73" y="58.40" width="7.06" height="6.50" fill="#8d8d8d"/>
<rect x="717.48" y="58.40" width="7.06" height="6.50" fill="#8a8a8a"/>
<rect x="724.24" y="58.40" width="7.06" height="6.50" fill="#878787"/>
<rect x="731.00" y="58.40" width="7.06" height="6.50" fill="#838383"/>
<rect x="737.76" y="58.40" width="7.06" height="6.50" fill="#808080"/>
<rect x="744.52" y="58.40" width="7.06" height="6.50" fill="#808080"/>
<rect x="751.28" y="58.40" width="7.06" height="6.50" fill="#818181"/>
<rect x="758.04" y="58.40" width="7.06" height="6.50" fill="#838383"/>
<rect x="764.80" y="58.40" width="7.06" height="6.50" fill="#858585"/>
<rect x="771.56" y="58.40" width="7.06" height="6.50" fill="#888888"/>
<rect x="778.32" y="58.40" width="7.06" height="6.50" fill="#8b8b8b"/>
<rect x="785.08" y="58.40" width="7.06" height="6.50" fill="#8d8d8d"/>
<rect x="791.84" y="58.40" width="7.06" height="6.50" fill="#909090"/>
<rect x="710.73" y="64.60" width="7.06" height="6.50" fill="#909090"/>
<rect x="717.48" y="64.60" width="7.06" height="6.50" fill="#8e8e8e"/>
<rect x="724.24" y="64.60" width="7.06" height="6.50" fill="#8b8b8b"/>
<rect x="731.00" y="64.60" width="7.06" height="6.50" fill="#898989"/>
<rect x="737.76" y="64.60" width="7.06" height="6.50" fill="#868686"/>
<rect x="744.52" y="64.60" width="7.06" height="6.50" fill="#868686"/>
<rect x="751.28" y="64.60" width="7.06" height="6.50" fill="#888888"/>
<rect x="758.04" y="64.60" width="7.06" height="6.50" fill="#8a8a8a"/>
<rect x="764.80" y="64.60" width="7.06" height="6.50" fill="#8d8d8d"/>
<rect x="771.56" y="64.60" width="7.06" height="6.50" fill="#909090"/>
<rect x="778.32" y="64.60" width="7.06" height="6.50" fill="#939393"/>
<rect x="785.08" y="64.60" width="7.06" height="6.50" fill="#969696"/>
<rect x="791.84" y="64.60" width="7.06" height="6.50" fill="#989898"/>
<rect x="710.73" y="70.80" width="7.06" height="6.50" fill="#949494"/>
<rect x="717.48" y="70.80" width="7.06" height="6.50" fill="#929292"/>
<rect x="724.24" y="70.80" width="7.06" height="6.50" fill="#909090"/>
<rect x="731.00" y="70.80" width="7.06" height="6.50" fill="#8e8e8e"/>
<rect x="737.76" y="70.80" width="7.06" height="6.50" fill="#8d8d8d"/>
<rect x="744.52" y="70.80" width="7.06" height="6.50" fill="#8d8d8d"/>
<rect x="751.28" y="70.80" width="7.06" height="6.50" fill="#909090"/>
<rect x="758.04" y="70.80" width="7.06" height="6.50" fill="#929292"/>
<rect x="764.80" y="70.80" width="7.06" height="6.50" fill="#949494"/>
<rect x="771.56" y="70.80" width="7.06" height="6.50" fill="#989898"/>
<rect x="778.32" y="70.80" width="7.06" height="6.50" fill="#9b9b9b"/>
<rect x="785.08" y="70.80" width="7.06" height="6.50" fill="#9e9e9e"/>
<rect x="791.84" y="70.80" width="7.06" height="6.50" fill="#a1a1a1"/>
<rect x="710.73" y="77.00" width="7.06" height="6.50" fill="#979797"/>
<rect x="717.48" y="77.00" width="7.06" height="6.50" fill="#969696"/>
<rect x="724.24" y="77.00" width="7.06" height="6.50" fill="#959595"/>
<rect x="731.00" y="77.00" width="7.06" height="6.50" fill="#949494"/>
<rect x="737.76" y="77.00" width="7.06" height="6.50" fill="#939393"/>
<rect x="744.52" y="77.00" width="7.06" height="6.50" fill="#949494"/>
<rect x="751.28" y="77.00" width="7.06" height="6.50" fill="#979797"/>
<rect x="758.04" y="77.00" width="7.06" height="6.50" fill="#999999"/>
<rect x="764.80" y="77.00" width="7.06" height="6.50" fill="#9c9c9c"/>
<rect x="771.56" y="77.00" width="7.06" height="6.50" fill="#9f9f9f"/>
<rect x="778.32" y="77.00" width="7.06" height="6.50" fill="#a3a3a3"/>
<rect x="785.08" y="77.00" width="7.06" height="6.50" fill="#a6a6a6"/>
<rect x="791.84" y="77.00" width="7.06" height="6.50" fill="#a9a9a9"/>
<rect x="710.73" y="83.20" width="7.06" height="6.50" fill="#9c9c9c"/>
<rect x="717.48" y="83.20" width="7.06" height="6.50" fill="#969696"/>
<rect x="724.24" y="83.20" width="7.06" height="6.50" fill="#909090"/>
<rect x="731.00" y="83.20" width="7.06" height="6.50" fill="#8a8a8a"/>
<rect x="737.76" y="83.20" width="7.06" height="6.50" fill="#848484"/>
<rect x="744.52" y="83.20" width="7.06" height="6.50" fill="#7e7e7e"/>
<rect x="751.28" y="83.20" width="7.06" height="6.50" fill="#787878"/>
<rect x="758.04" y="83.20" width="7.06" height="6.50" fill="#727272"/>
<rect x="764.80" y="83.20" width="7.06" height="6.50" fill="#6e6e6e"/>
<rect x="771.56" y="83.20" width="7.06" height="6.50" fill="#6e6e6e"/>
<rect x="778.32" y="83.20" width="7.06" height="6.50" fill="#6d6d6d"/>
<rect x="785.08" y="83.20" width="7.06" height="6.50" fill="#6d6d6d"/>
<rect x="791.84" y="83.20" width="7.06" height="6.50" fill="#6c6c6c"/>
<rect x="710.73" y="89.40" width="7.06" height="6.50" fill="#9d9d9d"/>
<rect x="717.48" y="89.40" width="7.06" height="6.50" fill="#969696"/>
<rect x="724.24" y="89.40" width="7.06" height="6.50" fill="#8f8f8f"/>
<rect x="731.00" y="89.40" width="7.06" height="6.50" fill="#888888"/>
<rect x="737.76" y="89.40" width="7.06" height="6.50" fill="#818181"/>
<rect x="744.52" y="89.40" width="7.06" height="6.50" fill="#7b7b7b"/>
<rect x="751.28" y="89.40" width="7.06" height="6.50" fill="#757575"/>
<rect x="758.04" y="89.40" width="7.06" height="6.50" fill="#6f6f6f"/>
<rect x="764.80" y="89.40" width="7.06" height="6.50" fill="#6b6b6b"/>
<rect x="771.56" y="89.40" width="7.06" height="6.50" fill="#6a6a6a"/>
<rect x="778.32" y="89.40" width="7.06" height="6.50" fill="#6a6a6a"/>
<rect x="785.08" y="89.40" width="7.06" height="6.50" fill="#696969"/>
<rect x="791.84" y="89.40" width="7.06" height="6.50" fill="#686868"/>
<rect x="710.73" y="95.60" width="7.06" height="6.50" fill="#9e9e9e"/>
<rect x="717.48" y="95.60" width="7.06" height="6.50" fill="#969696"/>
<rect x="724.24" y="95.60" width="7.06" height="6.50" fill="#8e8e8e"/>
<rect x="731.00" y="95.60" width="7.06" height="6.50" fill="#878787"/>
<rect x="737.76" y="95.60" width="7.06" height="6.50" fill="#7f7f7f"/>
<rect x="744.52" y="95.60" width="7.06" height="6.50" fill="#797979"/>
<rect x="751.28" y="95.60" width="7.06" height="6.50" fill="#727272"/>
<rect x="758.04" y="95.60" width="7.06" height="6.50" fill="#6c6c6c"/>
<rect x="764.80" y="95.60" width="7.06" height="6.50" fill="#686868"/>
<rect x="771.56" y="95.60" width="7.06" height="6.50" fill="#676767"/>
<rect x="778.32" y="95.60" width="7.06" height="6.50" fill="#666666"/>
<rect x="785.08" y="95.60" width="7.06" height="6.50" fill="#656565"/>
<rect x="791.84" y="95.60" width="7.06" height="6.50" fill="#636363"/>
<rect x="710.73" y="101.80" width="7.06" height="6.50" fill="#9f9f9f"/>
<rect x="717.48" y="101.80" width="7.06" height="6.50" fill="#969696"/>
<rect x="724.24" y="101.80" width="7.06" height="6.50" fill="#8e8e8e"/>
<rect x="731.00" y="101.80" width="7.06" height="6.50" fill="#858585"/>
<rect x="737.76" y="101.80" width="7.06" height="6.50" fill="#7d7d7d"/>
<rect x="744.52" y="101.80" width="7.06" height="6.50" fill="#767676"/>
<rect x="751.28" y="101.80" width="7.06" height="6.50" fill="#707070"/>
<rect x="758.04" y="101.80" width="7.06" height="6.50" fill="#696969"/>
<rect x="764.80" y="101.80" width="7.06" height="6.50" fill="#656565"/>
<rect x="771.56" y="101.80" width="7.06" height="6.50" fill="#636363"/>
<rect x="778.32" y="101.80" width="7.06" height="6.50" fill="#626262"/>
<rect x="785.08" y="101.80" width="7.06" height="6.50" fill="#606060"/>
<rect x="791.84" y="101.80" width="7.06" height="6.50" fill="#5f5f5f"/>
<rect x="710.73" y="108.00" width="7.06" height="6.50" fill="#9d9d9d"/>
<rect x="717.48" y="108.00" width="7.06" height="6.50" fill="#959595"/>
<rect x="724.24" y="108.00" width="7.06" height="6.50" fill="#8c8c8c"/>
<rect x="731.00" y="108.00" width="7.06" height="6.50" fill="#838383"/>
<rect x="737.76" y="108.00" width="7.06" height="6.50" fill="#7a7a7a"/>
<rect x="744.52" y="108.00" width="7.06" height="6.50" fill="#737373"/>
<rect x="751.28" y="108.00" width="7.06" height="6.50" fill="#6c6c6c"/>
<rect x="758.04" y="108.00" width="7.06" height="6.50" fill="#666666"/>
<rect x="764.80" y="108.00" width="7.06" height="6.50" fill="#616161"/>
<rect x="771.56" y="108.00" width="7.06" height="6.50" fill="#606060"/>
<rect x="778.32" y="108.00" width="7.06" height="6.50" fill="#5e5e5e"/>
<rect x="785.08" y="108.00" width="7.06" height="6.50" fill="#5c5c5c"/>
<rect x="791.84" y="108.00" width="7.06" height="6.50" fill="#5b5b5b"/>
<rect x="710.73" y="114.20" width="7.06" height="6.50" fill="#9c9c9c"/>
<rect x="717.48" y="114.20" width="7.06" height="6.50" fill="#939393"/>
<rect x="724.24" y="114.20" width="7.06" height="6.50" fill="#8a8a8a"/>
<rect x="731.00" y="114.20" width="7.06" height="6.50" fill="#818181"/>
<rect x="737.76" y="114.20" width="7.06" height="6.50" fill="#787878"/>
<rect x="744.52" y="114.20" width="7.06" height="6.50" fill="#707070"/>
<rect x="751.28" y="114.20" width="7.06" height="6.50" fill="#696969"/>
<rect x="758.04" y="114.20" width="7.06" height="6.50" fill="#626262"/>
<rect x="764.80" y="114.20" width="7.06" height="6.50" fill="#5d5d5d"/>
<rect x="771.56" y="114.20" width="7.06" height="6.50" fill="#5b5b5b"/>
<rect x="778.32" y="114.20" width="7.06" height="6.50" fill="#5a5a5a"/>
<rect x="785.08" y="114.20" width="7.06" height="6.50" fill="#585858"/>
<rect x="791.84" y="114.20" width="7.06" height="6.50" fill="#575757"/>
<rect x="710.73" y="120.40" width="7.06" height="6.50" fill="#9a9a9a"/>
<rect x="717.48" y="120.40" width="7.06" height="6.50" fill="#919191"/>
<rect x="724.24" y="120.40" width="7.06" height="6.50" fill="#888888"/>
<rect x="731.00" y="120.40" width="7.06" height="6.50" fill="#7f7f7f"/>
<rect x="737.76" y="120.40" width="7.06" height="6.50" fill="#767676"/>
<rect x="744.52" y="120.40" width="7.06" height="6.50" fill="#6d6d6d"/>
<rect x="751.28" y="120.40" width="7.06" height="6.50" fill="#666666"/>
<rect x="758.04" y="120.40" width="7.06" height="6.50" fill="#5f5f5f"/>
<rect x="764.80" y="120.40" width="7.06" height="6.50" fill="#595959"/>
<rect x="771.56" y="120.40" width="7.06" height="6.50" fill="#585858"/>
<rect x="778.32" y="120.40" width="7.06" height="6.50" fill="#565656"/>
<rect x="785.08" y="120.40" width="7.06" height="6.50" fill="#555555"/>
<rect x="791.84" y="120.40" width="7.06" height="6.50" fill="#535353"/>
<rect x="710.73" y="126.60" width="7.06" height="6.50" fill="#9b9b9b"/>
<rect x="717.48" y="126.60" width="7.06" height="6.50" fill="#919191"/>
<rect x="724.24" y="126.60" width="7.06" height="6.50" fill="#878787"/>
<rect x="731.00" y="126.60" width="7.06" height="6.50" fill="#7d7d7d"/>
<rect x="737.76" y="126.60" width="7.06" height="6.50" fill="#737373"/>
<rect x="744.52" y="126.60" width="7.06" height="6.50" fill="#6b6b6b"/>
<rect x="751.28" y="126.60" width="7.06" height="6.50" fill="#646464"/>
<rect x="758.04" y="126.60" width="7.06" height="6.50" fill="#5d5d5d"/>
<rect x="764.80" y="126.60" width="7.06" height="6.50" fill="#575757"/>
<rect x="771.56" y="126.60" width="7.06" height="6.50" fill="#565656"/>
<rect x="778.32" y="126.60" width="7.06" height="6.50" fill="#545454"/>
<rect x="785.08" y="126.60" width="7.06" height="6.50" fill="#535353"/>
<rect x="791.84" y="126.60" width="7.06" height="6.50" fill="#515151"/>
<rect x="710.73" y="132.80" width="7.06" height="6.50" fill="#9c9c9c"/>
<rect x="717.48" y="132.80" width="7.06" height="6.50" fill="#919191"/>
<rect x="724.24" y="132.80" width="7.06" height="6.50" fill="#878787"/>
<rect x="731.00" y="132.80" width="7.06" height="6.50" fill="#7c7c7c"/>
<rect x="737.76" y="132.80" width="7.06" height="6.50" fill="#717171"/>
<rect x="744.52" y="132.80" width="7.06" height="6.50" fill="#696969"/>
<rect x="751.28" y="132.80" width="7.06" height="6.50" fill="#616161"/>
<rect x="758.04" y="132.80" width="7.06" height="6.50" fill="#5a5a5a"/>
<rect x="764.80" y="132.80" width="7.06" height="6.50" fill="#555555"/>
<rect x="771.56" y="132.80" width="7.06" height="6.50" fill="#545454"/>
<rect x="778.32" y="132.80" width="7.06" height="6.50" fill="#525252"/>
<rect x="785.08" y="132.80" width="7.06" height="6.50" fill="#515151"/>
<rect x="791.84" y="132.80" width="7.06" height="6.50" fill="#4f4f4f"/>
<rect x="710.73" y="139.00" width="7.06" height="6.50" fill="#9d9d9d"/>
<rect x="717.48" y="139.00" width="7.06" height="6.50" fill="#929292"/>
<rect x="724.24" y="139.00" width="7.06" height="6.50" fill="#868686"/>
<rect x="731.00" y="139.00" width="7.06" height="6.50" fill="#7a7a7a"/>
<rect x="737.76" y="139.00" width="7.06" height="6.50" fill="#6f6f6f"/>
<rect x="744.52" y="139.00" width="7.06" height="6.50" fill="#666666"/>
<rect x="751.28" y="139.00" width="7.06" height="6.50" fill="#5f5f5f"/>
<rect x="758.04" y="139.00" width="7.06" height="6.50" fill="#585858"/>
<rect x="764.80" y="139.00" width="7.06" height="6.50" fill="#535353"/>
<rect x="771.56" y="139.00" width="7.06" height="6.50" fill="#525252"/>
<rect x="778.32" y="139.00" width="7.06" height="6.50" fill="#505050"/>
<rect x="785.08" y="139.00" width="7.06" height="6.50" fill="#4f4f4f"/>
<rect x="791.84" y="139.00" width="7.06" height="6.50" fill="#4d4d4d"/>
<rect x="95.60" y="21.20" width="1.69" height="6.50" fill="#6e6e6e"/>
<rect x="95.60" y="27.40" width="1.69" height="6.50" fill="#6e6e6e"/>
<rect x="95.60" y="33.60" width="1.69" height="6.50" fill="#6e6e6e"/>
<rect x="95.60" y="39.80" width="1.69" height="6.50" fill="#6e6e6e"/>
<rect x="95.60" y="46.00" width="1.69" height="6.50" fill="#6f6f6f"/>
<rect x="95.60" y="52.20" width="1.69" height="6.50" fill="#717171"/>
<rect x="95.60" y="58.40" width="1.69" height="6.50" fill="#727272"/>
<rect x="95.60" y="64.60" width="1.69" height="6.50" fill="#757575"/>
<rect x="95.60" y="70.80" width="1.69" height="6.50" fill="#777777"/>
<rect x="95.60" y="77.00" width="1.69" height="6.50" fill="#7a7a7a"/>
<rect x="181.79" y="21.20" width="1.69" height="6.50" fill="#bababa"/>
<rect x="181.79" y="27.40" width="1.69" height="6.50" fill="#bebebe"/>
<rect x="181.79" y="33.60" width="1.69" height="6.50" fill="#c1c1c1"/>
<rect x="181.79" y="39.80" width="1.69" height="6.50" fill="#c5c5c5"/>
<rect x="181.79" y="46.00" width="1.69" height="6.50" fill="#c8c8c8"/>
<rect x="181.79" y="52.20" width="1.69" height="6.50" fill="#cccccc"/>
<rect x="181.79" y="58.40" width="1.69" height="6.50" fill="#cfcfcf"/>
<rect x="181.79" y="64.60" width="1.69" height="6.50" fill="#cfcfcf"/>
<rect x="181.79" y="70.80" width="1.69" height="6.50" fill="#d0d0d0"/>
<rect x="181.79" y="77.00" width="1.69" height="6.50" fill="#d0d0d0"/>
<rect x="95.60" y="83.20" width="1.69" height="6.50" fill="#acacac"/>
<rect x="95.60" y="89.40" width="1.69" height="6.50" fill="#ababab"/>
<rect x="95.60" y="95.60" width="1.69" height="6.50" fill="#ababab"/>
<rect x="95.60" y="101.80" width="1.69" height="6.50" fill="#aaaaaa"/>
<rect x="95.60" y="108.00" width="1.69" height="6.50" fill="#a9a9a9"/>
<rect x="95.60" y="114.20" width="1.69" height="6.50" fill="#a9a9a9"/>
<rect x="95.60" y="120.40" width="1.69" height="6.50" fill="#a9a9a9"/>
<rect x="95.60" y="126.60" width="1.69" height="6.50" fill="#a9a9a9"/>
<rect x="95.60" y="132.80" width="1.69" height="6.50" fill="#a9a9a9"/>
<rect x="95.60" y="139.00" width="1.69" height="6.50" fill="#a9a9a9"/>
<rect x="181.79" y="83.20" width="1.69" height="6.50" fill="#929292"/>
<rect x="181.79" y="89.40" width="1.69" height="6.50" fill="#8e8e8e"/>
<rect x="181.79" y="95.60" width="1.69" height="6.50" fill="#8a8a8a"/>
<rect x="181.79" y="101.80" width="1.69" height="6.50" fill="#868686"/>
<rect x="181.79" y="108.00" width="1.69" height="6.50" fill="#838383"/>
<rect x="181.79" y="114.20" width="1.69" height="6.50" fill="#808080"/>
<rect x="181.79" y="120.40" width="1.69" height="6.50" fill="#7f7f7f"/>
<rect x="181.79" y="126.60" width="1.69" height="6.50" fill="#848484"/>
<rect x="181.79" y="132.80" width="1.69" height="6.50" fill="#898989"/>
<rect x="181.79" y="139.00" width="1.69" height="6.50" fill="#8d8d8d"/>
<rect x="183.47" y="21.20" width="1.69" height="6.50" fill="#b0b0b0"/>
<rect x="183.47" y="27.40" width="1.69" height="6.50" fill="#b1b1b1"/>
<rect x="183.47" y="33.60" width="1.69" height="6.50" fill="#b1b1b1"/>
<rect x="183.47" y="39.80" width="1.69" height="6.50" fill="#b2b2b2"/>
<rect x="183.47" y="46.00" width="1.69" height="6.50" fill="#b5b5b5"/>
<rect x="183.47" y="52.20" width="1.69" height="6.50" fill="#b8b8b8"/>
<rect x="183.47" y="58.40" width="1.69" height="6.50" fill="#bbbbbb"/>
<rect x="183.47" y="64.60" width="1.69" height="6.50" fill="#bcbcbc"/>
<rect x="183.47" y="70.80" width="1.69" height="6.50" fill="#bdbdbd"/>
<rect x="183.47" y="77.00" width="1.69" height="6.50" fill="#bebebe"/>
<rect x="269.66" y="21.20" width="1.69" height="6.50" fill="#bfbfbf"/>
<rect x="269.66" y="27.40" width="1.69" height="6.50" fill="#bfbfbf"/>
<rect x="269.66" y="33.60" width="1.69" height="6.50" fill="#bfbfbf"/>
<rect x="269.66" y="39.80" width="1.69" height="6.50" fill="#bfbfbf"/>
<rect x="269.66" y="46.00" width="1.69" height="6.50" fill="#c0c0c0"/>
<rect x="269.66" y="52.20" width="1.69" height="6.50" fill="#c2c2c2"/>
<rect x="269.66" y="58.40" width="1.69" height="6.50" fill="#c4c4c4"/>
<rect x="269.66" y="64.60" width="1.69" height="6.50" fill="#c5c5c5"/>
<rect x="269.66" y="70.80" width="1.69" height="6.50" fill="#c7c7c7"/>
<rect x="269.66" y="77.00" width="1.69" height="6.50" fill="#c9c9c9"/>
<rect x="183.47" y="83.20" width="1.69" height="6.50" fill="#ababab"/>
<rect x="183.47" y="89.40" width="1.69" height="6.50" fill="#ababab"/>
<rect x="183.47" y="95.60" width="1.69" height="6.50" fill="#ababab"/>
<rect x="183.47" y="101.80" width="1.69" height="6.50" fill="#ababab"/>
<rect x="183.47" y="108.00" width="1.69" height="6.50" fill="#a9a9a9"/>
<rect x="183.47" y="114.20" width="1.69" height="6.50" fill="#a7a7a7"/>
<rect x="183.47" y="120.40" width="1.69" height="6.50" fill="#a4a4a4"/>
<rect x="183.47" y="126.60" width="1.69" height="6.50" fill="#a3a3a3"/>
<rect x="183.47" y="132.80" width="1.69" height="6.50" fill="#a2a2a2"/>
<rect x="183.47" y="139.00" width="1.69" height="6.50" fill="#a0a0a0"/>
<rect x="269.66" y="83.20" width="1.69" height="6.50" fill="#8c8c8c"/>
<rect x="269.66" y="89.40" width="1.69" height="6.50" fill="#8a8a8a"/>
<rect x="269.66" y="95.60" width="1.69" height="6.50" fill="#888888"/>
<rect x="269.66" y="101.80" width="1.69" height="6.50" fill="#868686"/>
<rect x="269.66" y="108.00" width="1.69" height="6.50" fill="#828282"/>
<rect x="269.66" y="114.20" width="1.69" height="6.50" fill="#7f7f7f"/>
<rect x="269.66" y="120.40" width="1.69" height="6.50" fill="#7b7b7b"/>
<rect x="269.66" y="126.60" width="1.69" height="6.50" fill="#797979"/>
<rect x="269.66" y="132.80" width="1.69" height="6.50" fill="#777777"/>
<rect x="269.66" y="139.00" width="1.69" height="6.50" fill="#757575"/>
<rect x="271.35" y="21.20" width="1.69" height="6.50" fill="#adadad"/>
<rect x="271.35" y="27.40" width="1.69" height="6.50" fill="#aaaaaa"/>
<rect x="271.35" y="33.60" width="1.69" height="6.50" fill="#a8a8a8"/>
<rect x="271.35" y="39.80" width="1.69" height="6.50" fill="#a6a6a6"/>
<rect x="271.35" y="46.00" width="1.69" height="6.50" fill="#a5a5a5"/>
<rect x="271.35" y="52.20" width="1.69" height="6.50" fill="#a6a6a6"/>
<rect x="271.35" y="58.40" width="1.69" height="6.50" fill="#a8a8a8"/>
<rect x="271.35" y="64.60" width="1.69" height="6.50" fill="#b1b1b1"/>
<rect x="271.35" y="70.80" width="1.69" height="6.50" fill="#bababa"/>
<rect x="271.35" y="77.00" width="1.69" height="6.50" fill="#c3c3c3"/>
<rect x="357.54" y="21.20" width="1.69" height="6.50" fill="#c8c8c8"/>
<rect x="357.54" y="27.40" width="1.69" height="6.50" fill="#c9c9c9"/>
<rect x="357.54" y="33.60" width="1.69" height="6.50" fill="#cbcbcb"/>
<rect x="357.54" y="39.80" width="1.69" height="6.50" fill="#cccccc"/>
<rect x="357.54" y="46.00" width="1.69" height="6.50" fill="#cccccc"/>
<rect x="357.54" y="52.20" width="1.69" height="6.50" fill="#cccccc"/>
<rect x="357.54" y="58.40" width="1.69" height="6.50" fill="#cccccc"/>
<rect x="357.54" y="64.60" width="1.69" height="6.50" fill="#cecece"/>
<rect x="357.54" y="70.80" width="1.69" height="6.50" fill="#d1d1d1"/>
<rect x="357.54" y="77.00" width="1.69" height="6.50" fill="#d3d3d3"/>
<rect x="271.35" y="83.20" width="1.69" height="6.50" fill="#c6c6c6"/>
<rect x="271.35" y="89.40" width="1.69" height="6.50" fill="#c5c5c5"/>
<rect x="271.35" y="95.60" width="1.69" height="6.50" fill="#c4c4c4"/>
<rect x="271.35" y="101.80" width="1.69" height="6.50" fill="#c3c3c3"/>
<rect x="271.35" y="108.00" width="1.69" height="6.50" fill="#c2c2c2"/>
<rect x="271.35" y="114.20" width="1.69" height="6.50" fill="#c0c0c0"/>
<rect x="271.35" y="120.40" width="1.69" height="6.50" fill="#bebebe"/>
<rect x="271.35" y="126.60" width="1.69" height="6.50" fill="#bdbdbd"/>
<rect x="271.35" y="132.80" width="1.69" height="6.50" fill="#bcbcbc"/>
<rect x="271.35" y="139.00" width="1.69" height="6.50" fill="#bbbbbb"/>
<rect x="357.54" y="83.20" width="1.69" height="6.50" fill="#bfbfbf"/>
<rect x="357.54" y="89.40" width="1.69" height="6.50" fill="#bebebe"/>
<rect x="357.54" y="95.60" width="1.69" height="6.50" fill="#bcbcbc"/>
<rect x="357.54" y="101.80" width="1.69" height="6.50" fill="#bababa"/>
<rect x="357.54" y="108.00" width="1.69" height="6.50" fill="#b8b8b8"/>
<rect x="357.54" y="114.20" width="1.69" height="6.50" fill="#b7b7b7"/>
<rect x="357.54" y="120.40" width="1.69" height="6.50" fill="#b6b6b6"/>
<rect x="357.54" y="126.60" width="1.69" height="6.50" fill="#b5b5b5"/>
<rect x="357.54" y="132.80" width="1.69" height="6.50" fill="#b5b5b5"/>
<rect x="357.54" y="139.00" width="1.69" height="6.50" fill="#b4b4b4"/>
<rect x="359.23" y="21.20" width="1.69" height="6.50" fill="#979797"/>
<rect x="359.23" y="27.40" width="1.69" height="6.50" fill="#979797"/>
<rect x="359.23" y="33.60" width="1.69" height="6.50" fill="#979797"/>
<rect x="359.23" y="39.80" width="1.69" height="6.50" fill="#979797"/>
<rect x="359.23" y="46.00" width="1.69" height="6.50" fill="#989898"/>
<rect x="359.23" y="52.20" width="1.69" height="6.50" fill="#9a9a9a"/>
<rect x="359.23" y="58.40" width="1.69" height="6.50" fill="#9d9d9d"/>
<rect x="359.23" y="64.60" width="1.69" height="6.50" fill="#a3a3a3"/>
<rect x="359.23" y="70.80" width="1.69" height="6.50" fill="#a8a8a8"/>
<rect x="359.23" y="77.00" width="1.69" height="6.50" fill="#aeaeae"/>
<rect x="445.41" y="21.20" width="1.69" height="6.50" fill="#a4a4a4"/>
<rect x="445.41" y="27.40" width="1.69" height="6.50" fill="#a8a8a8"/>
<rect x="445.41" y="33.60" width="1.69" height="6.50" fill="#ababab"/>
<rect x="445.41" y="39.80" width="1.69" height="6.50" fill="#afafaf"/>
<rect x="445.41" y="46.00" width="1.69" height="6.50" fill="#b2b2b2"/>
<rect x="445.41" y="52.20" width="1.69" height="6.50" fill="#b4b4b4"/>
<rect x="445.41" y="58.40" width="1.69" height="6.50" fill="#b7b7b7"/>
<rect x="445.41" y="64.60" width="1.69" height="6.50" fill="#bababa"/>
<rect x="445.41" y="70.80" width="1.69" height="6.50" fill="#bdbdbd"/>
<rect x="445.41" y="77.00" width="1.69" height="6.50" fill="#c0c0c0"/>
<rect x="359.23" y="83.20" width="1.69" height="6.50" fill="#d1d1d1"/>
<rect x="359.23" y="89.40" width="1.69" height="6.50" fill="#cecece"/>
<rect x="359.23" y="95.60" width="1.69" height="6.50" fill="#cccccc"/>
<rect x="359.23" y="101.80" width="1.69" height="6.50" fill="#c9c9c9"/>
<rect x="359.23" y="108.00" width="1.69" height="6.50" fill="#c7c7c7"/>
<rect x="359.23" y="114.20" width="1.69" height="6.50" fill="#c5c5c5"/>
<rect x="359.23" y="120.40" width="1.69" height="6.50" fill="#c3c3c3"/>
<rect x="359.23" y="126.60" width="1.69" height="6.50" fill="#c1c1c1"/>
<rect x="359.23" y="132.80" width="1.69" height="6.50" fill="#bebebe"/>
<rect x="359.23" y="139.00" width="1.69" height="6.50" fill="#bcbcbc"/>
<rect x="445.41" y="83.20" width="1.69" height="6.50" fill="#9e9e9e"/>
<rect x="445.41" y="89.40" width="1.69" height="6.50" fill="#9b9b9b"/>
<rect x="445.41" y="95.60" width="1.69" height="6.50" fill="#989898"/>
<rect x="445.41" y="101.80" width="1.69" height="6.50" fill="#959595"/>
<rect x="445.41" y="108.00" width="1.69" height="6.50" fill="#919191"/>
<rect x="445.41" y="114.20" width="1.69" height="6.50" fill="#8e8e8e"/>
<rect x="445.41" y="120.40" width="1.69" height="6.50" fill="#8a8a8a"/>
<rect x="445.41" y="126.60" width="1.69" height="6.50" fill="#888888"/>
<rect x="445.41" y="132.80" width="1.69" height="6.50" fill="#858585"/>
<rect x="445.41" y="139.00" width="1.69" height="6.50" fill="#838383"/>
<rect x="447.10" y="21.20" width="1.69" height="6.50" fill="#acacac"/>
<rect x="447.10" y="27.40" width="1.69" height="6.50" fill="#acacac"/>
<rect x="447.10" y="33.60" width="1.69" height="6.50" fill="#adadad"/>
<rect x="447.10" y="39.80" width="1.69" height="6.50" fill="#adadad"/>
<rect x="447.10" y="46.00" width="1.69" height="6.50" fill="#afafaf"/>
<rect x="447.10" y="52.20" width="1.69" height="6.50" fill="#b1b1b1"/>
<rect x="447.10" y="58.40" width="1.69" height="6.50" fill="#b3b3b3"/>
<rect x="447.10" y="64.60" width="1.69" height="6.50" fill="#b9b9b9"/>
<rect x="447.10" y="70.80" width="1.69" height="6.50" fill="#bebebe"/>
<rect x="447.10" y="77.00" width="1.69" height="6.50" fill="#c3c3c3"/>
<rect x="533.29" y="21.20" width="1.69" height="6.50" fill="#aeaeae"/>
<rect x="533.29" y="27.40" width="1.69" height="6.50" fill="#b1b1b1"/>
<rect x="533.29" y="33.60" width="1.69" height="6.50" fill="#b3b3b3"/>
<rect x="533.29" y="39.80" width="1.69" height="6.50" fill="#b5b5b5"/>
<rect x="533.29" y="46.00" width="1.69" height="6.50" fill="#b9b9b9"/>
<rect x="533.29" y="52.20" width="1.69" height="6.50" fill="#bcbcbc"/>
<rect x="533.29" y="58.40" width="1.69" height="6.50" fill="#c2c2c2"/>
<rect x="533.29" y="64.60" width="1.69" height="6.50" fill="#cbcbcb"/>
<rect x="533.29" y="70.80" width="1.69" height="6.50" fill="#d5d5d5"/>
<rect x="533.29" y="77.00" width="1.69" height="6.50" fill="#dfdfdf"/>
<rect x="447.10" y="83.20" width="1.69" height="6.50" fill="#aaaaaa"/>
<rect x="447.10" y="89.40" width="1.69" height="6.50" fill="#a6a6a6"/>
<rect x="447.10" y="95.60" width="1.69" height="6.50" fill="#a2a2a2"/>
<rect x="447.10" y="101.80" width="1.69" height="6.50" fill="#9e9e9e"/>
<rect x="447.10" y="108.00" width="1.69" height="6.50" fill="#9a9a9a"/>
<rect x="447.10" y="114.20" width="1.69" height="6.50" fill="#959595"/>
<rect x="447.10" y="120.40" width="1.69" height="6.50" fill="#919191"/>
<rect x="447.10" y="126.60" width="1.69" height="6.50" fill="#8e8e8e"/>
<rect x="447.10" y="132.80" width="1.69" height="6.50" fill="#8c8c8c"/>
<rect x="447.10" y="139.00" width="1.69" height="6.50" fill="#898989"/>
<rect x="533.29" y="83.20" width="1.69" height="6.50" fill="#7e7e7e"/>
<rect x="533.29" y="89.40" width="1.69" height="6.50" fill="#7e7e7e"/>
<rect x="533.29" y="95.60" width="1.69" height="6.50" fill="#7e7e7e"/>
<rect x="533.29" y="101.80" width="1.69" height="6.50" fill="#7e7e7e"/>
<rect x="533.29" y="108.00" width="1.69" height="6.50" fill="#7d7d7d"/>
<rect x="533.29" y="114.20" width="1.69" height="6.50" fill="#7c7c7c"/>
<rect x="533.29" y="120.40" width="1.69" height="6.50" fill="#7c7c7c"/>
<rect x="533.29" y="126.60" width="1.69" height="6.50" fill="#7b7b7b"/>
<rect x="533.29" y="132.80" width="1.69" height="6.50" fill="#7b7b7b"/>
<rect x="533.29" y="139.00" width="1.69" height="6.50" fill="#7a7a7a"/>
<rect x="534.98" y="21.20" width="1.69" height="6.50" fill="#888888"/>
<rect x="534.98" y="27.40" width="1.69" height="6.50" fill="#888888"/>
<rect x="534.98" y="33.60" width="1.69" height="6.50" fill="#898989"/>
<rect x="534.98" y="39.80" width="1.69" height="6.50" fill="#898989"/>
<rect x="534.98" y="46.00" width="1.69" height="6.50" fill="#8a8a8a"/>
<rect x="534.98" y="52.20" width="1.69" height="6.50" fill="#8c8c8c"/>
<rect x="534.98" y="58.40" width="1.69" height="6.50" fill="#8e8e8e"/>
<rect x="534.98" y="64.60" width="1.69" height="6.50" fill="#919191"/>
<rect x="534.98" y="70.80" width="1.69" height="6.50" fill="#949494"/>
<rect x="534.98" y="77.00" width="1.69" height="6.50" fill="#979797"/>
<rect x="621.16" y="21.20" width="1.69" height="6.50" fill="#969696"/>
<rect x="621.16" y="27.40" width="1.69" height="6.50" fill="#989898"/>
<rect x="621.16" y="33.60" width="1.69" height="6.50" fill="#9b9b9b"/>
<rect x="621.16" y="39.80" width="1.69" height="6.50" fill="#9d9d9d"/>
<rect x="621.16" y="46.00" width="1.69" height="6.50" fill="#9e9e9e"/>
<rect x="621.16" y="52.20" width="1.69" height="6.50" fill="#a0a0a0"/>
<rect x="621.16" y="58.40" width="1.69" height="6.50" fill="#a1a1a1"/>
<rect x="621.16" y="64.60" width="1.69" height="6.50" fill="#a2a2a2"/>
<rect x="621.16" y="70.80" width="1.69" height="6.50" fill="#a3a3a3"/>
<rect x="621.16" y="77.00" width="1.69" height="6.50" fill="#a4a4a4"/>
<rect x="534.98" y="83.20" width="1.69" height="6.50" fill="#dbdbdb"/>
<rect x="534.98" y="89.40" width="1.69" height="6.50" fill="#dadada"/>
<rect x="534.98" y="95.60" width="1.69" height="6.50" fill="#d8d8d8"/>
<rect x="534.98" y="101.80" width="1.69" height="6.50" fill="#d7d7d7"/>
<rect x="534.98" y="108.00" width="1.69" height="6.50" fill="#d4d4d4"/>
<rect x="534.98" y="114.20" width="1.69" height="6.50" fill="#d2d2d2"/>
<rect x="534.98" y="120.40" width="1.69" height="6.50" fill="#cfcfcf"/>
<rect x="534.98" y="126.60" width="1.69" height="6.50" fill="#cccccc"/>
<rect x="534.98" y="132.80" width="1.69" height="6.50" fill="#c8c8c8"/>
<rect x="534.98" y="139.00" width="1.69" height="6.50" fill="#c5c5c5"/>
<rect x="621.16" y="83.20" width="1.69" height="6.50" fill="#989898"/>
<rect x="621.16" y="89.40" width="1.69" height="6.50" fill="#959595"/>
<rect x="621.16" y="95.60" width="1.69" height="6.50" fill="#919191"/>
<rect x="621.16" y="101.80" width="1.69" height="6.50" fill="#8e8e8e"/>
<rect x="621.16" y="108.00" width="1.69" height="6.50" fill="#8a8a8a"/>
<rect x="621.16" y="114.20" width="1.69" height="6.50" fill="#878787"/>
<rect x="621.16" y="120.40" width="1.69" height="6.50" fill="#858585"/>
<rect x="621.16" y="126.60" width="1.69" height="6.50" fill="#858585"/>
<rect x="621.16" y="132.80" width="1.69" height="6.50" fill="#868686"/>
<rect x="621.16" y="139.00" width="1.69" height="6.50" fill="#868686"/>
<rect x="622.85" y="21.20" width="1.69" height="6.50" fill="#7d7d7d"/>
<rect x="622.85" y="27.40" width="1.69" height="6.50" fill="#7e7e7e"/>
<rect x="622.85" y="33.60" width="1.69" height="6.50" fill="#7e7e7e"/>
<rect x="622.85" y="39.80" width="1.69" height="6.50" fill="#7e7e7e"/>
<rect x="622.85" y="46.00" width="1.69" height="6.50" fill="#7f7f7f"/>
<rect x="622.85" y="52.20" width="1.69" height="6.50" fill="#7f7f7f"/>
<rect x="622.85" y="58.40" width="1.69" height="6.50" fill="#818181"/>
<rect x="622.85" y="64.60" width="1.69" height="6.50" fill="#858585"/>
<rect x="622.85" y="70.80" width="1.69" height="6.50" fill="#8a8a8a"/>
<rect x="622.85" y="77.00" width="1.69" height="6.50" fill="#8e8e8e"/>
<rect x="709.04" y="21.20" width="1.69" height="6.50" fill="#aeaeae"/>
<rect x="709.04" y="27.40" width="1.69" height="6.50" fill="#afafaf"/>
<rect x="709.04" y="33.60" width="1.69" height="6.50" fill="#afafaf"/>
<rect x="709.04" y="39.80" width="1.69" height="6.50" fill="#b0b0b0"/>
<rect x="709.04" y="46.00" width="1.69" height="6.50" fill="#b1b1b1"/>
<rect x="709.04" y="52.20" width="1.69" height="6.50" fill="#b3b3b3"/>
<rect x="709.04" y="58.40" width="1.69" height="6.50" fill="#b4b4b4"/>
<rect x="709.04" y="64.60" width="1.69" height="6.50" fill="#b6b6b6"/>
<rect x="709.04" y="70.80" width="1.69" height="6.50" fill="#b8b8b8"/>
<rect x="709.04" y="77.00" width="1.69" height="6.50" fill="#bababa"/>
<rect x="622.85" y="83.20" width="1.69" height="6.50" fill="#d4d4d4"/>
<rect x="622.85" y="89.40" width="1.69" height="6.50" fill="#cecece"/>
<rect x="622.85" y="95.60" width="1.69" height="6.50" fill="#c7c7c7"/>
<rect x="622.85" y="101.80" width="1.69" height="6.50" fill="#c1c1c1"/>
<rect x="622.85" y="108.00" width="1.69" height="6.50" fill="#bebebe"/>
<rect x="622.85" y="114.20" width="1.69" height="6.50" fill="#bbbbbb"/>
<rect x="622.85" y="120.40" width="1.69" height="6.50" fill="#bababa"/>
<rect x="622.85" y="126.60" width="1.69" height="6.50" fill="#bababa"/>
<rect x="622.85" y="132.80" width="1.69" height="6.50" fill="#bababa"/>
<rect x="622.85" y="139.00" width="1.69" height="6.50" fill="#bababa"/>
<rect x="709.04" y="83.20" width="1.69" height="6.50" fill="#9f9f9f"/>
<rect x="709.04" y="89.40" width="1.69" height="6.50" fill="#999999"/>
<rect x="709.04" y="95.60" width="1.69" height="6.50" fill="#939393"/>
<rect x="709.04" y="101.80" width="1.69" height="6.50" fill="#8d8d8d"/>
<rect x="709.04" y="108.00" width="1.69" height="6.50" fill="#898989"/>
<rect x="709.04" y="114.20" width="1.69" height="6.50" fill="#878787"/>
<rect x="709.04" y="120.40" width="1.69" height="6.50" fill="#858585"/>
<rect x="709.04" y="126.60" width="1.69" height="6.50" fill="#858585"/>
<rect x="709.04" y="132.80" width="1.69" height="6.50" fill="#858585"/>
<rect x="709.04" y="139.00" width="1.69" height="6.50" fill="#858585"/>
<rect x="710.73" y="21.20" width="1.69" height="6.50" fill="#a9a9a9"/>
<rect x="710.73" y="27.40" width="1.69" height="6.50" fill="#a9a9a9"/>
<rect x="710.73" y="33.60" width="1.69" height="6.50" fill="#aaaaaa"/>
<rect x="710.73" y="39.80" width="1.69" height="6.50" fill="#aaaaaa"/>
<rect x="710.73" y="46.00" width="1.69" height="6.50" fill="#adadad"/>
<rect x="710.73" y="52.20" width="1.69" height="6.50" fill="#b1b1b1"/>
<rect x="710.73" y="58.40" width="1.69" height="6.50" fill="#b5b5b5"/>
<rect x="710.73" y="64.60" width="1.69" height="6.50" fill="#b8b8b8"/>
<rect x="710.73" y="70.80" width="1.69" height="6.50" fill="#bbbbbb"/>
<rect x="710.73" y="77.00" width="1.69" height="6.50" fill="#bebebe"/>
<rect x="796.91" y="21.20" width="1.69" height="6.50" fill="#9f9f9f"/>
<rect x="796.91" y="27.40" width="1.69" height="6.50" fill="#a0a0a0"/>
<rect x="796.91" y="33.60" width="1.69" height="6.50" fill="#a1a1a1"/>
<rect x="796.91" y="39.80" width="1.69" height="6.50" fill="#a2a2a2"/>
<rect x="796.91" y="46.00" width="1.69" height="6.50" fill="#a4a4a4"/>
<rect x="796.91" y="52.20" width="1.69" height="6.50" fill="#a7a7a7"/>
<rect x="796.91" y="58.40" width="1.69" height="6.50" fill="#ababab"/>
<rect x="796.91" y="64.60" width="1.69" height="6.50" fill="#b3b3b3"/>
<rect x="796.91" y="70.80" width="1.69" height="6.50" fill="#bcbcbc"/>
<rect x="796.91" y="77.00" width="1.69" height="6.50" fill="#c4c4c4"/>
<rect x="710.73" y="83.20" width="1.69" height="6.50" fill="#bfbfbf"/>
<rect x="710.73" y="89.40" width="1.69" height="6.50" fill="#c0c0c0"/>
<rect x="710.73" y="95.60" width="1.69" height="6.50" fill="#c1c1c1"/>
<rect x="710.73" y="101.80" width="1.69" height="6.50" fill="#c3c3c3"/>
<rect x="710.73" y="108.00" width="1.69" height="6.50" fill="#c2c2c2"/>
<rect x="710.73" y="114.20" width="1.69" height="6.50" fill="#c0c0c0"/>
<rect x="710.73" y="120.40" width="1.69" height="6.50" fill="#bfbfbf"/>
<rect x="710.73" y="126.60" width="1.69" height="6.50" fill="#c0c0c0"/>
<rect x="710.73" y="132.80" width="1.69" height="6.50" fill="#c1c1c1"/>
<rect x="710.73" y="139.00" width="1.69" height="6.50" fill="#c3c3c3"/>
<rect x="796.91" y="83.20" width="1.69" height="6.50" fill="#7f7f7f"/>
<rect x="796.91" y="89.40" width="1.69" height="6.50" fill="#7b7b7b"/>
<rect x="796.91" y="95.60" width="1.69" height="6.50" fill="#767676"/>
<rect x="796.91" y="101.80" width="1.69" height="6.50" fill="#717171"/>
<rect x="796.91" y="108.00" width="1.69" height="6.50" fill="#6d6d6d"/>
<rect x="796.91" y="114.20" width="1.69" height="6.50" fill="#696969"/>
<rect x="796.91" y="120.40" width="1.69" height="6.50" fill="#656565"/>
<rect x="796.91" y="126.60" width="1.69" height="6.50" fill="#636363"/>
<rect x="796.91" y="132.80" width="1.69" height="6.50" fill="#616161"/>
<rect x="796.91" y="139.00" width="1.69" height="6.50" fill="#5f5f5f"/>
<rect x="95.60" y="82.42" width="87.88" height="1.55" fill="#9d9d9d"/>
<rect x="183.47" y="82.42" width="87.88" height="1.55" fill="#a6a6a6"/>
<rect x="271.35" y="82.42" width="87.88" height="1.55" fill="#bfbfbf"/>
<rect x="359.23" y="82.42" width="87.88" height="1.55" fill="#a2a2a2"/>
<rect x="447.10" y="82.42" width="87.88" height="1.55" fill="#d2d2d2"/>
<rect x="534.98" y="82.42" width="87.88" height="1.55" fill="#b2b2b2"/>
<rect x="622.85" y="82.42" width="87.88" height="1.55" fill="#9f9f9f"/>
<rect x="710.73" y="82.42" width="87.88" height="1.55" fill="#b9b9b9"/>
</g></g>
<path class="ax" d="M798.5 21V146"/>
<text class="t" x="95.7" y="17.7">Vcal threshold</text>
<text class="t" x="820.3" y="17.7" text-anchor="end">M0125-060712.17:49T-10a</text>
<path class="ax" d="M95.5 21.5V145.5H798.5"/>
<text class="l" x="91" y="149.8" text-anchor="end">0</text>
<path class="ax" d="M95 129.5H117"/>
<text class="l" x="91" y="134.3" text-anchor="end">20</text>
<path class="ax" d="M95 114.5H117"/>
<text class="l" x="91" y="118.8" text-anchor="end">40</text>
<path class="ax" d="M95 98.5H117"/>
<text class="l" x="91" y="103.3" text-anchor="end">60</text>
<path class="ax" d="M95 83.5H117"/>
<text class="l" x="91" y="87.8" text-anchor="end">80</text>
<path class="ax" d="M95 67.5H117"/>
<text class="l" x="91" y="72.3" text-anchor="end">100</text>
<path class="ax" d="M95 52.5H117"/>
<text class="l" x="91" y="56.8" text-anchor="end">120</text>
<path class="ax" d="M95 36.5H117"/>
<text class="l" x="91" y="41.3" text-anchor="end">140</text>
<path class="ax" d="M95 21.5H117"/>
<text class="l" x="91" y="25.8" text-anchor="end">160</text>
<text class="l" x="95.2" y="155" text-anchor="middle">0</text>
<path class="ax" d="M179.5 145.5V141.0"/>
<text class="l" x="179.7" y="155" text-anchor="middle">50</text>
<path class="ax" d="M264.5 145.5V141.0"/>
<text class="l" x="264.2" y="155" text-anchor="middle">100</text>
<path class="ax" d="M348.5 145.5V141.0"/>
<text class="l" x="348.7" y="155" text-anchor="middle">150</text>
<path class="ax" d="M433.5 145.5V141.0"/>
<text class="l" x="433.2" y="155" text-anchor="middle">200</text>
<path class="ax" d="M517.5 145.5V141.0"/>
<text class="l" x="517.7" y="155" text-anchor="middle">250</text>
<path class="ax" d="M602.5 145.5V141.0"/>
<text class="l" x="602.2" y="155" text-anchor="middle">300</text>
<path class="ax" d="M686.5 145.5V141.0"/>
<text class="l" x="686.7" y="155" text-anchor="middle">350</text>
<path class="ax" d="M771.5 145.5V141.0"/>
<text class="l" x="771.2" y="155" text-anchor="middle">400</text>
<rect x="802" y="138" width="41" height="7" fill="#6300ff"/>
<rect x="802" y="132" width="41" height="6" fill="#3300ff"/>
<rect x="802" y="126" width="41" height="6" fill="#0014ff"/>
<rect x="802" y="120" width="41" height="6" fill="#0044ff"/>
<rect x="802" y="114" width="41" height="6" fill="#008bff"/>
<rect x="802" y="107" width="41" height="7" fill="#00bbff"/>
<rect x="802" y="101" width="41" height="6" fill="#00fffc"/>
<rect x="802" y="95" width="41" height="6" fill="#00ffcc"/>
<rect x="802" y="89" width="41" height="6" fill="#00ff85"/>
<rect x="802" y="83" width="41" height="6" fill="#00ff55"/>
<rect x="802" y="76" width="41" height="7" fill="#00ff0e"/>
<rect x="802" y="70" width="41" height="6" fill="#22ff00"/>
<rect x="802" y="64" width="41" height="6" fill="#69ff00"/>
<rect x="802" y="58" width="41" height="6" fill="#99ff00"/>
<rect x="802" y="52" width="41" height="6" fill="#e0ff00"/>
<rect x="802" y="45" width="41" height="7" fill="#ffee00"/>
<rect x="802" y="39" width="41" height="6" fill="#ffa700"/>
<rect x="802" y="33" width="41" height="6" fill="#ff7700"/>
<rect x="802" y="27" width="41" height="6" fill="#ff3000"/>
<rect x="802" y="21" width="41" height="6" fill="#ff0000"/>
<path class="ax" d="M842.5 21V146"/>
<path class="ax" d="M821 21.5H843"/>
<text class="z" x="846.3" y="23">130</text>
<path class="ax" d="M821 43.5H843"/>
<text class="z" x="846.3" y="45">120</text>
<path class="ax" d="M821 66.5H843"/>
<text class="z" x="846.3" y="68">110</text>
<path class="ax" d="M821 88.5H843"/>
<text class="z" x="846.3" y="90">100</text>
<path class="ax" d="M821 111.5H843"/>
<text class="z" x="846.3" y="113">90</text>
<path class="ax" d="M821 133.5H843"/>
<text class="z" x="846.3" y="135">80</text>
<path class="ax" d="M95.5 189.5H798.5V313.5"/>
<text class="t" x="95.7" y="186.4">Bump bonding map</text>
<path class="ax" d="M95.5 189.5V313.5H798.5"/>
<text class="l" x="91" y="317.8" text-anchor="end">0</text>
<path class="ax" d="M95 297.5H117"/>
<text class="l" x="91" y="302.3" text-anchor="end">20</text>
<path class="ax" d="M95 282.5H117"/>
<text class="l" x="91" y="286.8" text-anchor="end">40</text>
<path class="ax" d="M95 266.5H117"/>
<text class="l" x="91" y="271.3" text-anchor="end">60</text>
<path class="ax" d="M95 251.5H117"/>
<text class="l" x="91" y="255.8" text-anchor="end">80</text>
<path class="ax" d="M95 235.5H117"/>
<text class="l" x="91" y="240.3" text-anchor="end">100</text>
<path class="ax" d="M95 220.5H117"/>
<text class="l" x="91" y="224.8" text-anchor="end">120</text>
<path class="ax" d="M95 204.5H117"/>
<text class="l" x="91" y="209.3" text-anchor="end">140</text>
<path class="ax" d="M95 189.5H117"/>
<text class="l" x="91" y="193.8" text-anchor="end">160</text>
<text class="l" x="95.2" y="323" text-anchor="middle">0</text>
<path class="ax" d="M179.5 313.5V309.0"/>
<text class="l" x="179.7" y="323" text-anchor="middle">50</text>
<path class="ax" d="M264.5 313.5V309.0"/>
<text class="l" x="264.2" y="323" text-anchor="middle">100</text>
<path class="ax" d="M348.5 313.5V309.0"/>
<text class="l" x="348.7" y="323" text-anchor="middle">150</text>
<path class="ax" d="M433.5 313.5V309.0"/>
<text class="l" x="433.2" y="323" text-anchor="middle">200</text>
<path class="ax" d="M517.5 313.5V309.0"/>
<text class="l" x="517.7" y="323" text-anchor="middle">250</text>
<path class="ax" d="M602.5 313.5V309.0"/>
<text class="l" x="602.2" y="323" text-anchor="middle">300</text>
<path class="ax" d="M686.5 313.5V309.0"/>
<text class="l" x="686.7" y="323" text-anchor="middle">350</text>
<path class="ax" d="M771.5 313.5V309.0"/>
<text class="l" x="771.2" y="323" text-anchor="middle">400</text>
<rect x="802" y="306" width="41" height="7" fill="#6300ff"/>
<rect x="802" y="300" width="41" height="6" fill="#3300ff"/>
<rect x="802" y="294" width="41" height="6" fill="#0014ff"/>
<rect x="802" y="288" width="41" height="6" fill="#0044ff"/>
<rect x="802" y="282" width="41" height="6" fill="#008bff"/>
<rect x="802" y="275" width="41" height="7" fill="#00bbff"/>
<rect x="802" y="269" width="41" height="6" fill="#00fffc"/>
<rect x="802" y="263" width="41" height="6" fill="#00ffcc"/>
<rect x="802" y="257" width="41" height="6" fill="#00ff85"/>
<rect x="802" y="251" width="41" height="6" fill="#00ff55"/>
<rect x="802" y="244" width="41" height="7" fill="#00ff0e"/>
<rect x="802" y="238" width="41" height="6" fill="#22ff00"/>
<rect x="802" y="232" width="41" height="6" fill="#69ff00"/>
<rect x="802" y="226" width="41" height="6" fill="#99ff00"/>
<rect x="802" y="220" width="41" height="6" fill="#e0ff00"/>
<rect x="802" y="213" width="41" height="7" fill="#ffee00"/>
<rect x="802" y="207" width="41" height="6" fill="#ffa700"/>
<rect x="802" y="201" width="41" height="6" fill="#ff7700"/>
<rect x="802" y="195" width="41" height="6" fill="#ff3000"/>
<rect x="802" y="189" width="41" height="6" fill="#ff0000"/>
<path class="ax" d="M842.5 189V314"/>
<path class="ax" d="M821 189.5H843"/>
<text class="z" x="846.3" y="191">2</text>
<path class="ax" d="M821 204.5H843"/>
<text class="z" x="846.3" y="206">1.5</text>
<path class="ax" d="M821 220.5H843"/>
<text class="z" x="846.3" y="222">1</text>
<path class="ax" d="M821 235.5H843"/>
<text class="z" x="846.3" y="237">0.5</text>
<path class="ax" d="M821 251.5H843"/>
<text class="z" x="846.3" y="253">0</text>
<path class="ax" d="M821 266.5H843"/>
<text class="z" x="846.3" y="268">-0.5</text>
<path class="ax" d="M821 282.5H843"/>
<text class="z" x="846.3" y="284">-1</text>
<path class="ax" d="M821 297.5H843"/>
<text class="z" x="846.3" y="299">-1.5</text>
<path class="ax" d="M821 313.5H843"/>
<text class="z" x="846.3" y="315">-2</text>
<rect x="266" y="265" width="2" height="1" fill="#00bbff"/>
<rect x="685" y="302" width="1" height="1" fill="#ffee00"/>
<rect x="690" y="312" width="1" height="1" fill="#00ff0e"/>
<text class="s b" x="312.5" y="355.3" xml:space="preserve">Test Summary of M0125</text>
<text class="s b" x="465.5" y="355.3" xml:space="preserve">T-10a</text>
<text class="s b" x="767.5" y="355.3" xml:space="preserve">GRADE:  A</text>
<text class="s" x="312.5" y="379.0" xml:space="preserve">ROCs &gt; 1% defects:</text>
<text class="s" x="447.3" y="379.0" xml:space="preserve">0</text>
<text class="s" x="312.5" y="396.5" xml:space="preserve">Dead Pixel:</text>
<text class="s" x="447.3" y="396.5" xml:space="preserve">0</text>
<text class="s" x="312.5" y="413.5" xml:space="preserve">Mask Defects:</text>
<text class="s" x="447.3" y="413.5" xml:space="preserve">0</text>
<text class="s" x="312.5" y="430.5" xml:space="preserve">Dead Bumps:</text>
<text class="s" x="447.3" y="430.5" xml:space="preserve">3</text>
<text class="s" x="312.5" y="447.3" xml:space="preserve">Dead Trimbits:</text>
<text class="s" x="447.3" y="447.3" xml:space="preserve">0</text>
<text class="s" x="312.5" y="464.0" xml:space="preserve">Address Probl:</text>
<text class="s" x="447.3" y="464.0" xml:space="preserve">0</text>
<text class="s" x="507.4" y="379.0" xml:space="preserve">Tested on:</text>
<text class="s" x="604.0" y="379.0" xml:space="preserve">Jul 12</text>
<text class="s" x="507.4" y="395.5" xml:space="preserve">Temp. [<tspan font-size="6.5" dy="-5.5">o</tspan><tspan dy="5.5">C]:</tspan></text>
<text class="s" x="604.0" y="395.5" xml:space="preserve">-10.0 +- 0.0</text>
<text class="s" x="507.4" y="412.0" xml:space="preserve">Trim / phCal:</text>
<text class="s" x="604.0" y="412.0" xml:space="preserve">yes / yes</text>
<text class="s" x="507.4" y="428.5" xml:space="preserve">Therm. cycl.:</text>
<text class="s" x="604.0" y="428.5" xml:space="preserve">yes</text>
<text class="s" x="507.4" y="445.0" xml:space="preserve">TBM1:</text>
<text class="s" x="604.0" y="445.0" xml:space="preserve">ok</text>
<text class="s" x="507.4" y="461.5" xml:space="preserve">TBM2:</text>
<text class="s" x="604.0" y="461.5" xml:space="preserve">ok</text>
<text class="s" x="670.0" y="379.0" xml:space="preserve">Noise [e]</text>
<text class="s" x="800.3" y="379.0" xml:space="preserve">162.6</text>
<text class="s" x="670.0" y="395.5" xml:space="preserve">Vcal Thr. Width [e]</text>
<text class="s" x="800.3" y="395.5" xml:space="preserve">83.7</text>
<text class="s" x="670.0" y="412.0" xml:space="preserve">Rel. Gain Width [%]</text>
<text class="s" x="800.3" y="412.0" xml:space="preserve">2.3</text>
<text class="s" x="670.0" y="428.5" xml:space="preserve">Pedestal Spread [e]</text>
<text class="s" x="800.3" y="428.5" xml:space="preserve">1204.7</text>
<text class="u" x="57.0" y="520.7">Noise</text>
<rect class="ax" x="47.5" y="527.5" width="151" height="121"/>
<text class="m" x="45.0" y="650.8" text-anchor="end">0</text>
<path class="ax" d="M47 628.5H53"/>
<text class="m" x="45.0" y="630.8" text-anchor="end">100</text>
<path class="ax" d="M47 607.5H53"/>
<text class="m" x="45.0" y="609.8" text-anchor="end">200</text>
<path class="ax" d="M47 587.5H53"/>
<text class="m" x="45.0" y="589.8" text-anchor="end">300</text>
<path class="ax" d="M47 567.5H53"/>
<text class="m" x="45.0" y="569.8" text-anchor="end">400</text>
<path class="ax" d="M47 547.5H53"/>
<text class="m" x="45.0" y="549.8" text-anchor="end">500</text>
<text class="m" x="45.0" y="529.8" text-anchor="end">600</text>
<text class="m" x="46.7" y="657.5" text-anchor="middle">0</text>
<path class="ax" d="M66.5 648V644"/>
<text class="m" x="65.7" y="657.5" text-anchor="middle">2</text>
<path class="ax" d="M85.5 648V644"/>
<text class="m" x="84.7" y="657.5" text-anchor="middle">4</text>
<path class="ax" d="M104.5 648V644"/>
<text class="m" x="103.7" y="657.5" text-anchor="middle">6</text>
<path class="ax" d="M123.5 648V644"/>
<text class="m" x="122.7" y="657.5" text-anchor="middle">8</text>
<path class="ax" d="M141.5 648V644"/>
<text class="m" x="140.7" y="657.5" text-anchor="middle">10</text>
<path class="ax" d="M160.5 648V644"/>
<text class="m" x="159.7" y="657.5" text-anchor="middle">12</text>
<path class="ax" d="M179.5 648V644"/>
<text class="m" x="178.7" y="657.5" text-anchor="middle">14</text>
<text class="m" x="197.7" y="657.5" text-anchor="middle">16</text>
<path d="M47 547.5H199" stroke="#f00" stroke-width="1" stroke-dasharray="3 3" fill="none" shape-rendering="crispEdges"/>
<path d="M47.8 614.5H50.5M54.5 614.5H57.2M52.5 609.3V612.5M52.5 616.5V619.7" stroke="#00f" stroke-width="1.15" fill="none"/>
<circle cx="52.5" cy="614.5" r="2.1" stroke="#00f" stroke-width="1.15" fill="none"/>
<path d="M56.8 610.5H59.5M63.5 610.5H66.2M61.5 605.3V608.5M61.5 612.5V615.7" stroke="#00f" stroke-width="1.15" fill="none"/>
<circle cx="61.5" cy="610.5" r="2.1" stroke="#00f" stroke-width="1.15" fill="none"/>
<path d="M65.8 615.5H68.5M72.5 615.5H75.2M70.5 610.3V613.5M70.5 617.5V620.7" stroke="#00f" stroke-width="1.15" fill="none"/>
<circle cx="70.5" cy="615.5" r="2.1" stroke="#00f" stroke-width="1.15" fill="none"/>
<path d="M75.8 617.5H78.5M82.5 617.5H85.2M80.5 612.3V615.5M80.5 619.5V622.7" stroke="#00f" stroke-width="1.15" fill="none"/>
<circle cx="80.5" cy="617.5" r="2.1" stroke="#00f" stroke-width="1.15" fill="none"/>
<path d="M84.8 617.5H87.5M91.5 617.5H94.2M89.5 612.3V615.5M89.5 619.5V622.7" stroke="#00f" stroke-width="1.15" fill="none"/>
<circle cx="89.5" cy="617.5" r="2.1" stroke="#00f" stroke-width="1.15" fill="none"/>
<path d="M94.8 615.5H97.5M101.5 615.5H104.2M99.5 610.3V613.5M99.5 617.5V620.7" stroke="#00f" stroke-width="1.15" fill="none"/>
<circle cx="99.5" cy="615.5" r="2.1" stroke="#00f" stroke-width="1.15" fill="none"/>
<path d="M103.8 616.5H106.5M110.5 616.5H113.2M108.5 611.3V614.5M108.5 618.5V621.7" stroke="#00f" stroke-width="1.15" fill="none"/>
<circle cx="108.5" cy="616.5" r="2.1" stroke="#00f" stroke-width="1.15" fill="none"/>
<path d="M113.8 616.5H116.5M120.5 616.5H123.2M118.5 611.3V614.5M118.5 618.5V621.7" stroke="#00f" stroke-width="1.15" fill="none"/>
<circle cx="118.5" cy="616.5" r="2.1" stroke="#00f" stroke-width="1.15" fill="none"/>
<path d="M122.8 617.5H125.5M129.5 617.5H132.2M127.5 612.3V615.5M127.5 619.5V622.7" stroke="#00f" stroke-width="1.15" fill="none"/>
<circle cx="127.5" cy="617.5" r="2.1" stroke="#00f" stroke-width="1.15" fill="none"/>
<path d="M132.8 616.5H135.5M139.5 616.5H142.2M137.5 611.3V614.5M137.5 618.5V621.7" stroke="#00f" stroke-width="1.15" fill="none"/>
<circle cx="137.5" cy="616.5" r="2.1" stroke="#00f" stroke-width="1.15" fill="none"/>
<path d="M141.8 617.5H144.5M148.5 617.5H151.2M146.5 612.3V615.5M146.5 619.5V622.7" stroke="#00f" stroke-width="1.15" fill="none"/>
<circle cx="146.5" cy="617.5" r="2.1" stroke="#00f" stroke-width="1.15" fill="none"/>
<path d="M150.8 614.5H153.5M157.5 614.5H160.2M155.5 609.3V612.5M155.5 616.5V619.7" stroke="#00f" stroke-width="1.15" fill="none"/>
<circle cx="155.5" cy="614.5" r="2.1" stroke="#00f" stroke-width="1.15" fill="none"/>
<path d="M160.8 615.5H163.5M167.5 615.5H170.2M165.5 610.3V613.5M165.5 617.5V620.7" stroke="#00f" stroke-width="1.15" fill="none"/>
<circle cx="165.5" cy="615.5" r="2.1" stroke="#00f" stroke-width="1.15" fill="none"/>
<path d="M169.8 615.5H172.5M176.5 615.5H179.2M174.5 610.3V613.5M174.5 617.5V620.7" stroke="#00f" stroke-width="1.15" fill="none"/>
<circle cx="174.5" cy="615.5" r="2.1" stroke="#00f" stroke-width="1.15" fill="none"/>
<path d="M179.8 611.5H182.5M186.5 611.5H189.2M184.5 606.3V609.5M184.5 613.5V616.7" stroke="#00f" stroke-width="1.15" fill="none"/>
<circle cx="184.5" cy="611.5" r="2.1" stroke="#00f" stroke-width="1.15" fill="none"/>
<path d="M188.8 616.5H191.5M195.5 616.5H198.2M193.5 611.3V614.5M193.5 618.5V621.7" stroke="#00f" stroke-width="1.15" fill="none"/>
<circle cx="193.5" cy="616.5" r="2.1" stroke="#00f" stroke-width="1.15" fill="none"/>
<text class="u" x="275.6" y="520.7">Vcal Thr. Width</text>
<rect class="ax" x="267.5" y="527.5" width="151" height="121"/>
<text class="m" x="265.0" y="650.8" text-anchor="end">0</text>
<path class="ax" d="M267 628.5H273"/>
<text class="m" x="265.0" y="630.8" text-anchor="end">50</text>
<path class="ax" d="M267 607.5H273"/>
<text class="m" x="265.0" y="609.8" text-anchor="end">100</text>
<path class="ax" d="M267 587.5H273"/>
<text class="m" x="265.0" y="589.8" text-anchor="end">150</text>
<path class="ax" d="M267 567.5H273"/>
<text class="m" x="265.0" y="569.8" text-anchor="end">200</text>
<path class="ax" d="M267 547.5H273"/>
<text class="m" x="265.0" y="549.8" text-anchor="end">250</text>
<text class="m" x="265.0" y="529.8" text-anchor="end">300</text>
<text class="m" x="266.7" y="657.5" text-anchor="middle">0</text>
<path class="ax" d="M286.5 648V644"/>
<text class="m" x="285.7" y="657.5" text-anchor="middle">2</text>
<path class="ax" d="M305.5 648V644"/>
<text class="m" x="304.7" y="657.5" text-anchor="middle">4</text>
<path class="ax" d="M324.5 648V644"/>
<text class="m" x="323.7" y="657.5" text-anchor="middle">6</text>
<path class="ax" d="M343.5 648V644"/>
<text class="m" x="342.7" y="657.5" text-anchor="middle">8</text>
<path class="ax" d="M361.5 648V644"/>
<text class="m" x="360.7" y="657.5" text-anchor="middle">10</text>
<path class="ax" d="M380.5 648V644"/>
<text class="m" x="379.7" y="657.5" text-anchor="middle">12</text>
<path class="ax" d="M399.5 648V644"/>
<text class="m" x="398.7" y="657.5" text-anchor="middle">14</text>
<text class="m" x="417.7" y="657.5" text-anchor="middle">16</text>
<path d="M267 567.5H419" stroke="#f00" stroke-width="1" stroke-dasharray="3 3" fill="none" shape-rendering="crispEdges"/>
<path d="M272.5 614.5L281.5 610.5L290.5 614.5L300.5 613.5L309.5 617.5L319.5 613.5L328.5 613.5L338.5 615.5L347.5 614.5L357.5 615.5L366.5 615.5L375.5 612.5L385.5 616.5L394.5 612.5L404.5 614.5L413.5 616.5" stroke="#5c4" stroke-width="1.15" fill="none"/>
<rect x="270.5" y="612.5" width="4" height="4" stroke="#5c4" stroke-width="1.1" fill="none"/>
<rect x="279.5" y="608.5" width="4" height="4" stroke="#5c4" stroke-width="1.1" fill="none"/>
<rect x="288.5" y="612.5" width="4" height="4" stroke="#5c4" stroke-width="1.1" fill="none"/>
<rect x="298.5" y="611.5" width="4" height="4" stroke="#5c4" stroke-width="1.1" fill="none"/>
<rect x="307.5" y="615.5" width="4" height="4" stroke="#5c4" stroke-width="1.1" fill="none"/>
<rect x="317.5" y="611.5" width="4" height="4" stroke="#5c4" stroke-width="1.1" fill="none"/>
<rect x="326.5" y="611.5" width="4" height="4" stroke="#5c4" stroke-width="1.1" fill="none"/>
<rect x="336.5" y="613.5" width="4" height="4" stroke="#5c4" stroke-width="1.1" fill="none"/>
<rect x="345.5" y="612.5" width="4" height="4" stroke="#5c4" stroke-width="1.1" fill="none"/>
<rect x="355.5" y="613.5" width="4" height="4" stroke="#5c4" stroke-width="1.1" fill="none"/>
<rect x="364.5" y="613.5" width="4" height="4" stroke="#5c4" stroke-width="1.1" fill="none"/>
<rect x="373.5" y="610.5" width="4" height="4" stroke="#5c4" stroke-width="1.1" fill="none"/>
<rect x="383.5" y="614.5" width="4" height="4" stroke="#5c4" stroke-width="1.1" fill="none"/>
<rect x="392.5" y="610.5" width="4" height="4" stroke="#5c4" stroke-width="1.1" fill="none"/>
<rect x="402.5" y="612.5" width="4" height="4" stroke="#5c4" stroke-width="1.1" fill="none"/>
<rect x="411.5" y="614.5" width="4" height="4" stroke="#5c4" stroke-width="1.1" fill="none"/>
<text class="u" x="496.0" y="520.7">Rel. Gain Width</text>
<rect class="ax" x="486.5" y="527.5" width="151" height="121"/>
<text class="m" x="484.0" y="650.8" text-anchor="end">0</text>
<path class="ax" d="M486 632.5H492"/>
<text class="m" x="484.0" y="634.8" text-anchor="end">0.02</text>
<path class="ax" d="M486 616.5H492"/>
<text class="m" x="484.0" y="618.8" text-anchor="end">0.04</text>
<path class="ax" d="M486 599.5H492"/>
<text class="m" x="484.0" y="601.8" text-anchor="end">0.06</text>
<path class="ax" d="M486 583.5H492"/>
<text class="m" x="484.0" y="585.8" text-anchor="end">0.08</text>
<path class="ax" d="M486 567.5H492"/>
<text class="m" x="484.0" y="569.8" text-anchor="end">0.1</text>
<path class="ax" d="M486 551.5H492"/>
<text class="m" x="484.0" y="553.8" text-anchor="end">0.12</text>
<path class="ax" d="M486 535.5H492"/>
<text class="m" x="484.0" y="537.8" text-anchor="end">0.14</text>
<text class="m" x="485.7" y="657.5" text-anchor="middle">0</text>
<path class="ax" d="M505.5 648V644"/>
<text class="m" x="504.7" y="657.5" text-anchor="middle">2</text>
<path class="ax" d="M524.5 648V644"/>
<text class="m" x="523.7" y="657.5" text-anchor="middle">4</text>
<path class="ax" d="M543.5 648V644"/>
<text class="m" x="542.7" y="657.5" text-anchor="middle">6</text>
<path class="ax" d="M562.5 648V644"/>
<text class="m" x="561.7" y="657.5" text-anchor="middle">8</text>
<path class="ax" d="M580.5 648V644"/>
<text class="m" x="579.7" y="657.5" text-anchor="middle">10</text>
<path class="ax" d="M599.5 648V644"/>
<text class="m" x="598.7" y="657.5" text-anchor="middle">12</text>
<path class="ax" d="M618.5 648V644"/>
<text class="m" x="617.7" y="657.5" text-anchor="middle">14</text>
<text class="m" x="636.7" y="657.5" text-anchor="middle">16</text>
<path d="M486 567.5H638" stroke="#f00" stroke-width="1" stroke-dasharray="3 3" fill="none" shape-rendering="crispEdges"/>
<path d="M491.5 622.5L500.5 623.5L509.5 630.5L519.5 632.5L528.5 628.5L538.5 629.5L547.5 630.5L557.5 631.5L566.5 628.5L576.5 632.5L585.5 629.5L594.5 632.5L604.5 631.5L613.5 634.5L623.5 633.5L632.5 630.5" stroke="#f0f" stroke-width="1.15" fill="none"/>
<path d="M491.5 619.7L493.8 624.0L489.2 624.0Z" stroke="#f0f" stroke-width="1.1" fill="none"/>
<path d="M500.5 620.7L502.8 625.0L498.2 625.0Z" stroke="#f0f" stroke-width="1.1" fill="none"/>
<path d="M509.5 627.7L511.8 632.0L507.2 632.0Z" stroke="#f0f" stroke-width="1.1" fill="none"/>
<path d="M519.5 629.7L521.8 634.0L517.2 634.0Z" stroke="#f0f" stroke-width="1.1" fill="none"/>
<path d="M528.5 625.7L530.8 630.0L526.2 630.0Z" stroke="#f0f" stroke-width="1.1" fill="none"/>
<path d="M538.5 626.7L540.8 631.0L536.2 631.0Z" stroke="#f0f" stroke-width="1.1" fill="none"/>
<path d="M547.5 627.7L549.8 632.0L545.2 632.0Z" stroke="#f0f" stroke-width="1.1" fill="none"/>
<path d="M557.5 628.7L559.8 633.0L555.2 633.0Z" stroke="#f0f" stroke-width="1.1" fill="none"/>
<path d="M566.5 625.7L568.8 630.0L564.2 630.0Z" stroke="#f0f" stroke-width="1.1" fill="none"/>
<path d="M576.5 629.7L578.8 634.0L574.2 634.0Z" stroke="#f0f" stroke-width="1.1" fill="none"/>
<path d="M585.5 626.7L587.8 631.0L583.2 631.0Z" stroke="#f0f" stroke-width="1.1" fill="none"/>
<path d="M594.5 629.7L596.8 634.0L592.2 634.0Z" stroke="#f0f" stroke-width="1.1" fill="none"/>
<path d="M604.5 628.7L606.8 633.0L602.2 633.0Z" stroke="#f0f" stroke-width="1.1" fill="none"/>
<path d="M613.5 631.7L615.8 636.0L611.2 636.0Z" stroke="#f0f" stroke-width="1.1" fill="none"/>
<path d="M623.5 630.7L625.8 635.0L621.2 635.0Z" stroke="#f0f" stroke-width="1.1" fill="none"/>
<path d="M632.5 627.7L634.8 632.0L630.2 632.0Z" stroke="#f0f" stroke-width="1.1" fill="none"/>
<text class="u" x="714.5" y="520.7">Pedestal Spread</text>
<rect class="ax" x="706.5" y="527.5" width="151" height="121"/>
<text class="m" x="704.0" y="650.8" text-anchor="end">0</text>
<path class="ax" d="M706 631.5H712"/>
<text class="m" x="704.0" y="633.8" text-anchor="end">500</text>
<path class="ax" d="M706 613.5H712"/>
<text class="m" x="704.0" y="615.8" text-anchor="end">1000</text>
<path class="ax" d="M706 596.5H712"/>
<text class="m" x="704.0" y="598.8" text-anchor="end">1500</text>
<path class="ax" d="M706 579.5H712"/>
<text class="m" x="704.0" y="581.8" text-anchor="end">2000</text>
<path class="ax" d="M706 561.5H712"/>
<text class="m" x="704.0" y="563.8" text-anchor="end">2500</text>
<path class="ax" d="M706 544.5H712"/>
<text class="m" x="704.0" y="546.8" text-anchor="end">3000</text>
<text class="m" x="704.0" y="529.8" text-anchor="end">3500</text>
<text class="m" x="705.7" y="657.5" text-anchor="middle">0</text>
<path class="ax" d="M725.5 648V644"/>
<text class="m" x="724.7" y="657.5" text-anchor="middle">2</text>
<path class="ax" d="M744.5 648V644"/>
<text class="m" x="743.7" y="657.5" text-anchor="middle">4</text>
<path class="ax" d="M763.5 648V644"/>
<text class="m" x="762.7" y="657.5" text-anchor="middle">6</text>
<path class="ax" d="M782.5 648V644"/>
<text class="m" x="781.7" y="657.5" text-anchor="middle">8</text>
<path class="ax" d="M800.5 648V644"/>
<text class="m" x="799.7" y="657.5" text-anchor="middle">10</text>
<path class="ax" d="M819.5 648V644"/>
<text class="m" x="818.7" y="657.5" text-anchor="middle">12</text>
<path class="ax" d="M838.5 648V644"/>
<text class="m" x="837.7" y="657.5" text-anchor="middle">14</text>
<text class="m" x="856.7" y="657.5" text-anchor="middle">16</text>
<path d="M706 561.5H858" stroke="#f00" stroke-width="1" stroke-dasharray="3 3" fill="none" shape-rendering="crispEdges"/>
<path d="M711.5 598.5L720.5 596.5L729.5 600.5L739.5 605.5L748.5 607.5L758.5 612.5L767.5 600.5L777.5 608.5L786.5 607.5L796.5 602.5L805.5 606.5L814.5 609.5L824.5 607.5L833.5 609.5L843.5 608.5L852.5 609.5" stroke="#000" stroke-width="1.15" fill="none"/>
<path d="M711.5 601.3L714.0 596.8L709.0 596.8Z" fill="#000"/>
<path d="M720.5 599.3L723.0 594.8L718.0 594.8Z" fill="#000"/>
<path d="M729.5 603.3L732.0 598.8L727.0 598.8Z" fill="#000"/>
<path d="M739.5 608.3L742.0 603.8L737.0 603.8Z" fill="#000"/>
<path d="M748.5 610.3L751.0 605.8L746.0 605.8Z" fill="#000"/>
<path d="M758.5 615.3L761.0 610.8L756.0 610.8Z" fill="#000"/>
<path d="M767.5 603.3L770.0 598.8L765.0 598.8Z" fill="#000"/>
<path d="M777.5 611.3L780.0 606.8L775.0 606.8Z" fill="#000"/>
<path d="M786.5 610.3L789.0 605.8L784.0 605.8Z" fill="#000"/>
<path d="M796.5 605.3L799.0 600.8L794.0 600.8Z" fill="#000"/>
<path d="M805.5 609.3L808.0 604.8L803.0 604.8Z" fill="#000"/>
<path d="M814.5 612.3L817.0 607.8L812.0 607.8Z" fill="#000"/>
<path d="M824.5 610.3L827.0 605.8L822.0 605.8Z" fill="#000"/>
<path d="M833.5 612.3L836.0 607.8L831.0 607.8Z" fill="#000"/>
<path d="M843.5 611.3L846.0 606.8L841.0 606.8Z" fill="#000"/>
<path d="M852.5 612.3L855.0 607.8L850.0 607.8Z" fill="#000"/>
</svg></body></html>
